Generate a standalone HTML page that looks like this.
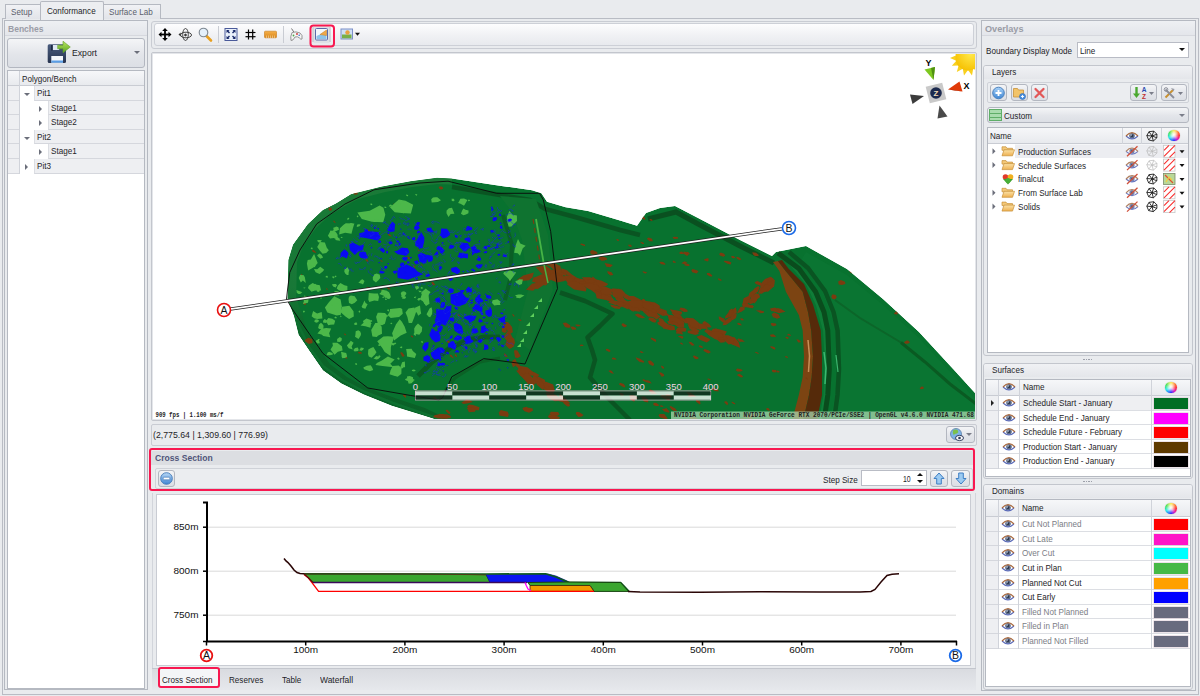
<!DOCTYPE html><html><head><meta charset="utf-8"><style>
*{box-sizing:border-box;margin:0;padding:0}
html,body{width:1200px;height:696px;overflow:hidden;background:#e9ebee;font-family:"Liberation Sans",sans-serif;font-size:11px;color:#1e1e28}
.a{position:absolute}
.t{position:absolute;white-space:nowrap;line-height:13px;font-size:10px;transform-origin:0 0;margin-top:-0.4px}
.panel{position:absolute;border:1px solid #b5b9c1;background:#e9ebee}
.hdr{position:absolute;left:0;right:0;top:0;background:linear-gradient(#eef0f3,#e1e3e8);border-bottom:1px solid #d5d8de}
.btn{position:absolute;border:1px solid #b3b7c0;border-radius:3px;background:linear-gradient(#f4f5f7,#e3e5ea 55%,#dcdfe5)}
.grid{position:absolute;border:1px solid #b5b9c1;background:#fff}
.gh{position:absolute;background:linear-gradient(#f6f7f9,#e8eaee);border-bottom:1px solid #c9ccd3}
.vl{position:absolute;width:1px;background:#d0d3da}
.hl{position:absolute;height:1px;background:#dddfe4}
.sw{position:absolute;box-shadow:0 0 0 0.500px rgba(215,195,205,0.9)}
.grey{color:#7b7d85}
</style></head><body><div class="a" style="left:1.500px;top:18px;width:1197.500px;height:677px;border:1px solid #b9bcc4;background:#e9ebee"></div>
<div class="a" style="left:5px;top:4px;width:36px;height:15px;border:1px solid #b5b9c1;border-bottom:none;background:linear-gradient(#f1f2f5,#e2e4e9)"></div>
<div class="a" style="left:103px;top:4px;width:58px;height:15px;border:1px solid #b5b9c1;border-bottom:none;background:linear-gradient(#f1f2f5,#e2e4e9)"></div>
<div class="a" style="left:40px;top:1px;width:64px;height:19px;border:1px solid #b5b9c1;border-bottom:none;background:#eceef1;border-radius:2px 2px 0 0"></div>
<div class="t " style="left:11px;top:5px;font-size:9.5px;transform:scaleX(0.853);color:#5a5d6b">Setup</div>
<div class="t " style="left:47px;top:4px;font-size:9.5px;transform:scaleX(0.853);">Conformance</div>
<div class="t " style="left:109px;top:5px;font-size:9.5px;transform:scaleX(0.853);color:#5a5d6b">Surface Lab</div>
<div class="panel" style="left:4px;top:20px;width:144px;height:670px"></div>
<div class="a" style="left:5px;top:21px;width:142px;height:15px;background:linear-gradient(#eef0f3,#e3e5ea)"></div>
<div class="a" style="left:5px;top:35px;width:142px;height:1px;background:#d6d8de"></div>
<div class="t " style="left:8px;top:22px;font-size:9.5px;font-weight:bold;transform:scaleX(0.897);color:#9a9ca6">Benches</div>
<div class="btn" style="left:7px;top:38px;width:138px;height:30px"></div>
<svg class="a" style="left:46px;top:40px" width="26" height="24" viewBox="0 0 26 24">
<defs><linearGradient id="fl" x1="0" y1="0" x2="0" y2="1"><stop offset="0" stop-color="#4a5c7e"/><stop offset="1" stop-color="#27344f"/></linearGradient>
<linearGradient id="ga" x1="0" y1="0" x2="0" y2="1"><stop offset="0" stop-color="#b9e660"/><stop offset="1" stop-color="#5aa422"/></linearGradient></defs>
<rect x="1.700" y="4.300" width="18.300" height="18.700" rx="1.500" fill="url(#fl)"/>
<rect x="6.700" y="5" width="6.500" height="5" fill="#dfe8f4"/>
<rect x="5" y="5" width="1.700" height="5.500" fill="#1e2a44"/>
<rect x="5.300" y="16" width="11.700" height="6.700" fill="#f4f7fb"/>
<rect x="5.300" y="20.500" width="11.700" height="2.200" fill="#5a9ee6"/>
<path d="M11.700 5.200 h5.300 v-4 l7.300 5.800 l-7.300 5.800 v-4 h-5.300z" fill="url(#ga)" stroke="#5f9d25" stroke-width="0.600"/>
</svg>
<div class="t " style="left:71.5px;top:46px;font-size:9.5px;transform:scaleX(0.911);">Export</div>
<div class="a" style="left:134px;top:51px;width:0;height:0;border-left:3px solid transparent;border-right:3px solid transparent;border-top:3px solid #6b6e7a"></div>
<div class="grid" style="left:7px;top:70px;width:138px;height:619px"></div>
<div class="gh" style="left:8px;top:71px;width:136px;height:15px"></div>
<div class="vl" style="left:19px;top:71px;height:103px"></div>
<div class="t " style="left:22px;top:72px;font-size:9.5px;transform:scaleX(0.853);">Polygon/Bench</div>
<div class="a" style="left:8px;top:86px;width:11px;height:15px;background:#eeeff2;border-bottom:1px solid #d5d7dd"></div>
<div class="a" style="left:34px;top:86px;width:110px;height:15px;background:#eeeff2;border-bottom:1px solid #d5d7dd;border-left:1px solid #dcdee3"></div>
<div class="t " style="left:37px;top:86.7px;font-size:9.5px;transform:scaleX(0.853);">Pit1</div>
<div class="a" style="left:24px;top:93px;width:0;height:0;border-left:3px solid transparent;border-right:3px solid transparent;border-top:3px solid #6b6e7a"></div>
<div class="a" style="left:8px;top:101px;width:11px;height:14px;background:#eeeff2;border-bottom:1px solid #d5d7dd"></div>
<div class="a" style="left:48px;top:101px;width:96px;height:14px;background:#eeeff2;border-bottom:1px solid #d5d7dd;border-left:1px solid #dcdee3"></div>
<div class="t " style="left:51px;top:101.7px;font-size:9.5px;transform:scaleX(0.853);">Stage1</div>
<div class="a" style="left:39px;top:105.5px;width:0;height:0;border-top:3px solid transparent;border-bottom:3px solid transparent;border-left:3px solid #6b6e7a"></div>
<div class="a" style="left:8px;top:115px;width:11px;height:15px;background:#eeeff2;border-bottom:1px solid #d5d7dd"></div>
<div class="a" style="left:48px;top:115px;width:96px;height:15px;background:#eeeff2;border-bottom:1px solid #d5d7dd;border-left:1px solid #dcdee3"></div>
<div class="t " style="left:51px;top:115.7px;font-size:9.5px;transform:scaleX(0.853);">Stage2</div>
<div class="a" style="left:39px;top:119.5px;width:0;height:0;border-top:3px solid transparent;border-bottom:3px solid transparent;border-left:3px solid #6b6e7a"></div>
<div class="a" style="left:8px;top:130px;width:11px;height:14px;background:#eeeff2;border-bottom:1px solid #d5d7dd"></div>
<div class="a" style="left:34px;top:130px;width:110px;height:14px;background:#eeeff2;border-bottom:1px solid #d5d7dd;border-left:1px solid #dcdee3"></div>
<div class="t " style="left:37px;top:130.7px;font-size:9.5px;transform:scaleX(0.853);">Pit2</div>
<div class="a" style="left:24px;top:137px;width:0;height:0;border-left:3px solid transparent;border-right:3px solid transparent;border-top:3px solid #6b6e7a"></div>
<div class="a" style="left:8px;top:144px;width:11px;height:15px;background:#eeeff2;border-bottom:1px solid #d5d7dd"></div>
<div class="a" style="left:48px;top:144px;width:96px;height:15px;background:#eeeff2;border-bottom:1px solid #d5d7dd;border-left:1px solid #dcdee3"></div>
<div class="t " style="left:51px;top:144.7px;font-size:9.5px;transform:scaleX(0.853);">Stage1</div>
<div class="a" style="left:39px;top:148.5px;width:0;height:0;border-top:3px solid transparent;border-bottom:3px solid transparent;border-left:3px solid #6b6e7a"></div>
<div class="a" style="left:8px;top:159px;width:11px;height:15px;background:#eeeff2;border-bottom:1px solid #d5d7dd"></div>
<div class="a" style="left:34px;top:159px;width:110px;height:15px;background:#eeeff2;border-bottom:1px solid #d5d7dd;border-left:1px solid #dcdee3"></div>
<div class="t " style="left:37px;top:159.7px;font-size:9.5px;transform:scaleX(0.853);">Pit3</div>
<div class="a" style="left:25px;top:163.5px;width:0;height:0;border-top:3px solid transparent;border-bottom:3px solid transparent;border-left:3px solid #6b6e7a"></div>
<div class="a" style="left:151px;top:21px;width:826px;height:28px;border:1px solid #c9ccd3;border-radius:3px;background:#e9ebee"></div>
<div class="a" style="left:154px;top:23px;width:820px;height:23px;border:1px solid #cdd0d7;border-radius:3px;background:linear-gradient(#fdfdfe,#f0f1f4 55%,#e8eaee)"></div>
<svg class="a" style="left:153px;top:22px" width="822" height="27" viewBox="153 22 822 27"><g transform="translate(165,34.500)" fill="#000" stroke="none"><rect x="-5" y="-0.900" width="10" height="1.800"/><rect x="-0.900" y="-5" width="1.800" height="10"/><path d="M-6.500 0 L-3.500 -2.800 V2.800z M6.500 0 L3.500 -2.800 V2.800z M0 -6.500 L-2.800 -3.500 H2.800z M0 6.500 L-2.800 3.500 H2.800z"/></g><g transform="translate(185.500,34.500)" fill="none" stroke="#333" stroke-width="0.900"><ellipse cx="0" cy="0" rx="2.800" ry="6"/><ellipse cx="0.500" cy="0.500" rx="5.500" ry="2.800"/><circle cx="0" cy="0.500" r="0.900" fill="#333"/><path d="M-7 0 l2.200 -2 v4z" fill="#333" stroke="none"/></g><g transform="translate(205,34)"><line x1="1.500" y1="2" x2="6" y2="6.500" stroke="#e8a020" stroke-width="2.600" stroke-linecap="round"/><circle cx="-1.500" cy="-1.500" r="4.300" fill="#e4f0fb" stroke="#7d8791" stroke-width="1.100"/></g><line x1="218.500" y1="26" x2="218.500" y2="43" stroke="#c9ccd3"/><g transform="translate(231,34.500)"><rect x="-6" y="-6" width="12" height="12" fill="#eaf1fb" stroke="#4a5a9a" stroke-width="1"/><g fill="#1a2a6a"><path d="M-4.500 -4.500 h3 l-1 1 1.500 1.500 -1 1 -1.500 -1.500 -1 1z"/><path d="M4.500 -4.500 v3 l-1 -1 -1.500 1.500 -1 -1 1.500 -1.500 -1 -1z"/><path d="M-4.500 4.500 v-3 l1 1 1.500 -1.500 1 1 -1.500 1.500 1 1z"/><path d="M4.500 4.500 h-3 l1 -1 -1.500 -1.500 1 -1 1.500 1.500 1 -1z"/></g></g><g transform="translate(250.500,34.500)" stroke="#000" stroke-width="1.200"><line x1="-2" y1="-5" x2="-2" y2="5"/><line x1="2.200" y1="-5" x2="2.200" y2="5"/><line x1="-5" y1="-2" x2="5" y2="-2"/><line x1="-5" y1="2.200" x2="5" y2="2.200"/></g><defs><linearGradient id="rul" x1="0" y1="0" x2="0" y2="1"><stop offset="0" stop-color="#f6b04a"/><stop offset="1" stop-color="#d9861a"/></linearGradient></defs><rect x="264.500" y="31.200" width="12" height="6.600" rx="0.800" fill="url(#rul)" stroke="#c97a18" stroke-width="0.600"/><line x1="266.5" y1="35.500" x2="266.5" y2="38" stroke="#f9dca8" stroke-width="0.600"/><line x1="268.5" y1="35.500" x2="268.5" y2="38" stroke="#f9dca8" stroke-width="0.600"/><line x1="270.5" y1="35.500" x2="270.5" y2="38" stroke="#f9dca8" stroke-width="0.600"/><line x1="272.5" y1="35.500" x2="272.5" y2="38" stroke="#f9dca8" stroke-width="0.600"/><line x1="274.5" y1="35.500" x2="274.5" y2="38" stroke="#f9dca8" stroke-width="0.600"/><line x1="283.500" y1="26" x2="283.500" y2="43" stroke="#c9ccd3"/><g transform="translate(296,35)"><path d="M-4.500 -6.500 L-1.500 -2" stroke="#777" stroke-width="1" fill="none"/><path d="M-4 -2.500 Q0 -4 4 -2 Q7 0 6 4 Q5 5 3.500 3 Q1.500 1 -1 2 Q-3 6 -5 5.500 Q-6 2 -4 -2.500z" fill="#f3f3f3" stroke="#8a8a8a" stroke-width="0.900"/><circle cx="-2.500" cy="0.500" r="0.900" fill="#4aa84a"/><circle cx="1" cy="-1" r="0.900" fill="#d03030"/><circle cx="3.200" cy="0.300" r="0.800" fill="#3a6ad0"/></g><rect x="313.500" y="26" width="16" height="17" fill="#dfe1e6"/><line x1="313" y1="27" x2="313" y2="42" stroke="#b7bac2"/><line x1="330" y1="27" x2="330" y2="42" stroke="#b7bac2"/><rect x="315.500" y="28.500" width="12" height="11.500" rx="1" fill="#f4f8fd" stroke="#5a6aaa" stroke-width="1"/><path d="M316.500 36 L320 34.500 L326.500 30.500 V39 H316.500z" fill="#8ec4ea"/><path d="M320 34.500 L326.500 30 V35.500z" fill="#f0a848" stroke="#d08020" stroke-width="0.500"/><rect x="310.500" y="25.500" width="23.500" height="21" rx="3" fill="none" stroke="#f81850" stroke-width="2"/><rect x="341" y="29" width="11.500" height="10" fill="#cfe0f6" stroke="#7d8fc8" stroke-width="1"/><rect x="342" y="34.500" width="9.500" height="3.800" fill="#78b048"/><circle cx="347.500" cy="32.500" r="2.200" fill="#e8a040"/><path d="M355 32.800 h5 l-2.500 3z" fill="#111"/></svg>
<div class="a" style="left:151px;top:52px;width:826px;height:369px;border:1px solid #c3c6cd;border-radius:2px;background:#fff;box-shadow:inset 0 0 0 1px #e4e6ea"></div>
<svg class="a" style="left:153px;top:54px" width="821.800" height="364.600" viewBox="153 54 821.800 364.600"><defs><linearGradient id="ringg" x1="0" y1="0" x2="1" y2="0"><stop offset="0" stop-color="#7a3c10"/><stop offset="1" stop-color="#4e2a08"/></linearGradient></defs><clipPath id="oc"><polygon points="287.5,300 288.4,260 293,244.7 308,224 323,210 336,203.6 351,194.3 381,186.8 410.7,181.2 437,177.8 452,178.4 494.7,185 532,190.2 541.4,193.3 547,201.7 565.7,207.3 588,211 620,220.4 637,225.7 646,213 660,208 675,206 700,219 740,240 772,256 776,252 806,246 847,269 883,299 919,332 955,371 976,394 976,420 438,420 422,415 392,405.8 364,394.6 341.6,383.4 323,370.3 310,351.6 298.7,334.8 294,316 288.4,301"/></clipPath><g clip-path="url(#oc)"><polygon points="287.5,300 288.4,260 293,244.7 308,224 323,210 336,203.6 351,194.3 381,186.8 410.7,181.2 437,177.8 452,178.4 494.7,185 532,190.2 541.4,193.3 547,201.7 565.7,207.3 588,211 620,220.4 637,225.7 646,213 660,208 675,206 700,219 740,240 772,256 776,252 806,246 847,269 883,299 919,332 955,371 976,394 976,420 438,420 422,415 392,405.8 364,394.6 341.6,383.4 323,370.3 310,351.6 298.7,334.8 294,316 288.4,301" fill="#08722f"/><linearGradient id="rimg" gradientUnits="userSpaceOnUse" x1="0" y1="180" x2="0" y2="420"><stop offset="0" stop-color="#1a7a37"/><stop offset="0.45" stop-color="#187837"/><stop offset="0.62" stop-color="#0c672a"/><stop offset="1" stop-color="#0a6027"/></linearGradient><polygon points="452,178.4 437,177.8 410.7,181.2 381,186.8 351,194.3 336,203.6 323,210 308,224 293,244.7 288.4,260 287.5,300 288.4,301 294,316 298.7,334.8 310,351.6 323,370.3 341.6,383.4 364,394.6 392,405.8 422,415 438,420 450,420 425,408 395,398 368,388 347,377 330,364 318,347 307,331 302,314 297,301 296,300 297,262 303,246 316,228 330,215 345,206 358,199 385,192 412,187 437,184 452,184.5" fill="url(#rimg)"/><polygon points="806,252 847,275 883,305 919,338 955,377 976,400 976,420 830,420 838,380 836,330 822,290 800,262" fill="#0a7532"/><polyline points="452,187 494,194 530,200 545,209 575,217 620,230 640,235" fill="none" stroke="#0a5522" stroke-width="4.500"/><polyline points="648,219 676,212 700,225 740,246 774,263" fill="none" stroke="#0a5020" stroke-width="5"/><polygon points="500,196 536,199 548,235 553,290 530,350 515,340 528,290 522,240 512,212" fill="#0f7330"/><polyline points="503,215 512,245 510,280 505,300" fill="none" stroke="#0a5f25" stroke-width="4"/><polyline points="418,376 432,362 450,348 468,340 485,337 500,337" fill="none" stroke="#0a5a22" stroke-width="5" stroke-linejoin="round"/><polyline points="438,400 455,378 480,362 500,358" fill="none" stroke="#0b6226" stroke-width="3"/><polyline points="560,292.500 585,301 612.500,313.700 600,326 587.500,337.500 592,350 595,360 590,377.500 605,395 620,410 630,420" fill="none" stroke="#0a5522" stroke-width="4.500" stroke-linejoin="round"/><polyline points="901,342.500 925,362 950,384 976,404" fill="none" stroke="#0a5a22" stroke-width="3"/><polyline points="835,300 860,318 901,342.500" fill="none" stroke="#0c6529" stroke-width="2"/><polyline points="297,322 309,347 323,366 342,380 365,392 393,403 422,413 442,420" fill="none" stroke="#0e7030" stroke-width="2.500"/><polygon points="773,262 779.4,271 785.9,291.7 798.8,315 802.7,330.5 804,356.4 802.7,377 798.8,395 792,421 803,421 809,395 811.7,377 813,356.4 811.2,330.5 808,312 802.7,291.7 784.6,269.7 778,261" fill="#7c4412"/><polygon points="778,261 784.6,269.7 802.7,291.7 808,312 811.2,330.5 813,356.4 811.7,377 809,395 803,421 817,421 822,395 822,377 822,356.4 820.8,330.5 813,304.6 804,284 788.4,268.4 782,260" fill="#552a0a"/><polyline points="808,340 809.500,356 808.500,372" fill="none" stroke="#c89058" stroke-width="1.500"/><polyline points="790,262 808,284 818,305 825,330.500 826.500,356 826,377 825.500,395 821,421" fill="none" stroke="#0f7d38" stroke-width="4"/><polyline points="778,253 798.800,268.400 815.600,291.700 824,312 827.800,330.500 829.300,369 827.800,395 824,421" fill="none" stroke="#0a4c1d" stroke-width="5" stroke-linejoin="round"/><polyline points="789,252 808,268 825,291 833.500,312 837.600,330.500 839,369 837.500,395 834,421" fill="none" stroke="#0a5422" stroke-width="4.500" stroke-linejoin="round"/><polyline points="824,352 826,368 825,384" fill="none" stroke="#3db870" stroke-width="1.500"/><polyline points="836,355 838,372" fill="none" stroke="#3db870" stroke-width="1.200"/><polygon points="532.1,281.7 533.6,277.6 544.0,278.0 550.6,279.5 546.1,285.2 540.2,284.4" fill="#7a3c10" transform="rotate(2 540.4 281.1)"/><polygon points="564.2,281.7 556.6,282.1 551.3,279.3 554.9,275.4 561.6,275.9 565.6,277.9" fill="#7a3c10" transform="rotate(-8 559.1 278.1)"/><polygon points="546.7,278.0 546.4,281.1 537.5,282.2 532.7,278.0 535.9,275.2 543.8,275.6" fill="#7a3c10" transform="rotate(-28 539.9 277.7)"/><polygon points="539.0,286.0 535.4,289.5 531.5,290.5 525.5,286.6 528.5,285.6 533.8,283.7" fill="#7a3c10" transform="rotate(-26 532.6 287.1)"/><polygon points="543.7,274.6 545.9,271.1 553.1,270.0 559.1,272.2 554.8,275.5 548.7,277.1" fill="#7a3c10" transform="rotate(-21 551.9 273.8)"/><polygon points="543.5,286.0 536.9,288.7 532.2,286.9 530.5,283.4 538.8,281.9 545.0,283.5" fill="#7a3c10" transform="rotate(-14 539.1 285.0)"/><polygon points="562.7,272.8 563.1,277.0 562.4,279.4 553.6,277.6 551.1,274.4 557.2,273.9" fill="#7a3c10" transform="rotate(-15 558.5 276.1)"/><polygon points="528.2,281.1 520.7,279.3 517.0,276.6 524.1,274.6 535.2,275.3 532.3,279.3" fill="#7a3c10" transform="rotate(-19 526.5 277.8)"/><polygon points="556.9,275.3 551.4,274.3 552.4,272.4 557.9,271.1 559.1,272.8 559.3,274.3" fill="#7a3c10" transform="rotate(-23 556.3 273.2)"/><polygon points="549.6,263.3 559.7,262.8 562.1,265.9 557.2,267.8 546.0,268.1 546.6,264.5" fill="#7a3c10" transform="rotate(27 553.5 265.6)"/><polygon points="693.2,327.4 699.4,327.4 699.3,329.7 697.1,331.7 689.8,331.4 685.3,328.7" fill="#7a3c10" transform="rotate(36 694.1 329.4)"/><polygon points="710.4,331.0 714.9,332.0 717.2,334.0 712.0,336.4 703.8,335.3 704.9,332.3" fill="#7a3c10" transform="rotate(33 711.3 333.7)"/><polygon points="590.6,278.8 598.6,279.9 602.1,282.2 598.1,284.2 591.3,284.1 590.5,280.7" fill="#7a3c10" transform="rotate(32 595.5 281.4)"/><polygon points="621.1,298.9 615.4,298.4 613.2,297.1 612.1,294.1 619.0,293.5 624.8,296.2" fill="#7a3c10" transform="rotate(21 617.7 296.5)"/><polygon points="592.3,297.2 596.6,292.8 606.0,290.7 615.4,293.6 615.6,297.0 604.3,298.5" fill="#7a3c10" transform="rotate(31 603.6 294.2)"/><polygon points="588.1,279.7 593.6,279.7 595.1,281.2 595.9,283.2 591.6,284.0 586.2,281.6" fill="#7a3c10" transform="rotate(11 591.5 281.4)"/><polygon points="589.4,285.1 595.2,282.3 599.9,283.6 603.5,286.7 601.9,290.1 591.0,288.1" fill="#7a3c10" transform="rotate(17 597.3 286.0)"/><polygon points="661.0,311.8 659.3,316.2 649.7,315.7 644.6,314.5 647.7,310.5 652.8,310.3" fill="#7a3c10" transform="rotate(29 651.6 312.9)"/><polygon points="597.4,299.5 595.1,294.3 597.8,292.3 607.0,292.4 612.1,295.0 607.0,299.5" fill="#7a3c10" transform="rotate(10 604.3 295.3)"/><polygon points="579.0,276.7 581.9,280.0 580.2,282.6 569.4,282.1 565.6,278.5 570.7,275.4" fill="#7a3c10" transform="rotate(23 573.2 278.9)"/><polygon points="615.3,287.3 610.8,290.3 607.3,292.8 597.0,291.5 595.7,288.7 604.1,286.6" fill="#7a3c10" transform="rotate(18 604.7 289.2)"/><polygon points="693.5,322.6 703.6,324.4 702.5,326.4 701.4,328.9 690.8,328.4 691.3,326.0" fill="#7a3c10" transform="rotate(15 697.0 326.3)"/><polygon points="588.1,284.7 579.4,287.9 572.5,284.2 573.8,279.5 586.3,278.3 593.4,281.8" fill="#7a3c10" transform="rotate(13 580.9 283.0)"/><polygon points="576.8,284.7 573.3,282.2 581.3,279.9 588.6,281.0 588.6,283.8 583.5,286.0" fill="#7a3c10" transform="rotate(30 582.5 282.5)"/><polygon points="725.1,330.5 722.0,331.8 715.9,334.2 711.4,333.2 712.6,330.1 716.2,329.0" fill="#7a3c10" transform="rotate(18 717.2 331.1)"/><polygon points="676.4,310.6 681.6,309.9 682.1,312.6 680.2,314.1 674.1,315.3 669.1,312.0" fill="#7a3c10" transform="rotate(21 677.1 312.4)"/><polygon points="654.4,307.2 652.3,306.8 647.6,303.8 653.6,302.9 659.0,303.3 660.3,305.8" fill="#7a3c10" transform="rotate(24 654.4 305.3)"/><polygon points="549.6,274.9 542.4,274.8 534.9,270.6 544.2,266.0 552.0,268.7 554.0,271.5" fill="#7a3c10" transform="rotate(18 546.7 271.0)"/><polygon points="665.7,307.1 667.7,311.2 664.7,313.6 654.7,313.8 649.7,311.3 652.9,308.7" fill="#7a3c10" transform="rotate(27 658.9 311.2)"/><polygon points="567.3,272.0 563.1,273.7 555.6,273.1 550.7,270.9 555.9,268.8 565.4,269.4" fill="#7a3c10" transform="rotate(25 559.0 271.5)"/><polygon points="686.5,322.3 682.4,325.6 670.9,326.0 665.9,321.6 675.5,316.3 683.5,318.0" fill="#7a3c10" transform="rotate(35 677.2 321.2)"/><polygon points="655.6,310.0 657.5,312.8 655.7,315.5 649.5,317.4 642.4,314.3 646.6,309.9" fill="#7a3c10" transform="rotate(18 651.0 314.0)"/><polygon points="643.1,309.4 636.7,307.5 637.5,305.5 644.3,303.6 653.3,306.4 648.9,309.5" fill="#7a3c10" transform="rotate(28 644.7 306.9)"/><polygon points="559.5,277.9 550.3,280.7 542.5,279.3 546.6,275.0 555.0,272.5 559.7,275.0" fill="#7a3c10" transform="rotate(9 552.6 276.6)"/><polygon points="669.8,312.7 664.4,315.0 659.7,314.4 658.2,311.9 662.9,310.5 667.5,311.8" fill="#7a3c10" transform="rotate(28 663.8 312.5)"/><polygon points="593.0,277.5 603.1,280.3 598.5,283.9 588.5,284.6 581.0,283.3 588.0,278.9" fill="#7a3c10" transform="rotate(32 591.8 281.2)"/><polygon points="549.7,267.9 548.2,265.5 555.5,263.0 560.0,265.4 560.2,267.8 554.5,269.4" fill="#7a3c10" transform="rotate(28 554.2 266.3)"/><polygon points="708.6,322.2 712.6,323.5 709.1,326.3 703.2,326.2 702.3,324.4 703.2,322.1" fill="#7a3c10" transform="rotate(33 706.0 324.0)"/><polygon points="630.4,295.0 631.9,298.0 628.6,299.2 624.5,299.0 620.6,296.5 624.1,294.8" fill="#7a3c10" transform="rotate(28 626.8 297.4)"/><polygon points="674.9,317.4 670.7,314.9 677.0,313.5 681.0,314.7 683.4,316.5 680.7,318.1" fill="#7a3c10" transform="rotate(18 677.7 315.7)"/><polygon points="717.0,341.6 714.2,339.1 718.7,336.4 724.4,337.8 725.9,339.8 722.5,342.4" fill="#7a3c10" transform="rotate(32 721.0 339.4)"/><polygon points="593.9,281.8 599.9,280.5 607.8,280.6 606.7,283.4 601.4,287.4 597.3,285.3" fill="#7a3c10" transform="rotate(25 600.3 283.4)"/><polygon points="570.0,285.0 563.5,282.2 562.8,279.5 571.8,278.5 578.9,279.1 577.4,282.6" fill="#7a3c10" transform="rotate(33 571.4 280.9)"/><polygon points="627.0,299.1 627.7,301.9 624.7,303.9 616.2,303.0 612.6,300.6 619.0,296.7" fill="#7a3c10" transform="rotate(35 621.7 300.9)"/><polygon points="610.8,292.2 610.5,290.2 618.7,288.6 621.6,290.4 624.4,293.3 616.0,293.8" fill="#7a3c10" transform="rotate(7 617.6 291.6)"/><polygon points="567.1,274.7 561.8,274.7 559.9,271.9 565.8,270.6 572.4,271.6 572.9,273.3" fill="#7a3c10" transform="rotate(32 566.9 272.6)"/><polygon points="726.7,330.8 724.6,335.8 718.2,334.7 711.7,333.0 714.8,328.9 720.0,329.3" fill="#7a3c10" transform="rotate(6 719.3 332.2)"/><polygon points="631.6,297.5 642.9,297.2 644.9,302.9 636.7,304.4 631.3,302.7 626.1,300.4" fill="#7a3c10" transform="rotate(29 635.3 300.7)"/><polygon points="547.8,266.7 551.9,270.4 549.7,274.6 540.7,273.8 536.7,272.0 539.3,268.9" fill="#7a3c10" transform="rotate(33 544.0 271.4)"/><polygon points="555.0,277.7 559.3,276.1 564.6,275.5 567.8,278.6 562.8,279.9 558.1,279.7" fill="#7a3c10" transform="rotate(18 561.0 277.9)"/><polygon points="622.9,302.1 633.2,302.9 640.1,305.7 634.8,310.9 628.9,309.0 622.2,306.8" fill="#7a3c10" transform="rotate(17 630.9 306.0)"/><polygon points="644.2,306.6 641.1,303.2 649.2,301.7 654.0,303.4 654.8,306.4 651.5,308.1" fill="#7a3c10" transform="rotate(9 648.3 304.8)"/><polygon points="669.0,319.9 665.6,318.1 670.6,316.1 677.1,317.0 677.0,319.6 673.0,321.3" fill="#7a3c10" transform="rotate(29 673.0 318.9)"/><polygon points="694.0,328.0 697.2,324.3 701.8,323.7 705.7,324.0 708.5,327.1 703.1,328.3" fill="#7a3c10" transform="rotate(17 701.5 325.9)"/><polygon points="632.9,304.1 642.1,304.9 650.6,306.2 648.7,311.2 639.5,310.2 632.5,308.1" fill="#7a3c10" transform="rotate(12 640.7 307.6)"/><polygon points="730.1,338.9 724.6,339.5 720.5,338.3 718.0,336.6 723.1,335.7 728.0,336.5" fill="#7a3c10" transform="rotate(23 724.0 337.3)"/><polygon points="660.4,305.9 657.1,310.6 644.9,309.4 640.5,306.0 646.9,303.6 654.5,302.1" fill="#7a3c10" transform="rotate(7 652.4 305.9)"/><polygon points="572.0,281.8 580.7,282.8 586.9,286.5 586.7,289.9 574.7,290.0 566.3,286.0" fill="#7a3c10" transform="rotate(11 577.3 286.0)"/><polygon points="642.9,305.9 637.6,303.6 642.1,301.0 648.4,300.0 652.2,303.3 647.2,305.5" fill="#7a3c10" transform="rotate(20 644.7 303.0)"/><polygon points="725.6,343.8 727.8,340.1 732.6,337.3 738.2,339.6 742.4,344.7 732.8,344.7" fill="#7a3c10" transform="rotate(24 733.3 341.5)"/><polygon points="700.9,324.5 693.1,326.4 683.1,324.9 684.7,321.5 690.7,318.2 697.9,319.0" fill="#7a3c10" transform="rotate(33 692.0 322.5)"/><polygon points="723.4,340.8 722.8,336.7 727.5,335.6 734.0,336.4 734.5,341.8 730.2,344.4" fill="#7a3c10" transform="rotate(15 728.8 338.7)"/><polygon points="620.7,288.6 625.3,291.4 622.2,298.2 613.9,297.5 611.7,292.5 611.3,289.9" fill="#7a3c10" transform="rotate(15 617.8 293.0)"/><polygon points="724.3,334.0 728.4,338.1 723.4,338.8 718.5,339.9 715.9,337.7 717.7,333.2" fill="#7a3c10" transform="rotate(15 720.6 337.1)"/><polygon points="719.9,338.7 716.2,339.7 707.6,337.0 711.3,333.3 718.4,330.6 724.0,335.4" fill="#7a3c10" transform="rotate(17 716.8 335.5)"/><polygon points="674.0,324.2 670.2,322.3 668.1,319.3 674.2,317.3 681.2,317.6 684.2,322.1" fill="#7a3c10" transform="rotate(14 675.0 319.9)"/><polygon points="602.9,294.9 596.4,293.2 599.1,289.1 603.0,290.2 609.6,291.8 606.9,295.1" fill="#7a3c10" transform="rotate(21 603.3 292.3)"/><polygon points="586.0,288.5 583.6,285.5 589.9,283.2 597.8,283.9 600.5,287.8 594.2,290.8" fill="#7a3c10" transform="rotate(13 591.4 286.2)"/><polygon points="638.9,299.8 646.2,303.5 643.8,306.6 633.6,308.2 628.6,304.8 628.0,301.9" fill="#7a3c10" transform="rotate(6 636.5 304.6)"/><polygon points="648.0,309.3 642.0,307.4 641.9,303.9 645.8,302.1 653.2,303.7 653.4,309.0" fill="#7a3c10" transform="rotate(21 647.0 306.4)"/><polygon points="608.3,288.3 613.8,292.1 608.2,294.2 603.1,295.7 599.5,292.8 602.8,290.6" fill="#7a3c10" transform="rotate(20 606.1 292.0)"/><polygon points="675.8,332.4 676.1,329.9 679.6,329.5 683.1,331.0 683.4,332.7 677.6,332.7" fill="#7a3c10" transform="rotate(28 678.7 331.6)"/><polygon points="623.6,307.9 620.0,307.2 621.5,304.8 623.9,302.6 628.1,304.0 629.9,307.0" fill="#7a3c10" transform="rotate(32 624.8 305.6)"/><polygon points="658.1,325.3 656.9,323.8 659.1,321.9 664.3,322.5 667.2,324.7 662.5,326.3" fill="#7a3c10" transform="rotate(19 661.1 324.2)"/><polygon points="707.6,341.5 700.2,340.8 696.1,339.1 700.5,335.8 710.0,337.3 709.6,339.1" fill="#7a3c10" transform="rotate(17 703.9 338.9)"/><polygon points="616.4,305.4 620.6,305.6 619.9,307.8 615.1,308.5 611.4,307.7 609.6,305.6" fill="#7a3c10" transform="rotate(13 615.0 307.0)"/><polygon points="611.5,297.8 608.0,299.3 602.4,299.1 600.5,296.7 601.7,294.8 610.1,295.5" fill="#7a3c10" transform="rotate(18 605.2 297.3)"/><polygon points="639.2,317.9 634.7,317.1 636.9,314.6 641.5,314.6 644.6,315.5 642.3,316.6" fill="#7a3c10" transform="rotate(27 639.7 315.9)"/><polygon points="670.9,330.0 663.4,329.5 660.7,326.4 668.1,324.5 674.1,325.3 675.4,328.8" fill="#7a3c10" transform="rotate(11 668.9 327.6)"/><polygon points="669.0,324.5 666.8,322.6 669.2,321.4 673.0,321.0 674.7,322.5 673.3,324.2" fill="#7a3c10" transform="rotate(21 670.5 322.9)"/><polygon points="662.0,323.8 658.4,321.9 657.2,319.8 661.6,318.8 665.9,320.8 665.9,322.4" fill="#7a3c10" transform="rotate(34 661.6 321.2)"/><polygon points="676.0,331.3 677.2,328.4 682.0,327.1 686.1,327.5 686.1,330.6 679.1,332.3" fill="#7a3c10" transform="rotate(10 680.7 329.7)"/><polygon points="621.5,307.3 616.3,305.8 615.6,302.7 620.7,301.5 626.2,302.9 624.8,304.5" fill="#7a3c10" transform="rotate(16 620.9 303.9)"/><polygon points="693.2,330.0 695.8,330.5 699.1,332.6 696.0,334.5 688.2,334.2 687.5,332.2" fill="#7a3c10" transform="rotate(13 693.5 332.2)"/><polygon points="641.0,310.4 632.3,311.5 628.3,309.7 631.8,307.6 638.1,306.4 638.5,308.0" fill="#7a3c10" transform="rotate(13 634.9 308.9)"/><polygon points="652.0,317.8 656.3,318.5 656.2,321.1 653.2,321.8 648.2,321.5 648.5,319.3" fill="#7a3c10" transform="rotate(30 652.5 320.2)"/><polygon points="616.4,305.0 608.2,303.1 609.4,301.9 612.6,300.0 617.6,300.7 616.7,303.3" fill="#7a3c10" transform="rotate(7 613.5 302.2)"/><polygon points="674.3,325.2 671.5,324.8 672.3,322.6 676.4,322.5 680.0,323.8 678.2,324.7" fill="#7a3c10" transform="rotate(18 675.8 324.0)"/><polygon points="659.3,326.1 658.6,324.1 660.8,321.1 667.6,322.9 671.3,324.8 667.8,327.4" fill="#7a3c10" transform="rotate(23 664.2 324.4)"/><polygon points="735.0,319.0 730.9,318.9 729.2,315.5 732.0,314.9 738.2,315.5 736.9,317.3" fill="#7a3c10" transform="rotate(-35 734.0 317.0)"/><polygon points="738.9,303.3 740.6,299.7 747.2,297.4 751.0,300.1 752.0,302.7 748.0,303.5" fill="#7a3c10" transform="rotate(-60 746.1 300.9)"/><polygon points="729.0,312.9 727.1,311.9 730.3,309.8 733.7,310.0 733.4,312.1 731.9,313.0" fill="#7a3c10" transform="rotate(-37 730.6 311.7)"/><polygon points="767.7,290.8 763.5,292.5 759.0,291.1 756.8,288.0 763.5,285.8 769.9,288.8" fill="#7a3c10" transform="rotate(-50 763.2 289.5)"/><polygon points="755.3,292.3 756.1,295.3 751.5,296.4 748.0,294.9 746.5,293.5 751.0,291.5" fill="#7a3c10" transform="rotate(-48 751.9 294.0)"/><polygon points="724.1,323.3 721.4,321.2 725.0,319.3 731.7,319.5 732.6,322.1 731.1,323.8" fill="#7a3c10" transform="rotate(-40 727.4 321.6)"/><polygon points="738.4,311.0 736.0,315.3 730.3,316.0 725.8,313.4 727.1,310.2 734.2,310.7" fill="#7a3c10" transform="rotate(-42 732.3 312.6)"/><polygon points="749.9,300.1 751.7,301.3 750.8,302.8 746.3,302.7 744.6,301.8 746.5,300.0" fill="#7a3c10" transform="rotate(-43 748.3 301.4)"/><polygon points="752.4,300.7 752.6,298.9 755.8,299.5 757.8,300.1 756.9,301.6 752.7,302.5" fill="#7a3c10" transform="rotate(-41 755.1 300.6)"/><polygon points="763.8,285.8 766.6,283.2 773.9,282.8 775.3,285.7 771.3,287.3 763.4,288.1" fill="#7a3c10" transform="rotate(-58 768.3 285.4)"/><polygon points="751.5,303.1 748.4,302.2 749.0,300.0 751.3,298.1 756.8,298.7 756.9,302.8" fill="#7a3c10" transform="rotate(-36 752.2 301.1)"/><polygon points="732.6,313.0 735.0,315.5 731.1,317.0 726.5,315.6 723.2,313.9 725.6,312.6" fill="#7a3c10" transform="rotate(-51 729.1 314.4)"/><polygon points="737.5,309.1 742.4,307.3 744.8,308.6 744.5,311.9 740.9,311.7 735.6,310.1" fill="#7a3c10" transform="rotate(-40 741.0 309.8)"/><polygon points="750.9,291.2 752.1,288.5 755.6,287.7 760.4,289.3 760.3,291.2 756.0,292.4" fill="#7a3c10" transform="rotate(-52 756.0 289.9)"/><polygon points="766.8,277.8 773.1,278.7 774.5,282.2 772.5,286.8 764.2,286.1 763.5,282.2" fill="#7a3c10" transform="rotate(-29 768.2 282.0)"/><polygon points="767.0,286.0 762.8,287.9 759.8,284.5 760.7,282.1 767.5,280.9 770.5,283.3" fill="#7a3c10" transform="rotate(-39 764.0 284.5)"/><polygon points="769.6,285.5 771.7,288.4 768.2,290.7 762.5,289.1 763.8,285.4 768.0,285.1" fill="#7a3c10" transform="rotate(-38 767.4 287.3)"/><polygon points="777.5,285.4 772.3,289.4 764.1,288.9 762.0,286.1 765.0,281.7 770.8,282.5" fill="#7a3c10" transform="rotate(-45 769.4 285.6)"/><polygon points="764.9,291.0 761.8,290.1 759.4,286.9 767.1,285.0 769.0,285.8 771.6,290.3" fill="#7a3c10" transform="rotate(-34 765.7 287.9)"/><polygon points="749.7,296.5 751.8,293.9 758.0,294.0 759.9,296.5 759.4,299.2 752.9,300.0" fill="#7a3c10" transform="rotate(-33 755.9 296.8)"/><polygon points="763.9,310.4 764.0,311.7 761.1,313.2 759.0,312.6 755.6,311.9 759.6,310.4" fill="#7a3c10" transform="rotate(18 760.4 311.7)"/><polygon points="752.6,307.8 749.3,307.7 746.4,307.2 746.7,305.4 752.2,304.6 754.0,305.8" fill="#7a3c10" transform="rotate(16 750.4 306.4)"/><polygon points="771.4,315.7 773.0,313.1 777.8,313.1 780.6,315.6 778.2,317.8 773.8,317.9" fill="#7a3c10" transform="rotate(21 775.2 315.6)"/><polygon points="743.2,307.8 741.8,304.9 745.7,303.4 750.5,304.6 753.5,306.8 748.5,307.2" fill="#7a3c10" transform="rotate(14 747.1 305.7)"/><polygon points="774.6,312.3 774.0,310.2 777.4,308.1 780.9,308.6 785.6,310.6 779.6,313.2" fill="#7a3c10" transform="rotate(9 778.9 310.4)"/><polygon points="774.5,307.6 776.9,308.7 779.9,310.6 776.5,311.5 771.5,311.9 769.8,309.7" fill="#7a3c10" transform="rotate(13 775.3 310.1)"/><polygon points="517.3,362.0 518.0,365.1 513.2,365.4 511.4,363.0 510.5,360.4 515.2,360.2" fill="#7a3c10" transform="rotate(73 514.1 362.8)"/><polygon points="509.8,341.6 505.0,339.0 508.3,337.3 511.6,336.0 515.3,339.9 511.9,341.8" fill="#7a3c10" transform="rotate(68 510.4 339.4)"/><polygon points="512.9,340.1 507.4,343.3 502.1,338.7 505.9,335.9 510.3,334.4 514.0,336.3" fill="#7a3c10" transform="rotate(84 509.3 338.0)"/><polygon points="503.4,329.2 501.8,325.9 504.2,323.3 507.9,324.2 510.5,326.3 507.8,327.8" fill="#7a3c10" transform="rotate(83 506.2 326.1)"/><polygon points="502.2,327.8 508.8,325.7 513.8,326.8 514.5,330.6 508.6,331.4 504.0,331.0" fill="#7a3c10" transform="rotate(69 509.4 328.8)"/><polygon points="520.7,350.4 521.1,353.8 519.7,356.2 514.0,355.0 512.5,353.8 514.1,351.4" fill="#7a3c10" transform="rotate(68 516.4 353.4)"/><polygon points="511.4,341.4 513.0,343.3 513.1,346.2 510.2,346.2 506.8,344.5 505.5,342.5" fill="#7a3c10" transform="rotate(63 510.0 343.9)"/><polygon points="512.8,347.2 508.3,345.5 508.0,341.5 512.1,341.1 516.4,342.7 516.7,344.9" fill="#7a3c10" transform="rotate(84 512.8 343.3)"/><polygon points="508.7,338.9 514.1,342.6 514.5,345.7 509.1,348.4 503.8,344.3 504.4,341.1" fill="#7a3c10" transform="rotate(73 509.6 343.9)"/><polygon points="507.2,328.5 506.9,330.8 504.4,332.5 501.5,330.8 501.0,329.1 503.6,327.5" fill="#7a3c10" transform="rotate(63 504.0 329.9)"/><polygon points="556.9,394.4 562.6,397.2 556.5,400.4 548.2,399.5 544.6,395.5 550.2,393.3" fill="#7a3c10" transform="rotate(22 553.2 396.6)"/><polygon points="538.9,388.5 549.2,385.4 555.0,388.7 554.2,391.4 548.5,392.7 540.4,393.0" fill="#7a3c10" transform="rotate(38 549.3 389.8)"/><polygon points="571.1,398.0 567.4,400.4 560.0,403.5 559.1,401.1 556.5,396.6 563.5,396.9" fill="#7a3c10" transform="rotate(37 562.8 399.7)"/><polygon points="569.5,405.4 567.4,405.9 563.2,405.8 562.0,402.9 566.6,402.1 570.1,403.1" fill="#7a3c10" transform="rotate(40 566.9 404.4)"/><polygon points="554.5,389.9 542.9,388.9 539.4,386.5 544.3,383.3 552.0,382.7 554.7,385.7" fill="#7a3c10" transform="rotate(27 548.6 386.1)"/><polygon points="534.9,376.9 544.0,376.0 546.4,378.9 539.1,382.9 533.8,382.7 532.4,378.5" fill="#7a3c10" transform="rotate(31 537.6 379.4)"/><polygon points="521.1,377.0 515.1,374.1 520.8,371.8 525.6,371.7 531.9,374.3 526.5,378.9" fill="#7a3c10" transform="rotate(24 524.0 374.4)"/><polygon points="537.8,377.6 536.3,381.6 529.0,381.1 518.3,379.9 523.8,376.4 528.8,375.6" fill="#7a3c10" transform="rotate(31 528.5 378.4)"/><polygon points="535.0,371.9 527.4,375.2 518.3,373.7 517.9,368.5 526.0,366.6 533.3,369.0" fill="#7a3c10" transform="rotate(22 525.3 370.3)"/><polygon points="533.6,372.0 539.3,372.2 538.2,375.0 531.7,375.9 527.9,375.0 529.6,372.8" fill="#7a3c10" transform="rotate(26 533.3 373.9)"/><polygon points="578.0,412.3 583.4,413.0 582.4,415.2 579.5,417.1 575.7,415.2 575.6,413.4" fill="#7a3c10" transform="rotate(25 579.0 414.5)"/><polygon points="518.0,367.4 513.6,366.2 513.4,364.3 518.3,363.9 522.3,364.5 522.1,366.4" fill="#7a3c10" transform="rotate(47 517.9 365.4)"/><polygon points="537.5,377.0 535.5,380.5 531.0,384.6 522.7,382.9 521.7,377.6 525.9,376.3" fill="#7a3c10" transform="rotate(40 530.1 380.1)"/><polygon points="545.2,381.5 547.1,385.2 539.1,386.5 534.4,384.4 532.6,381.0 540.5,380.0" fill="#7a3c10" transform="rotate(49 539.7 383.1)"/><polygon points="538.3,376.8 539.2,378.5 537.9,380.2 533.9,381.2 532.3,379.4 531.9,377.6" fill="#7a3c10" transform="rotate(45 535.6 379.1)"/><polygon points="551.6,391.0 548.3,389.9 547.3,388.1 551.3,387.1 553.9,387.6 555.5,389.5" fill="#7a3c10" transform="rotate(27 551.4 389.1)"/><polygon points="696.4,402.9 695.6,401.4 696.0,400.6 699.5,400.3 700.9,402.1 701.0,403.3" fill="#7a3c10" transform="rotate(29 698.3 401.8)"/><polygon points="675.7,423.0 671.2,423.5 669.1,422.3 670.6,420.6 673.6,420.5 676.9,421.5" fill="#7a3c10" transform="rotate(9 672.6 422.2)"/><polygon points="619.9,393.3 622.0,393.0 624.3,393.9 622.3,395.4 620.4,395.2 619.0,394.1" fill="#7a3c10" transform="rotate(17 621.0 394.3)"/><polygon points="694.4,416.8 699.2,418.6 698.7,422.0 693.6,421.8 690.4,420.5 689.4,417.5" fill="#7a3c10" transform="rotate(15 694.3 419.5)"/><polygon points="642.6,381.2 642.3,380.5 643.2,379.6 646.4,379.9 647.4,380.7 645.0,381.5" fill="#7a3c10" transform="rotate(25 644.5 380.6)"/><polygon points="661.1,418.7 658.7,418.0 658.5,416.0 662.8,413.6 668.1,415.5 666.6,417.3" fill="#7a3c10" transform="rotate(31 662.6 416.5)"/><polygon points="661.7,411.2 664.2,409.4 665.1,408.2 670.0,409.7 669.5,411.0 665.3,412.1" fill="#7a3c10" transform="rotate(30 665.9 410.3)"/><polygon points="640.7,397.5 644.2,396.9 648.2,398.3 649.0,401.0 644.7,401.5 641.4,399.6" fill="#7a3c10" transform="rotate(22 644.5 399.5)"/><polygon points="670.2,398.8 664.1,399.1 659.6,398.2 661.7,396.2 666.6,395.4 670.3,396.3" fill="#7a3c10" transform="rotate(21 665.1 397.2)"/><polygon points="648.5,393.0 649.0,391.2 652.7,390.7 657.3,391.5 655.2,392.9 652.6,394.2" fill="#7a3c10" transform="rotate(30 652.9 392.1)"/><polygon points="631.2,395.7 635.4,395.4 638.4,397.4 636.4,398.7 633.3,399.5 628.4,397.2" fill="#7a3c10" transform="rotate(16 634.0 397.4)"/><polygon points="672.6,396.0 670.7,397.4 666.7,396.6 664.7,395.6 667.3,394.3 670.0,394.4" fill="#7a3c10" transform="rotate(15 668.5 395.6)"/><polygon points="677.7,408.7 674.8,410.3 671.9,409.7 668.9,408.6 669.9,407.2 675.0,407.2" fill="#7a3c10" transform="rotate(28 672.8 408.5)"/><polygon points="634.6,400.6 630.2,400.7 629.1,399.2 630.6,397.9 633.7,397.4 635.6,399.4" fill="#7a3c10" transform="rotate(33 632.5 399.4)"/><polygon points="658.3,312.7 660.6,312.0 664.2,312.2 663.6,313.0 663.3,314.2 659.0,313.9" fill="#7a3c10" transform="rotate(30 661.7 312.9)"/><polygon points="626.5,325.7 624.9,327.1 622.2,326.4 621.3,325.2 622.4,323.8 626.8,324.2" fill="#7a3c10" transform="rotate(25 624.0 325.2)"/><polygon points="684.5,415.8 682.7,415.4 681.5,414.5 683.9,414.1 685.0,414.2 686.0,415.4" fill="#7a3c10" transform="rotate(14 683.8 414.9)"/><polygon points="752.7,430.3 751.8,429.1 754.3,428.2 756.2,428.8 757.5,429.4 754.8,430.6" fill="#7a3c10" transform="rotate(26 754.7 429.5)"/><polygon points="788.8,337.7 787.8,338.8 786.3,338.4 785.2,337.8 786.3,337.0 788.2,336.9" fill="#7a3c10" transform="rotate(16 787.1 337.8)"/><polygon points="642.2,272.1 645.0,271.6 647.0,271.9 646.3,273.1 644.6,273.5 643.0,273.0" fill="#7a3c10" transform="rotate(20 645.0 272.5)"/><polygon points="650.7,339.0 652.4,338.6 655.5,338.0 657.0,340.1 654.6,340.6 650.6,340.4" fill="#7a3c10" transform="rotate(33 653.4 339.5)"/><polygon points="711.4,390.1 713.9,388.5 716.4,388.5 719.5,388.7 717.0,390.4 714.8,391.3" fill="#7a3c10" transform="rotate(33 715.2 389.6)"/><polygon points="663.8,405.7 662.3,406.8 660.2,406.9 660.1,406.0 660.6,405.4 661.9,405.2" fill="#7a3c10" transform="rotate(22 661.4 406.0)"/><polygon points="766.1,409.7 766.5,408.6 768.1,408.0 769.8,408.9 769.9,410.3 766.9,410.3" fill="#7a3c10" transform="rotate(24 768.0 409.3)"/><polygon points="579.1,324.5 580.8,324.7 579.4,325.9 577.7,326.6 575.1,325.5 576.9,324.7" fill="#7a3c10" transform="rotate(15 578.0 325.3)"/><polygon points="771.1,347.4 773.7,346.4 775.6,347.3 775.8,348.5 771.7,349.2 769.7,348.6" fill="#7a3c10" transform="rotate(35 773.3 347.8)"/><polygon points="741.6,320.5 740.1,319.6 740.2,318.9 742.0,318.3 743.3,318.6 743.9,319.7" fill="#7a3c10" transform="rotate(24 741.9 319.4)"/><polygon points="591.0,254.5 589.9,251.7 592.0,250.3 597.0,251.4 597.6,252.7 594.3,254.9" fill="#7a3c10" transform="rotate(10 593.5 252.6)"/><polygon points="787.4,334.9 788.1,334.1 789.2,334.0 790.6,334.5 791.3,335.4 787.6,335.9" fill="#7a3c10" transform="rotate(19 789.1 334.8)"/><polygon points="599.0,258.0 601.6,256.2 605.5,257.1 605.3,259.9 602.1,260.6 598.2,259.3" fill="#7a3c10" transform="rotate(12 601.7 258.4)"/><polygon points="692.4,357.8 693.7,356.6 698.0,356.3 698.5,357.4 697.1,358.8 695.0,359.2" fill="#7a3c10" transform="rotate(29 696.0 357.7)"/><polygon points="644.5,360.4 640.1,361.7 636.7,361.0 634.8,359.7 639.4,358.7 644.3,359.0" fill="#7a3c10" transform="rotate(30 639.8 360.1)"/><polygon points="776.6,371.1 775.3,372.3 773.3,372.4 772.1,371.8 771.8,370.1 775.9,369.6" fill="#7a3c10" transform="rotate(9 774.2 371.3)"/><polygon points="718.6,337.6 721.9,337.7 723.7,337.9 723.0,338.9 721.1,339.4 718.9,339.0" fill="#7a3c10" transform="rotate(8 721.1 338.5)"/><polygon points="582.8,245.7 580.0,245.3 580.9,244.1 584.0,244.0 584.9,244.6 585.6,245.7" fill="#7a3c10" transform="rotate(17 583.2 244.9)"/><polygon points="740.7,371.3 737.7,371.8 735.7,370.8 737.0,368.9 741.1,368.9 742.8,370.3" fill="#7a3c10" transform="rotate(9 739.7 370.1)"/><polygon points="606.2,257.4 607.2,258.3 606.8,259.9 603.9,260.1 601.3,258.9 603.0,257.0" fill="#7a3c10" transform="rotate(11 605.0 258.4)"/><polygon points="691.3,397.1 689.4,397.1 687.4,396.3 688.7,395.4 691.0,395.0 692.1,395.9" fill="#7a3c10" transform="rotate(8 689.9 396.3)"/><polygon points="682.1,321.7 683.7,319.7 687.5,320.6 687.9,321.4 686.8,322.8 684.0,322.5" fill="#7a3c10" transform="rotate(35 685.3 321.4)"/><polygon points="680.1,337.9 677.7,337.2 679.4,336.1 683.0,335.7 683.5,337.5 682.3,338.3" fill="#7a3c10" transform="rotate(19 680.9 337.1)"/><polygon points="787.4,356.4 788.2,357.6 787.1,357.6 785.5,357.6 784.8,356.8 786.6,356.1" fill="#7a3c10" transform="rotate(18 786.4 357.1)"/><polygon points="583.3,345.6 581.8,346.1 580.5,346.4 579.8,345.3 581.5,344.4 583.3,344.7" fill="#7a3c10" transform="rotate(10 581.6 345.4)"/><polygon points="759.1,443.1 758.4,442.5 758.5,441.0 763.1,440.9 763.4,441.8 763.1,443.2" fill="#7a3c10" transform="rotate(13 760.9 442.1)"/><polygon points="724.4,403.5 724.0,402.7 726.0,401.6 728.3,402.7 728.6,403.6 727.0,404.4" fill="#7a3c10" transform="rotate(37 726.5 403.1)"/><polygon points="720.1,318.4 723.5,318.0 724.6,318.9 725.2,320.2 722.4,321.1 719.7,320.1" fill="#7a3c10" transform="rotate(18 722.5 319.4)"/><polygon points="751.7,416.5 753.5,417.8 750.6,419.8 748.3,418.9 745.7,418.2 747.8,416.0" fill="#7a3c10" transform="rotate(34 749.4 417.9)"/><polygon points="592.1,282.4 589.0,282.5 587.4,280.6 591.4,279.3 595.5,280.0 594.4,281.6" fill="#7a3c10" transform="rotate(13 591.5 281.2)"/><polygon points="604.2,263.8 608.3,263.6 612.8,264.2 610.8,266.7 606.7,267.0 605.6,265.6" fill="#7a3c10" transform="rotate(11 608.3 265.2)"/><polygon points="776.2,336.4 771.3,337.0 769.8,335.7 771.2,334.7 773.0,334.1 775.2,335.0" fill="#7a3c10" transform="rotate(12 772.8 335.4)"/><polygon points="690.7,342.2 693.3,342.8 695.1,343.6 692.9,345.1 689.8,344.2 688.1,343.0" fill="#7a3c10" transform="rotate(25 691.2 343.4)"/><polygon points="614.8,357.9 616.7,358.6 615.5,359.5 612.2,359.8 611.8,358.6 613.1,357.7" fill="#7a3c10" transform="rotate(14 614.2 358.8)"/><polygon points="686.0,320.3 681.5,320.9 677.5,319.5 679.9,318.7 683.6,317.5 684.2,318.8" fill="#7a3c10" transform="rotate(30 682.2 319.3)"/><polygon points="738.4,430.9 735.4,430.9 734.2,430.7 734.1,429.6 736.9,429.4 737.9,430.0" fill="#7a3c10" transform="rotate(21 736.1 430.2)"/><polygon points="677.1,331.4 679.4,331.3 682.1,332.5 680.3,333.5 676.2,333.8 676.3,332.1" fill="#7a3c10" transform="rotate(9 678.3 332.4)"/><polygon points="643.2,318.1 641.7,318.3 639.3,317.8 640.5,316.5 643.1,316.3 645.1,316.6" fill="#7a3c10" transform="rotate(17 642.1 317.1)"/><polygon points="731.0,403.5 732.0,402.6 734.5,402.3 735.9,403.1 735.1,403.5 733.5,403.9" fill="#7a3c10" transform="rotate(32 733.6 403.1)"/><polygon points="599.1,289.2 600.2,290.5 600.2,291.2 596.8,291.6 595.3,289.9 597.4,289.1" fill="#7a3c10" transform="rotate(10 598.2 290.3)"/><polygon points="609.6,351.6 606.0,350.9 605.7,349.7 607.0,349.0 609.9,349.4 610.7,350.5" fill="#7a3c10" transform="rotate(16 608.2 350.2)"/><polygon points="584.3,283.6 580.5,284.0 579.3,283.1 579.6,282.2 582.9,281.3 584.1,282.3" fill="#7a3c10" transform="rotate(18 581.8 282.6)"/><polygon points="741.9,374.5 743.5,375.5 741.8,377.0 737.6,376.7 737.3,375.8 738.8,374.2" fill="#7a3c10" transform="rotate(26 740.1 375.5)"/><polygon points="797.6,341.7 795.9,340.9 798.1,339.9 800.3,340.0 801.0,340.9 799.2,342.5" fill="#7a3c10" transform="rotate(34 798.8 340.9)"/><polygon points="756.1,352.2 757.9,352.4 759.3,353.1 757.9,353.6 755.7,353.1 754.6,352.6" fill="#7a3c10" transform="rotate(16 756.9 352.8)"/><polygon points="737.2,324.7 737.6,323.3 739.7,323.2 740.9,323.4 742.1,324.6 739.3,325.1" fill="#7a3c10" transform="rotate(18 739.4 324.0)"/><polygon points="808.2,379.0 807.0,379.0 805.1,378.9 805.7,377.9 806.3,377.5 807.8,378.3" fill="#7a3c10" transform="rotate(29 806.7 378.4)"/><polygon points="657.7,374.5 660.2,373.3 663.3,373.2 664.6,374.5 662.9,376.6 660.1,375.4" fill="#7a3c10" transform="rotate(33 662.0 374.6)"/><polygon points="751.0,421.2 749.6,421.5 745.1,421.2 746.4,419.5 748.6,419.5 751.3,419.8" fill="#7a3c10" transform="rotate(28 748.8 420.4)"/><polygon points="643.2,351.9 643.6,352.4 641.8,353.1 640.6,352.8 639.5,351.8 641.2,351.3" fill="#7a3c10" transform="rotate(14 641.8 352.2)"/><polygon points="649.4,360.8 653.3,361.9 654.6,363.1 653.8,364.8 649.6,364.8 647.3,362.7" fill="#7a3c10" transform="rotate(28 650.8 363.2)"/><polygon points="692.3,393.5 696.9,394.6 692.9,396.3 690.1,396.5 685.6,394.6 689.9,393.1" fill="#7a3c10" transform="rotate(25 691.3 394.7)"/><polygon points="749.0,415.9 747.7,413.7 754.7,413.6 756.4,414.7 755.3,416.4 751.0,417.6" fill="#7a3c10" transform="rotate(11 752.1 415.4)"/><polygon points="706.1,352.4 703.3,351.5 704.2,349.4 708.3,350.1 711.0,351.4 709.1,353.1" fill="#7a3c10" transform="rotate(10 707.1 351.3)"/><polygon points="654.4,309.6 656.6,310.7 658.4,312.0 652.7,312.5 651.2,311.4 650.1,309.7" fill="#7a3c10" transform="rotate(26 653.8 311.1)"/><polygon points="717.3,319.2 718.9,318.4 723.6,318.4 727.1,319.8 724.2,321.5 719.2,321.2" fill="#7a3c10" transform="rotate(37 722.0 320.0)"/><polygon points="755.4,434.4 756.8,435.2 755.1,436.1 753.0,436.4 750.8,435.4 752.9,434.3" fill="#7a3c10" transform="rotate(32 753.9 435.6)"/><polygon points="680.9,342.7 682.5,343.3 683.6,344.0 682.2,344.3 680.6,344.1 679.8,343.5" fill="#7a3c10" transform="rotate(16 681.6 343.7)"/><polygon points="610.8,370.5 614.4,371.6 612.2,372.6 611.3,372.9 608.5,372.7 609.2,371.1" fill="#7a3c10" transform="rotate(36 611.0 371.8)"/><polygon points="645.2,301.1 642.6,301.1 641.8,300.2 642.3,299.4 643.7,298.8 645.4,300.2" fill="#7a3c10" transform="rotate(9 643.4 300.1)"/><polygon points="741.9,339.3 745.0,341.1 741.5,341.7 740.0,342.1 737.1,340.2 738.1,338.9" fill="#7a3c10" transform="rotate(9 740.8 340.6)"/><polygon points="776.7,372.7 776.4,371.6 777.2,370.8 779.5,370.9 779.5,371.8 778.8,372.4" fill="#7a3c10" transform="rotate(19 778.0 371.8)"/><polygon points="770.7,323.7 771.9,323.1 775.7,323.0 776.6,324.7 773.8,326.1 771.5,325.6" fill="#7a3c10" transform="rotate(11 773.1 324.3)"/><polygon points="766.6,433.2 765.5,431.3 766.1,430.2 771.3,430.3 771.3,432.8 769.9,433.9" fill="#7a3c10" transform="rotate(27 768.3 432.2)"/><polygon points="608.6,272.0 610.8,271.3 613.8,272.8 611.6,274.9 608.2,274.2 606.5,273.0" fill="#7a3c10" transform="rotate(33 609.8 273.1)"/><polygon points="742.9,417.8 742.7,416.4 743.7,415.8 746.2,416.3 746.6,417.0 745.8,417.4" fill="#7a3c10" transform="rotate(26 744.9 416.8)"/><polygon points="561.8,325.7 564.4,323.7 569.8,323.8 570.4,326.2 568.7,327.2 565.8,327.9" fill="#7a3c10" transform="rotate(31 567.1 325.9)"/><polygon points="698.7,347.3 699.1,346.0 702.1,345.7 702.9,346.7 702.7,347.3 699.9,347.7" fill="#7a3c10" transform="rotate(25 701.0 346.8)"/><polygon points="709.2,380.1 708.1,379.7 706.9,379.4 708.4,378.6 709.7,378.8 711.1,379.2" fill="#7a3c10" transform="rotate(8 709.0 379.3)"/><polygon points="738.6,421.8 737.0,422.7 735.8,422.6 734.7,421.9 735.7,421.2 737.7,421.3" fill="#7a3c10" transform="rotate(34 736.7 421.9)"/><polygon points="622.2,386.2 619.0,386.2 619.3,384.3 622.9,383.0 625.8,384.3 625.3,385.7" fill="#7a3c10" transform="rotate(36 622.0 384.9)"/><polygon points="741.1,419.0 743.5,418.1 747.8,419.2 747.2,421.5 742.6,421.4 739.4,421.4" fill="#7a3c10" transform="rotate(19 743.4 419.9)"/><polygon points="645.3,381.6 647.2,380.6 649.6,380.6 652.1,381.9 648.5,382.8 645.9,383.1" fill="#7a3c10" transform="rotate(23 648.2 381.8)"/><polygon points="688.0,310.6 684.6,311.8 679.5,310.8 680.0,308.5 684.1,308.1 687.3,309.0" fill="#7a3c10" transform="rotate(16 683.8 309.8)"/><polygon points="663.0,366.3 664.4,366.8 664.4,367.5 663.0,368.4 661.0,367.7 660.6,366.5" fill="#7a3c10" transform="rotate(37 662.6 367.3)"/><polygon points="653.8,406.1 653.2,403.8 655.9,403.0 659.0,403.6 658.9,405.0 656.4,405.9" fill="#7a3c10" transform="rotate(24 656.0 404.4)"/><polygon points="571.5,328.9 570.0,327.3 573.1,326.7 575.8,327.7 576.5,329.0 572.4,329.9" fill="#7a3c10" transform="rotate(10 573.7 328.4)"/><polygon points="758.5,253.4 758.9,254.7 755.5,256.1 753.1,255.1 751.8,253.5 755.5,252.5" fill="#7a3c10" transform="rotate(21 755.1 254.2)"/><polygon points="661.8,264.6 659.1,263.9 660.2,262.7 662.7,261.8 665.6,262.8 665.2,264.0" fill="#7a3c10" transform="rotate(22 662.8 263.4)"/><polygon points="687.4,265.9 684.5,266.1 684.6,264.4 686.6,263.6 689.2,264.1 689.6,265.3" fill="#7a3c10" transform="rotate(15 687.3 264.9)"/><polygon points="704.6,259.3 706.9,258.1 708.6,258.4 708.5,260.0 707.6,261.4 703.8,260.3" fill="#7a3c10" transform="rotate(4 706.3 259.7)"/><polygon points="649.8,220.4 649.4,219.7 650.3,219.1 651.4,219.1 652.9,219.7 651.8,220.7" fill="#7a3c10" transform="rotate(18 651.0 219.8)"/><polygon points="650.5,241.2 646.8,240.7 647.7,238.6 651.2,237.9 653.3,239.4 652.1,240.3" fill="#7a3c10" transform="rotate(33 650.1 239.7)"/><polygon points="689.9,253.4 688.8,254.3 686.6,253.7 686.3,252.4 687.7,252.2 689.9,253.0" fill="#7a3c10" transform="rotate(22 688.2 253.1)"/><polygon points="687.3,252.6 688.8,253.5 688.2,255.3 684.1,255.2 682.8,253.2 685.3,252.3" fill="#7a3c10" transform="rotate(32 686.3 253.7)"/><polygon points="681.5,263.6 682.8,262.4 684.2,261.4 686.8,261.9 686.7,262.9 684.8,264.1" fill="#7a3c10" transform="rotate(8 684.5 262.8)"/><polygon points="733.1,258.3 731.1,257.8 731.2,256.8 732.9,255.8 735.3,256.4 734.5,257.6" fill="#7a3c10" transform="rotate(26 732.9 257.3)"/><polygon points="642.8,243.7 640.5,243.0 639.7,242.7 641.6,242.0 643.9,242.1 644.2,242.9" fill="#7a3c10" transform="rotate(27 641.8 242.7)"/><polygon points="739.3,257.2 741.4,257.6 740.6,259.4 737.7,259.4 736.0,258.5 736.7,257.5" fill="#7a3c10" transform="rotate(29 738.4 258.3)"/><polygon points="696.7,269.8 698.5,270.7 697.1,273.0 692.6,272.7 691.2,271.0 692.3,269.6" fill="#7a3c10" transform="rotate(13 694.9 271.0)"/><polygon points="718.8,280.5 717.5,279.4 718.8,278.7 720.9,278.8 722.0,279.3 721.1,280.2" fill="#7a3c10" transform="rotate(28 719.6 279.5)"/><polygon points="679.9,254.5 679.4,252.5 681.6,251.5 683.4,252.5 685.1,252.9 683.1,253.8" fill="#7a3c10" transform="rotate(12 682.0 253.1)"/><polygon points="760.7,281.9 763.0,283.4 759.8,285.0 756.3,285.0 754.4,283.8 756.6,281.7" fill="#7a3c10" transform="rotate(21 758.6 283.5)"/><polygon points="728.1,261.0 731.0,261.1 731.3,263.2 728.1,263.8 723.6,263.5 724.2,262.3" fill="#7a3c10" transform="rotate(26 728.0 262.6)"/><polygon points="709.7,276.2 706.9,275.5 706.5,274.2 708.9,273.3 712.4,274.4 711.9,275.9" fill="#7a3c10" transform="rotate(22 709.7 274.9)"/><polygon points="720.2,255.9 719.0,254.6 720.2,252.9 723.8,253.1 725.4,254.8 723.8,256.3" fill="#7a3c10" transform="rotate(15 721.5 254.8)"/><polygon points="630.4,244.7 631.7,245.4 631.9,246.3 630.8,246.6 629.1,246.8 627.7,245.7" fill="#7a3c10" transform="rotate(22 630.3 245.9)"/><polygon points="616.1,240.2 616.4,239.8 617.7,239.3 619.3,239.6 619.0,240.3 618.1,241.0" fill="#7a3c10" transform="rotate(32 617.9 240.0)"/><polygon points="674.1,237.0 677.5,236.5 678.3,237.8 677.2,238.5 674.3,239.2 672.4,237.9" fill="#7a3c10" transform="rotate(12 675.5 237.7)"/><polygon points="642.5,216.2 644.9,217.0 646.1,218.6 642.4,219.1 640.6,218.3 640.2,217.3" fill="#7a3c10" transform="rotate(28 643.1 217.7)"/><polygon points="672.8,262.4 672.7,261.0 674.8,261.3 676.0,261.6 675.7,262.3 673.9,262.9" fill="#7a3c10" transform="rotate(17 674.3 261.9)"/><polygon points="529.5,410.3 525.1,411.4 523.1,410.1 522.6,408.4 526.3,406.8 529.8,409.1" fill="#7a3c10" transform="rotate(8 526.8 409.3)"/><polygon points="558.1,419.4 552.4,420.2 547.9,418.4 548.5,415.8 554.6,415.0 559.9,415.9" fill="#7a3c10" transform="rotate(14 553.8 417.6)"/><polygon points="468.8,405.0 472.9,404.9 479.4,406.3 479.3,409.4 471.0,410.3 467.0,407.3" fill="#7a3c10" transform="rotate(7 472.5 406.9)"/><polygon points="532.7,408.8 532.8,411.1 528.8,412.8 524.2,410.7 522.5,407.8 528.9,407.9" fill="#7a3c10" transform="rotate(-3 528.1 409.8)"/><polygon points="549.7,415.3 550.4,412.7 557.6,411.5 559.4,413.4 557.9,415.3 552.8,416.2" fill="#7a3c10" transform="rotate(12 555.3 414.2)"/><polygon points="500.0,416.4 498.8,413.7 499.9,410.7 507.2,410.8 508.9,413.3 508.7,415.9" fill="#7a3c10" transform="rotate(14 503.6 413.5)"/><polygon points="469.2,400.1 472.9,402.7 468.3,403.4 463.3,403.6 461.1,402.1 466.6,399.5" fill="#7a3c10" transform="rotate(-7 467.2 401.9)"/><polygon points="469.2,412.6 467.7,409.7 466.4,408.5 472.6,407.2 476.0,408.9 475.1,411.5" fill="#7a3c10" transform="rotate(6 471.6 409.4)"/><polygon points="434.3,415.4 440.1,414.1 444.3,413.9 444.1,418.0 438.5,418.5 433.2,417.2" fill="#7a3c10" transform="rotate(1 438.8 416.3)"/><polygon points="441.8,418.9 439.0,417.5 439.0,414.2 444.9,414.6 446.7,415.3 448.0,418.0" fill="#7a3c10" transform="rotate(5 443.4 416.4)"/><polygon points="441.9,417.6 443.8,414.8 446.5,414.2 450.8,415.6 450.9,417.4 445.6,418.6" fill="#7a3c10" transform="rotate(7 446.7 416.1)"/><polygon points="304.9,339.8 308.4,337.7 312.3,339.0 312.6,343.1 308.9,344.0 305.2,341.6" fill="#7a3c10"/><polygon points="355.4,190.9 357.3,192.1 357.8,194.2 354.5,194.8 352.8,193.1 352.9,191.7" fill="#7a3c10"/><polygon points="329.5,210.8 328.3,209.2 329.2,207.2 331.3,207.7 332.1,209.3 331.5,210.5" fill="#7a3c10"/><polygon points="384.7,180.7 387.5,181.1 389.2,182.1 387.5,185.1 384.7,184.2 383.4,183.7" fill="#7a3c10"/><polygon points="441.7,186.6 442.9,187.6 443.2,188.8 440.7,189.8 438.7,188.1 439.3,186.6" fill="#7a3c10"/><polygon points="853.8,273.0 851.1,273.2 849.5,271.7 849.4,269.9 852.4,269.2 854.6,270.8" fill="#7a3c10"/><polygon points="845.4,284.0 841.9,285.0 838.7,284.6 838.2,281.6 840.9,280.1 845.0,281.7" fill="#7a3c10"/><polygon points="835.1,299.3 832.4,298.9 831.2,296.5 832.6,294.3 835.8,295.0 836.8,297.2" fill="#7a3c10"/><polygon points="893.9,314.0 894.5,312.7 896.0,311.3 897.4,312.0 898.0,313.9 896.8,314.6" fill="#7a3c10"/><polygon points="906.6,340.4 908.2,340.6 910.0,342.5 907.7,343.8 905.6,343.7 903.8,342.2" fill="#7a3c10"/><polygon points="924.0,388.2 921.8,389.2 919.7,388.7 920.0,387.9 921.5,386.5 923.3,386.7" fill="#7a3c10"/><polygon points="392.9,204.6 394.2,204.2 395.5,204.1 396.5,204.8 396.0,205.5 394.6,205.6" fill="#7a3c10" transform="rotate(34 395.0 204.7)"/><polygon points="300.6,274.9 301.4,274.5 302.6,274.5 303.1,275.1 302.4,275.5 301.1,275.5" fill="#7a3c10" transform="rotate(50 301.8 275.0)"/><polygon points="389.0,236.0 387.3,235.7 388.6,234.7 390.4,234.6 392.2,235.3 390.8,235.7" fill="#7a3c10" transform="rotate(40 389.8 235.3)"/><polygon points="410.6,336.3 411.3,335.6 413.0,335.9 413.1,336.3 413.3,337.3 410.8,336.9" fill="#7a3c10" transform="rotate(29 411.9 336.4)"/><polygon points="358.5,352.1 360.6,351.4 362.1,352.2 361.4,353.0 359.0,353.8 357.9,352.9" fill="#7a3c10" transform="rotate(25 359.7 352.7)"/><polygon points="401.1,353.3 404.5,353.5 404.7,354.9 403.6,356.0 400.2,355.1 399.2,354.1" fill="#7a3c10" transform="rotate(51 402.3 354.6)"/><polygon points="370.6,288.8 369.8,289.4 366.9,289.2 365.7,288.7 368.6,287.6 370.3,287.4" fill="#7a3c10" transform="rotate(36 368.9 288.6)"/><polygon points="454.1,357.0 452.5,357.3 449.8,357.5 449.4,356.3 450.5,355.4 453.4,356.1" fill="#7a3c10" transform="rotate(41 451.7 356.5)"/><polygon points="518.5,320.6 517.9,319.7 518.9,319.5 520.7,319.2 521.7,320.1 520.4,320.9" fill="#7a3c10" transform="rotate(22 519.7 320.1)"/><polygon points="511.6,315.2 512.7,314.9 514.1,314.8 515.0,315.3 514.3,316.1 512.5,315.9" fill="#7a3c10" transform="rotate(50 513.5 315.4)"/><polygon points="381.0,260.4 382.8,260.6 382.5,261.3 381.5,261.6 380.4,261.5 380.2,260.7" fill="#7a3c10" transform="rotate(24 381.4 261.1)"/><polygon points="413.5,267.2 412.5,266.6 413.4,265.8 415.3,266.0 415.7,266.4 415.6,267.2" fill="#7a3c10" transform="rotate(37 414.5 266.5)"/><polygon points="438.0,397.9 436.4,398.8 433.6,399.1 432.8,398.0 433.1,396.9 435.4,397.1" fill="#7a3c10" transform="rotate(35 434.7 397.9)"/><polygon points="367.8,229.6 370.1,230.2 370.9,230.7 369.2,232.2 366.1,231.2 366.8,230.2" fill="#7a3c10" transform="rotate(29 368.5 230.6)"/><polygon points="486.2,392.5 485.4,392.4 484.8,391.8 486.0,391.5 486.9,391.7 487.1,392.4" fill="#7a3c10" transform="rotate(47 486.1 392.1)"/><polygon points="344.5,334.9 343.6,334.4 344.8,333.9 345.5,333.7 346.6,334.5 346.0,334.8" fill="#7a3c10" transform="rotate(35 345.0 334.3)"/><polygon points="450.1,268.7 451.1,268.4 452.3,268.4 452.7,269.1 451.5,269.9 450.7,269.4" fill="#7a3c10" transform="rotate(48 451.5 268.9)"/><polygon points="505.0,354.4 508.0,354.8 507.2,355.9 506.1,356.8 504.3,356.1 503.0,354.6" fill="#7a3c10" transform="rotate(45 505.6 355.4)"/><polygon points="459.8,314.6 460.2,315.4 459.4,316.0 458.4,316.1 456.8,315.8 457.8,314.8" fill="#7a3c10" transform="rotate(52 458.7 315.5)"/><polygon points="447.4,410.7 450.5,410.9 450.9,412.7 448.9,413.0 445.3,412.6 445.9,410.8" fill="#7a3c10" transform="rotate(41 448.2 411.7)"/><polygon points="418.4,250.2 419.5,250.2 419.7,250.6 419.2,251.3 418.2,251.2 417.6,250.7" fill="#7a3c10" transform="rotate(45 418.9 250.7)"/><polygon points="312.9,252.2 311.7,251.6 312.8,250.4 314.9,250.7 316.8,251.6 314.8,252.1" fill="#7a3c10" transform="rotate(28 313.8 251.5)"/><polygon points="450.8,289.2 449.9,289.3 449.0,289.0 448.6,288.6 450.1,288.5 450.9,288.6" fill="#7a3c10" transform="rotate(32 449.9 288.8)"/><polygon points="333.7,221.3 334.5,221.3 336.1,221.4 335.3,222.4 333.8,222.4 332.8,222.0" fill="#7a3c10" transform="rotate(46 334.5 221.8)"/><polygon points="334.8,302.5 337.0,302.9 338.9,303.7 337.4,304.2 335.5,304.3 334.3,303.7" fill="#7a3c10" transform="rotate(31 336.5 303.5)"/><polygon points="327.4,289.5 326.5,289.4 325.9,289.2 325.7,288.7 326.7,288.4 328.1,288.6" fill="#7a3c10" transform="rotate(32 326.8 289.0)"/><polygon points="422.5,265.6 422.1,265.6 420.6,265.3 420.7,264.8 422.6,264.8 423.0,265.2" fill="#7a3c10" transform="rotate(31 422.1 265.2)"/><polygon points="406.9,395.9 406.3,396.7 403.4,396.9 402.6,396.4 403.5,394.9 405.5,395.0" fill="#7a3c10" transform="rotate(50 404.8 395.9)"/><polygon points="480.3,307.4 479.9,308.6 478.9,309.4 476.3,309.1 475.9,307.8 477.6,307.2" fill="#7a3c10" transform="rotate(25 477.7 308.1)"/><polygon points="367.1,259.6 368.9,259.9 368.5,260.8 366.5,261.3 365.5,261.0 364.2,259.6" fill="#7a3c10" transform="rotate(46 366.8 260.4)"/><polygon points="305.5,304.5 303.6,304.3 302.5,303.5 303.7,302.5 306.0,302.3 306.4,303.6" fill="#7a3c10" transform="rotate(35 304.2 303.3)"/><polygon points="407.7,258.5 406.3,258.0 407.3,256.7 409.4,256.5 410.5,257.2 409.1,258.4" fill="#7a3c10" transform="rotate(46 408.0 257.7)"/><polygon points="339.7,191.4 341.1,192.1 339.9,192.7 338.6,192.9 337.9,192.2 338.5,191.9" fill="#7a3c10" transform="rotate(36 339.5 192.2)"/><polygon points="387.8,287.4 389.7,287.8 391.0,288.2 388.8,289.4 386.9,288.9 387.2,288.2" fill="#7a3c10" transform="rotate(33 388.6 288.3)"/><polygon points="446.4,341.9 447.2,341.2 450.0,341.0 451.1,342.2 450.6,343.2 446.6,343.0" fill="#7a3c10" transform="rotate(37 448.8 342.0)"/><polygon points="346.4,356.0 348.0,356.9 346.4,358.0 343.4,357.6 343.0,357.0 344.6,355.7" fill="#7a3c10" transform="rotate(37 345.4 357.0)"/><polygon points="381.4,290.1 383.3,289.9 384.2,290.7 382.8,291.3 381.6,291.2 380.8,290.8" fill="#7a3c10" transform="rotate(44 382.5 290.6)"/><polygon points="350.7,244.8 349.9,244.5 349.1,243.7 351.3,243.2 352.8,244.0 352.8,244.6" fill="#7a3c10" transform="rotate(44 350.9 244.1)"/><polygon points="433.5,285.1 431.3,283.9 431.1,283.1 432.3,282.4 435.4,282.6 434.9,283.9" fill="#7a3c10" transform="rotate(51 433.0 283.5)"/><polygon points="454.4,355.8 454.0,354.8 455.7,354.7 457.3,355.1 457.4,356.0 455.3,356.4" fill="#7a3c10" transform="rotate(49 455.8 355.6)"/><polygon points="389.9,207.3 393.2,204.4 398.8,199.4 405.5,200.8 413.2,204.7 410.9,213.6 401.7,213.0 394.7,212.2" fill="#4cb84a"/><polygon points="361.8,219.1 357.4,212.6 369.7,210.7 379.6,205.6 383.4,207.8 385.3,214.8 383.2,222.2 371.9,221.7" fill="#4cb84a"/><polygon points="431.2,199.2 433.0,197.4 435.2,197.2 437.3,197.2 441.0,200.2 437.9,202.1 435.1,202.3 431.7,202.6" fill="#4cb84a"/><polygon points="467.4,200.1 465.4,203.4 464.0,205.7 460.5,203.8 458.1,202.9 459.4,200.8 460.4,198.8 464.0,198.4" fill="#4cb84a"/><polygon points="453.5,211.6 454.4,213.7 450.7,214.1 448.5,217.1 446.5,213.3 446.6,210.5 448.9,208.3 452.0,207.7" fill="#4cb84a"/><polygon points="462.5,209.9 463.4,208.4 465.5,209.7 468.6,210.4 468.4,213.3 465.9,214.4 463.4,215.2 460.9,213.7" fill="#4cb84a"/><polygon points="351.5,233.7 345.2,232.7 339.1,234.6 339.9,228.2 343.6,224.7 345.8,223.2 354.4,223.5 352.9,228.2" fill="#4cb84a"/><polygon points="336.0,232.2 337.6,234.7 337.6,239.7 333.6,238.1 330.0,238.6 327.9,235.7 330.0,231.8 333.6,230.2" fill="#4cb84a"/><polygon points="319.3,249.9 317.2,247.1 320.0,242.0 324.9,242.4 326.8,247.8 328.8,250.2 326.2,252.9 322.6,253.7" fill="#4cb84a"/><polygon points="307.7,260.1 310.8,259.5 314.1,253.9 317.7,262.9 315.2,266.1 313.0,267.8 308.1,270.5 306.9,263.6" fill="#4cb84a"/><polygon points="317.8,273.3 315.6,272.2 314.0,269.1 317.2,269.2 320.3,266.7 324.2,269.8 322.8,271.5 319.7,274.1" fill="#4cb84a"/><polygon points="321.2,290.4 315.0,290.4 311.5,291.7 307.9,288.1 308.9,285.5 312.7,283.1 315.5,284.5 319.8,285.2" fill="#4cb84a"/><polygon points="347.4,285.9 347.4,290.4 343.3,292.0 338.8,290.2 336.7,288.6 337.9,285.5 340.4,282.9 344.4,285.2" fill="#4cb84a"/><polygon points="372.8,277.2 374.4,274.2 376.8,273.4 379.8,274.8 380.3,277.9 378.6,280.0 375.9,282.5 372.9,279.9" fill="#4cb84a"/><polygon points="361.9,283.8 358.3,282.8 359.7,281.5 360.8,279.9 362.6,279.3 364.5,281.1 363.9,282.4 363.0,284.4" fill="#4cb84a"/><polygon points="349.3,270.2 348.7,271.9 348.5,275.1 347.0,275.1 345.4,273.7 344.3,271.7 344.5,269.4 347.5,267.3" fill="#4cb84a"/><polygon points="387.0,290.7 387.5,291.4 388.4,295.9 385.2,298.1 383.8,295.8 379.2,293.9 380.8,292.4 382.5,289.7" fill="#4cb84a"/><polygon points="427.4,290.1 430.6,292.1 427.6,296.3 427.2,297.3 424.0,296.4 421.3,293.8 421.4,292.2 425.8,288.6" fill="#4cb84a"/><polygon points="340.8,314.7 336.8,315.5 327.3,312.4 324.9,307.4 329.1,301.9 334.3,296.3 340.6,299.4 341.8,306.2" fill="#4cb84a"/><polygon points="313.1,311.0 317.1,313.4 321.7,312.0 322.1,315.5 322.4,318.6 317.1,319.1 314.1,318.3 311.6,316.3" fill="#4cb84a"/><polygon points="345.5,316.5 343.2,314.4 340.4,312.0 342.1,306.8 349.4,305.7 353.5,311.2 353.8,316.4 349.1,318.9" fill="#4cb84a"/><polygon points="369.3,301.9 368.3,299.7 368.8,292.9 374.2,293.6 377.9,293.5 379.0,297.0 378.2,300.9 374.2,300.6" fill="#4cb84a"/><polygon points="385.5,297.0 385.0,294.6 386.3,290.9 388.9,291.9 389.9,293.9 390.8,296.9 389.7,298.8 387.9,299.1" fill="#4cb84a"/><polygon points="401.8,291.8 404.0,291.3 406.1,292.6 406.3,293.9 404.1,296.7 401.9,297.8 401.4,295.4 400.8,293.3" fill="#4cb84a"/><polygon points="422.8,301.2 420.0,299.5 422.5,292.3 425.8,294.0 428.6,294.1 428.7,296.4 429.5,303.8 426.0,306.0" fill="#4cb84a"/><polygon points="321.5,334.6 317.4,333.5 321.4,328.8 326.2,328.0 331.2,328.6 329.1,333.2 330.3,337.3 323.3,335.9" fill="#4cb84a"/><polygon points="318.1,327.9 319.0,324.6 320.2,323.6 320.9,322.7 322.4,324.0 323.6,325.8 323.2,329.5 319.4,329.1" fill="#4cb84a"/><polygon points="337.9,351.8 334.5,354.7 330.5,349.5 332.9,345.8 332.4,342.8 337.3,342.7 341.9,346.3 342.6,350.6" fill="#4cb84a"/><polygon points="346.4,357.5 342.4,358.2 341.6,356.8 341.6,355.2 341.0,351.7 344.0,352.5 346.2,353.1 347.1,356.2" fill="#4cb84a"/><polygon points="358.3,330.3 360.2,331.6 361.1,333.7 360.6,335.7 358.5,338.9 355.0,336.8 355.4,334.9 355.7,331.3" fill="#4cb84a"/><polygon points="360.5,325.6 363.6,322.8 362.9,320.9 366.4,318.5 370.6,319.9 370.9,324.2 370.4,327.7 365.4,326.2" fill="#4cb84a"/><polygon points="382.0,325.3 378.0,324.4 376.1,317.1 377.7,312.8 380.4,312.8 385.0,313.1 387.1,315.2 384.9,323.7" fill="#4cb84a"/><polygon points="375.3,322.9 378.9,323.0 381.7,326.7 382.0,333.8 377.9,335.8 376.8,337.0 372.4,336.6 371.2,330.1" fill="#4cb84a"/><polygon points="390.7,318.0 387.7,315.1 389.6,312.0 390.1,308.9 400.1,308.1 402.2,309.7 402.8,313.7 399.1,316.9" fill="#4cb84a"/><polygon points="399.7,319.3 401.9,321.8 404.6,326.6 406.7,332.7 400.7,335.5 394.1,340.5 392.1,333.2 395.9,324.6" fill="#4cb84a"/><polygon points="414.3,307.5 416.0,312.2 414.1,317.8 412.0,323.1 408.7,323.0 407.4,317.0 405.5,312.4 408.5,308.5" fill="#4cb84a"/><polygon points="416.8,312.5 414.9,312.1 414.4,308.1 417.1,306.7 420.0,305.5 420.6,310.5 421.2,313.4 418.2,315.7" fill="#4cb84a"/><polygon points="377.2,341.2 383.4,336.6 387.9,336.2 394.3,336.8 390.9,346.9 390.7,356.0 384.7,352.0 382.3,348.0" fill="#4cb84a"/><polygon points="376.9,362.9 381.9,360.4 387.9,356.6 394.7,359.4 390.3,363.7 393.6,367.2 382.5,366.1 375.4,364.9" fill="#4cb84a"/><polygon points="398.7,365.5 401.5,367.9 401.4,373.7 397.7,376.8 393.2,375.5 389.5,374.3 390.5,370.4 392.6,366.1" fill="#4cb84a"/><polygon points="363.3,367.6 366.8,365.7 370.7,365.3 372.2,367.4 373.2,369.9 369.8,371.3 366.2,370.1 364.1,369.3" fill="#4cb84a"/><polygon points="409.5,357.1 407.0,356.5 406.9,353.6 406.1,348.9 411.6,348.8 412.8,351.0 416.3,354.0 414.8,358.0" fill="#4cb84a"/><polygon points="407.6,380.6 406.9,376.4 409.7,376.0 413.0,377.2 413.0,380.1 413.8,381.1 411.5,383.3 408.7,383.7" fill="#4cb84a"/><polygon points="402.1,362.2 404.8,361.6 405.0,363.9 405.1,367.2 403.6,367.2 401.9,368.8 400.4,367.1 401.4,364.3" fill="#4cb84a"/><polygon points="511.5,226.6 508.7,226.8 507.4,222.2 507.0,216.8 509.3,210.9 512.8,214.8 516.9,215.4 517.0,221.0" fill="#4cb84a"/><polygon points="517.7,253.2 514.1,252.8 515.4,245.9 518.0,239.1 520.3,243.6 525.7,245.8 522.8,248.2 520.0,255.8" fill="#4cb84a"/><polygon points="503.3,273.7 504.0,272.0 510.2,270.5 511.0,270.8 516.2,272.4 512.2,277.9 509.9,281.2 508.2,278.6" fill="#4cb84a"/><polygon points="522.9,279.6 522.2,282.5 522.0,283.9 519.2,285.0 516.1,283.0 515.3,281.3 517.9,280.2 519.3,279.3" fill="#4cb84a"/><polygon points="304.9,277.5 305.8,282.9 302.9,280.5 300.8,282.6 298.7,278.0 300.2,274.7 303.8,275.2 304.2,276.0" fill="#4cb84a"/><polygon points="304.3,295.4 307.3,296.4 308.6,298.6 308.3,301.6 307.9,302.8 303.0,304.1 303.9,301.1 303.3,298.1" fill="#4cb84a"/><polygon points="354.7,296.3 357.3,300.3 354.8,302.8 351.8,304.2 349.0,303.0 348.5,299.3 349.0,296.7 350.8,295.6" fill="#4cb84a"/><polygon points="364.4,300.6 365.6,302.9 367.6,304.3 366.8,305.8 365.4,308.7 362.5,308.0 361.6,306.4 363.1,303.7" fill="#4cb84a"/><polygon points="330.4,324.8 328.3,325.3 326.8,322.8 326.0,320.9 328.4,318.0 332.3,318.8 335.2,320.8 334.1,324.4" fill="#4cb84a"/><polygon points="350.8,340.8 353.6,342.7 351.6,346.4 352.7,349.4 348.7,348.3 346.9,345.5 347.7,344.4 349.3,342.8" fill="#4cb84a"/><polygon points="368.0,353.9 368.3,349.5 371.0,348.0 373.4,347.1 376.5,352.3 374.9,354.5 371.6,357.8 368.8,356.5" fill="#4cb84a"/><polygon points="421.8,331.5 419.3,334.8 416.8,334.3 414.4,334.0 414.2,328.5 415.6,326.1 418.0,323.5 422.2,327.2" fill="#4cb84a"/><polygon points="432.3,310.4 432.1,314.1 430.2,317.2 428.6,316.8 426.5,314.3 428.5,310.6 429.5,308.6 431.5,307.3" fill="#4cb84a"/><polygon points="491.9,302.8 492.6,300.3 497.3,299.3 500.8,301.8 499.9,303.5 500.5,304.9 497.5,304.9 494.3,305.5" fill="#4cb84a"/><polygon points="521.1,294.6 524.5,295.5 522.3,296.7 520.0,298.3 516.2,297.8 516.5,296.6 515.0,295.3 518.5,294.6" fill="#4cb84a"/><polygon points="354.5,323.1 356.3,322.2 357.3,324.0 356.9,324.8 355.1,325.0 354.0,324.3" fill="#4cb84a"/><polygon points="333.1,227.9 333.8,227.4 334.5,226.9 334.5,228.0 333.9,228.6 333.3,228.8" fill="#4cb84a"/><polygon points="371.6,323.4 371.4,323.8 370.5,324.4 370.0,323.7 369.8,323.2 370.7,322.5" fill="#4cb84a"/><polygon points="340.0,342.1 337.1,341.8 337.1,339.1 339.9,337.1 341.9,338.5 341.5,340.6" fill="#4cb84a"/><polygon points="319.4,340.0 318.3,340.5 317.7,339.6 317.7,339.0 318.6,339.0 319.7,339.2" fill="#4cb84a"/><polygon points="335.8,287.5 333.5,286.7 331.8,284.6 333.9,284.0 336.2,284.0 336.7,285.3" fill="#4cb84a"/><polygon points="415.6,193.9 416.6,194.3 417.3,194.6 416.8,195.7 416.2,195.6 415.2,194.8" fill="#4cb84a"/><polygon points="336.4,276.0 336.2,276.9 335.2,277.2 334.5,276.5 335.0,276.0 335.9,275.5" fill="#4cb84a"/><polygon points="417.3,299.4 418.5,297.9 421.0,298.1 420.2,299.6 419.0,300.8 417.6,300.0" fill="#4cb84a"/><polygon points="412.8,311.2 413.2,310.2 414.2,309.5 415.2,310.5 414.8,311.3 414.3,312.1" fill="#4cb84a"/><polygon points="390.7,204.4 391.7,205.0 392.0,206.0 390.6,206.6 388.7,206.4 389.5,204.9" fill="#4cb84a"/><polygon points="336.1,237.5 337.1,236.8 339.1,238.2 340.4,240.8 338.0,240.5 335.3,240.0" fill="#4cb84a"/><polygon points="359.5,226.2 356.8,226.9 356.8,225.8 357.4,224.4 358.9,224.2 360.7,224.5" fill="#4cb84a"/><polygon points="327.6,352.6 329.1,351.8 332.5,353.1 332.9,354.6 330.0,355.2 326.5,355.3" fill="#4cb84a"/><polygon points="311.2,247.6 312.5,247.7 312.6,248.8 312.2,249.4 311.3,249.0 310.6,248.3" fill="#4cb84a"/><polygon points="353.1,224.1 351.7,225.1 350.2,224.7 349.6,223.7 350.9,223.0 352.0,223.2" fill="#4cb84a"/><polygon points="396.2,204.6 399.1,203.6 400.9,203.9 400.7,205.9 400.0,206.7 397.4,206.7" fill="#4cb84a"/><polygon points="426.5,304.8 425.3,304.0 423.8,303.2 425.7,302.5 426.9,302.2 427.1,303.9" fill="#4cb84a"/><polygon points="416.0,334.8 415.7,336.0 413.9,334.8 413.6,334.0 414.5,332.7 415.4,333.5" fill="#4cb84a"/><polygon points="359.1,350.3 360.2,348.9 360.7,347.4 363.9,348.1 363.2,349.7 361.5,350.8" fill="#4cb84a"/><polygon points="403.5,296.5 402.3,297.0 401.7,297.1 401.3,296.3 402.1,295.7 402.8,295.0" fill="#4cb84a"/><polygon points="386.0,315.5 387.4,315.2 389.1,315.5 388.0,316.4 387.4,316.6 386.2,316.8" fill="#4cb84a"/><polygon points="406.1,297.4 405.0,298.7 402.1,298.7 402.7,297.1 403.2,296.3 405.4,296.3" fill="#4cb84a"/><polygon points="387.2,310.8 387.3,310.0 387.5,309.6 389.1,309.5 389.0,310.7 388.9,311.5" fill="#4cb84a"/><polygon points="358.6,311.9 358.7,311.2 359.2,310.4 360.1,311.0 360.2,311.8 359.6,312.8" fill="#4cb84a"/><polygon points="319.7,291.3 318.4,292.1 316.9,291.6 316.8,289.3 318.3,289.3 319.6,290.2" fill="#4cb84a"/><polygon points="312.5,266.4 309.5,265.6 311.6,263.7 313.5,264.1 315.7,265.5 314.8,267.2" fill="#4cb84a"/><polygon points="304.0,312.4 303.0,312.3 303.0,311.2 303.9,310.6 305.0,311.2 304.6,312.0" fill="#4cb84a"/><polygon points="314.3,264.0 314.5,266.8 312.2,266.5 310.5,265.9 309.4,264.1 311.5,263.0" fill="#4cb84a"/><polygon points="391.5,324.2 390.7,323.8 390.2,323.3 391.0,322.8 391.7,322.7 392.3,323.5" fill="#4cb84a"/><polygon points="395.2,342.6 396.3,343.2 395.6,343.9 394.5,344.8 393.9,343.8 394.2,343.1" fill="#4cb84a"/><polygon points="296.8,292.7 296.4,290.1 299.7,291.3 302.3,292.5 300.1,294.1 298.3,293.9" fill="#4cb84a"/><polygon points="384.4,296.4 384.5,297.2 383.7,297.8 382.7,297.9 382.3,297.2 383.0,296.5" fill="#4cb84a"/><polygon points="331.8,304.2 332.7,304.2 332.7,305.1 331.9,305.8 331.5,305.1 331.4,304.6" fill="#4cb84a"/><polygon points="357.3,217.3 356.8,216.9 357.0,215.6 358.1,215.8 358.3,216.5 358.2,216.9" fill="#4cb84a"/><polygon points="340.1,293.4 339.0,295.5 334.5,295.8 333.4,294.2 334.7,291.0 338.5,291.1" fill="#4cb84a"/><polygon points="341.3,238.0 340.6,237.3 341.3,236.7 342.1,237.3 342.9,237.9 341.8,238.1" fill="#4cb84a"/><polygon points="401.7,210.7 403.1,209.7 404.9,211.2 404.1,212.2 403.4,213.4 401.7,212.4" fill="#4cb84a"/><polygon points="310.8,264.7 310.1,262.9 311.6,262.9 314.6,263.0 315.5,264.4 312.5,266.6" fill="#4cb84a"/><polygon points="402.0,308.8 402.3,310.0 400.6,310.4 399.5,310.6 399.0,309.4 400.0,308.3" fill="#4cb84a"/><polygon points="321.0,241.5 319.1,242.7 317.8,241.7 317.2,239.9 320.0,239.9 321.9,240.3" fill="#4cb84a"/><polygon points="355.2,364.3 355.3,363.3 356.1,363.1 357.2,364.0 356.9,364.8 356.0,364.9" fill="#4cb84a"/><polygon points="377.2,328.7 374.5,327.6 375.7,326.0 377.7,325.1 379.3,325.4 380.0,327.9" fill="#4cb84a"/><polygon points="343.6,357.2 344.3,356.5 345.4,356.9 345.0,357.7 344.7,358.0 343.3,357.9" fill="#4cb84a"/><polygon points="415.7,370.6 414.1,371.4 412.0,371.0 411.9,370.0 413.7,369.6 415.4,369.9" fill="#4cb84a"/><polygon points="378.7,355.8 380.0,355.3 380.2,356.2 380.7,357.0 379.1,357.2 377.9,356.0" fill="#4cb84a"/><polygon points="330.0,231.5 330.5,230.4 332.0,230.8 333.7,231.3 332.2,232.7 330.2,232.4" fill="#4cb84a"/><polygon points="323.0,322.6 323.1,320.8 324.7,319.0 327.0,320.6 327.3,321.7 326.0,323.1" fill="#4cb84a"/><polygon points="347.6,218.1 349.1,217.8 349.2,218.9 348.4,219.6 347.7,220.2 347.3,219.1" fill="#4cb84a"/><polygon points="418.3,290.6 419.6,290.8 421.4,291.1 421.5,291.9 419.6,292.3 419.2,291.9" fill="#4cb84a"/><polygon points="319.4,253.6 321.6,255.0 323.1,257.4 320.3,258.8 317.9,256.6 317.1,255.2" fill="#4cb84a"/><polygon points="399.4,358.2 399.7,359.3 398.3,359.7 397.5,359.0 397.1,357.9 398.6,357.6" fill="#4cb84a"/><polygon points="401.1,346.5 402.1,346.4 402.3,347.4 401.5,348.2 400.7,347.9 399.7,347.3" fill="#4cb84a"/><polygon points="380.6,345.7 379.1,346.1 378.3,345.8 378.4,344.7 379.1,344.0 380.5,344.7" fill="#4cb84a"/><polygon points="315.3,283.7 316.3,285.1 316.0,286.2 315.1,286.8 314.2,285.7 313.9,284.8" fill="#4cb84a"/><polygon points="338.4,227.3 339.0,229.7 335.6,231.2 333.3,230.9 333.8,228.0 336.2,226.6" fill="#4cb84a"/><polygon points="376.0,222.0 373.3,221.9 374.0,220.1 375.2,219.2 378.2,219.4 378.2,221.3" fill="#4cb84a"/><polygon points="370.9,320.0 371.8,320.2 372.3,321.3 371.6,321.7 370.4,321.9 370.3,320.7" fill="#4cb84a"/><polygon points="341.9,311.3 342.7,311.1 343.6,311.1 344.3,311.7 342.6,312.3 342.1,312.1" fill="#4cb84a"/><polygon points="358.7,350.1 358.1,351.1 354.6,351.5 353.4,350.1 355.1,348.1 357.9,347.4" fill="#4cb84a"/><polygon points="372.4,204.4 372.0,205.2 370.5,204.7 370.4,204.3 370.8,203.3 371.8,203.8" fill="#4cb84a"/><polygon points="415.4,288.0 414.8,286.6 417.7,285.9 419.3,286.7 418.4,288.8 416.2,289.7" fill="#4cb84a"/><polygon points="322.9,246.2 322.2,246.7 321.6,246.4 321.2,245.7 322.1,245.2 323.6,245.5" fill="#4cb84a"/><polygon points="335.7,302.4 336.4,303.2 335.9,303.6 334.7,303.4 333.9,302.5 334.6,302.0" fill="#4cb84a"/><polygon points="380.2,357.0 378.3,358.9 376.4,359.6 373.4,358.6 374.8,357.4 376.1,356.0" fill="#4cb84a"/><polygon points="341.7,316.5 341.3,316.8 340.4,317.3 340.2,316.3 340.2,315.5 341.3,315.9" fill="#4cb84a"/><polygon points="387.2,299.5 385.7,300.1 385.1,299.8 385.0,298.7 385.7,298.4 386.5,298.8" fill="#4cb84a"/><polygon points="334.2,318.1 334.9,316.9 335.7,316.5 336.8,317.5 336.3,318.5 335.2,318.2" fill="#4cb84a"/><polygon points="404.9,379.7 406.0,378.4 407.8,378.3 409.2,379.9 407.4,381.0 405.9,380.3" fill="#4cb84a"/><polygon points="465.7,211.0 466.2,213.0 463.4,213.1 461.9,213.5 461.9,210.8 463.9,210.5" fill="#4cb84a"/><polygon points="412.9,380.2 412.8,379.7 413.4,378.9 414.5,379.8 414.4,380.4 413.4,380.8" fill="#4cb84a"/><polygon points="416.3,296.5 415.7,297.5 415.4,298.2 413.9,297.7 414.2,296.9 415.0,296.7" fill="#4cb84a"/><polygon points="349.6,314.1 352.6,313.7 352.8,316.5 349.9,317.1 347.6,317.6 346.6,314.4" fill="#4cb84a"/><polygon points="425.8,301.6 427.2,302.6 427.7,303.5 426.8,304.4 424.3,303.8 425.1,302.6" fill="#4cb84a"/><polygon points="333.2,276.2 334.6,277.1 334.3,277.6 333.7,278.5 332.5,277.6 332.0,276.8" fill="#4cb84a"/><polygon points="453.7,198.7 454.6,200.2 453.9,201.3 451.7,201.0 451.8,199.9 451.5,198.8" fill="#4cb84a"/><polygon points="421.9,288.8 421.2,288.7 420.5,288.1 421.1,287.1 422.8,287.5 423.2,288.3" fill="#4cb84a"/><polygon points="315.3,315.9 316.4,316.0 317.2,316.8 316.1,317.0 315.6,317.0 314.6,316.6" fill="#4cb84a"/><polygon points="315.9,341.7 316.5,340.1 318.8,340.1 319.3,341.1 319.8,343.3 317.5,343.6" fill="#4cb84a"/><polygon points="406.1,195.1 406.4,194.5 407.8,195.0 408.2,195.5 408.0,196.2 406.5,195.9" fill="#4cb84a"/><polygon points="383.3,290.7 382.6,291.6 382.0,291.9 381.5,291.3 381.1,290.6 382.1,290.2" fill="#4cb84a"/><polygon points="468.0,201.1 468.1,200.3 468.7,199.6 469.4,199.7 470.2,200.6 468.9,201.2" fill="#4cb84a"/><polygon points="317.0,319.3 318.9,320.3 318.4,322.0 316.3,322.7 314.3,321.8 314.8,319.8" fill="#4cb84a"/><polygon points="304.8,287.4 305.5,287.6 305.2,288.1 304.3,288.6 303.4,288.1 303.6,287.4" fill="#4cb84a"/><polygon points="319.8,297.5 320.5,297.3 322.0,297.6 321.9,298.6 320.7,298.6 320.2,298.4" fill="#4cb84a"/><polygon points="385.1,208.1 384.3,207.6 384.4,206.8 385.1,206.4 386.5,207.2 386.1,208.1" fill="#4cb84a"/><polygon points="327.8,277.7 326.8,277.6 325.6,277.3 325.9,276.1 327.3,275.8 327.8,276.5" fill="#4cb84a"/><polygon points="339.2,303.9 339.8,305.2 339.0,305.7 337.3,305.7 337.0,304.1 337.6,303.5" fill="#4cb84a"/><polygon points="421.7,341.0 422.8,341.6 423.1,342.4 422.6,342.7 421.6,342.7 421.1,341.5" fill="#4cb84a"/><polygon points="393.2,345.6 391.7,344.8 391.4,343.4 392.4,343.0 394.0,343.3 394.3,344.9" fill="#4cb84a"/><polygon points="538,302 542,298 542,302" fill="#5fd05c"/><polygon points="534,309 538,305 538,309" fill="#5fd05c"/><polygon points="530,317 534,313 534,317" fill="#5fd05c"/><polygon points="526,326 530,322 530,326" fill="#5fd05c"/><polygon points="523,334 527,330 527,334" fill="#5fd05c"/><polygon points="520,342 524,338 524,342" fill="#5fd05c"/><polygon points="517,347 521,343 521,347" fill="#5fd05c"/><line x1="536" y1="219" x2="543.500" y2="262" stroke="#46b446" stroke-width="1.800"/><line x1="533" y1="219" x2="540" y2="262" stroke="#7a3c10" stroke-width="1.200" stroke-dasharray="5 4"/><line x1="543.500" y1="262" x2="548" y2="283" stroke="#46b446" stroke-width="1.500"/><polygon points="359.8,236.9 359.0,233.6 367.3,230.9 374.3,231.7 378.2,232.0 380.7,238.1 377.4,240.5 369.5,238.7" fill="#0a0af2"/><polygon points="353.3,242.8 359.3,245.7 364.0,244.8 362.9,249.7 358.2,251.7 354.9,254.9 349.9,249.9 349.2,244.0" fill="#0a0af2"/><polygon points="340.6,253.0 341.6,251.9 344.3,249.3 346.9,251.0 348.6,253.3 346.8,258.6 342.5,256.5 340.3,257.9" fill="#0a0af2"/><polygon points="368.2,257.8 365.5,258.4 360.8,258.1 358.7,254.9 359.9,251.8 362.8,251.7 365.6,252.1 366.6,254.5" fill="#0a0af2"/><polygon points="389.3,225.8 390.0,224.5 392.5,221.5 395.3,224.2 394.8,227.3 394.5,231.4 390.1,232.0 388.0,228.5" fill="#0a0af2"/><polygon points="397.8,254.2 394.1,251.4 397.6,250.6 401.9,247.5 407.8,248.2 409.4,252.3 406.0,256.1 402.4,255.1" fill="#0a0af2"/><polygon points="424.2,241.7 422.5,248.2 419.5,248.3 415.1,245.5 415.5,241.9 417.8,238.2 421.3,232.3 424.4,237.4" fill="#0a0af2"/><polygon points="439.7,234.8 440.8,233.2 441.1,228.5 446.9,228.7 448.6,231.0 450.3,234.5 447.0,237.3 442.9,238.6" fill="#0a0af2"/><polygon points="406.1,264.3 412.4,267.0 418.0,271.8 423.2,274.2 407.8,279.7 397.7,278.0 397.2,272.2 397.9,268.4" fill="#0a0af2"/><polygon points="419.1,259.5 417.7,254.8 421.3,252.8 425.4,254.3 427.2,257.9 426.4,262.3 424.0,263.7 418.8,261.3" fill="#0a0af2"/><polygon points="431.9,261.3 428.5,262.0 427.1,259.1 423.7,258.1 426.9,254.5 430.1,255.4 432.2,255.8 433.1,258.7" fill="#0a0af2"/><polygon points="456.3,266.8 460.0,270.1 459.8,272.6 457.2,274.3 453.9,272.6 451.9,272.0 450.8,268.8 452.1,267.8" fill="#0a0af2"/><polygon points="467.6,243.0 470.2,247.6 467.2,249.7 465.5,251.7 463.2,250.8 459.1,246.8 462.1,242.4 465.0,242.9" fill="#0a0af2"/><polygon points="470.7,247.1 472.8,246.4 474.7,245.2 476.5,248.6 477.2,253.3 475.1,253.1 471.8,255.8 472.4,251.6" fill="#0a0af2"/><polygon points="464.7,253.4 468.2,253.8 467.8,258.5 463.8,257.7 461.2,258.6 457.5,256.7 458.6,255.0 459.1,252.6" fill="#0a0af2"/><polygon points="451.4,313.6 448.2,320.8 445.3,325.8 441.7,323.6 434.6,321.5 436.3,315.7 436.1,309.0 447.0,310.4" fill="#0a0af2"/><polygon points="450.4,294.4 461.6,292.0 465.8,297.2 469.5,298.6 465.4,304.0 458.3,306.5 454.2,304.9 450.7,303.3" fill="#0a0af2"/><polygon points="435.6,342.4 431.4,339.1 429.2,334.9 432.0,328.1 435.9,331.6 438.7,331.1 440.6,337.3 439.9,341.0" fill="#0a0af2"/><polygon points="459.2,333.9 454.6,330.7 454.1,327.5 453.6,324.1 456.0,322.8 459.3,324.2 461.9,326.3 463.3,332.6" fill="#0a0af2"/><polygon points="428.2,347.8 425.4,351.8 422.6,348.5 422.3,346.9 424.1,343.7 424.7,342.8 428.5,342.0 428.4,345.6" fill="#0a0af2"/><polygon points="431.6,356.4 430.6,352.8 434.3,350.7 437.6,347.7 442.0,350.6 440.3,353.4 441.1,358.4 434.5,359.8" fill="#0a0af2"/><polygon points="430.3,357.9 430.2,360.5 428.2,363.0 426.7,361.8 423.6,360.8 423.4,356.9 427.2,354.9 429.6,356.2" fill="#0a0af2"/><polygon points="449.1,306.2 451.5,305.0 451.3,310.1 449.7,313.4 446.5,312.5 442.4,311.1 445.2,308.5 446.1,306.2" fill="#0a0af2"/><polygon points="472.7,315.7 476.7,315.8 474.5,320.0 469.3,323.2 468.6,320.8 463.3,318.0 465.3,316.6 468.9,315.3" fill="#0a0af2"/><polygon points="480.4,301.9 479.3,305.5 475.8,301.8 474.9,300.1 475.4,298.8 477.9,296.6 479.9,297.5 481.3,299.7" fill="#0a0af2"/><polygon points="471.0,339.3 473.9,341.1 471.4,343.0 465.2,344.3 465.5,341.2 463.4,339.7 467.0,336.0 470.1,335.5" fill="#0a0af2"/><polygon points="453.6,340.9 454.9,343.2 456.6,346.2 454.9,350.0 450.4,347.5 448.2,347.6 448.0,343.8 451.4,341.3" fill="#0a0af2"/><polygon points="480.2,332.6 481.1,329.9 481.2,326.6 485.2,325.1 485.4,327.3 489.4,330.4 486.4,331.0 483.5,333.3" fill="#0a0af2"/><polygon points="489.3,309.5 490.1,306.6 491.9,310.3 492.1,313.4 491.4,316.3 488.8,317.1 485.6,314.4 485.3,310.8" fill="#0a0af2"/><polygon points="442.8,242.2 443.8,242.6 443.2,243.6 442.7,243.9 441.8,243.3 441.4,242.5" fill="#0a0af2"/><polygon points="419.1,247.5 420.2,247.8 420.3,248.5 419.7,249.3 419.1,249.1 418.8,248.1" fill="#0a0af2"/><polygon points="480.0,240.8 479.9,241.7 479.1,241.9 478.8,241.4 478.9,241.0 479.5,240.4" fill="#0a0af2"/><polygon points="379.4,273.0 379.8,270.5 381.5,270.7 385.0,272.0 383.2,273.5 381.3,273.4" fill="#0a0af2"/><polygon points="379.4,262.1 379.8,262.5 379.6,263.1 379.3,263.2 378.5,263.2 378.4,262.5" fill="#0a0af2"/><polygon points="428.8,273.5 430.4,275.6 429.3,276.3 427.7,277.0 424.9,276.2 427.0,274.3" fill="#0a0af2"/><polygon points="476.2,249.8 476.3,251.9 474.8,252.5 472.0,252.3 472.7,250.3 473.5,249.4" fill="#0a0af2"/><polygon points="381.0,259.4 380.2,258.8 381.0,258.3 381.7,257.9 381.9,258.5 381.6,259.2" fill="#0a0af2"/><polygon points="392.6,243.5 390.5,244.5 388.8,243.4 388.6,241.7 390.8,241.2 392.2,241.7" fill="#0a0af2"/><polygon points="419.9,222.2 419.6,224.3 418.3,226.0 415.6,224.8 416.2,223.5 417.3,222.0" fill="#0a0af2"/><polygon points="404.7,234.5 403.7,234.7 402.2,234.6 403.1,233.2 403.9,233.2 404.8,233.6" fill="#0a0af2"/><polygon points="427.0,230.4 426.6,228.2 428.7,227.8 431.3,227.4 431.9,230.4 428.6,231.8" fill="#0a0af2"/><polygon points="439.2,268.7 440.0,269.0 440.9,269.5 441.1,270.1 439.6,270.3 438.9,269.5" fill="#0a0af2"/><polygon points="394.9,274.0 393.3,272.4 392.9,271.2 395.0,270.4 397.4,271.0 396.5,272.8" fill="#0a0af2"/><polygon points="424.3,280.3 425.0,280.3 426.2,280.6 425.6,281.6 424.9,281.4 423.8,281.3" fill="#0a0af2"/><polygon points="414.2,240.4 411.8,239.6 411.8,238.4 413.1,237.2 415.0,237.1 415.4,238.9" fill="#0a0af2"/><polygon points="383.2,268.8 382.6,269.5 381.6,269.9 381.1,269.0 381.3,268.5 382.6,268.5" fill="#0a0af2"/><polygon points="400.2,229.0 400.2,228.8 400.7,228.4 401.5,228.9 401.5,229.6 400.4,229.8" fill="#0a0af2"/><polygon points="473.4,268.6 473.5,270.0 472.3,270.4 471.2,270.4 471.4,269.1 472.1,268.9" fill="#0a0af2"/><polygon points="438.3,250.5 436.6,249.2 437.8,246.1 440.2,246.6 442.9,247.8 442.0,250.0" fill="#0a0af2"/><polygon points="400.5,244.5 399.9,246.0 398.6,244.8 398.7,243.3 399.2,242.0 400.5,243.4" fill="#0a0af2"/><polygon points="462.4,271.7 462.8,271.0 463.8,271.0 464.1,271.8 463.5,272.0 463.1,272.2" fill="#0a0af2"/><polygon points="440.4,247.8 439.9,249.6 438.2,249.4 436.1,248.4 437.3,247.1 439.0,246.8" fill="#0a0af2"/><polygon points="352.9,247.8 354.1,248.7 354.9,249.9 354.0,250.3 352.3,249.6 352.3,248.8" fill="#0a0af2"/><polygon points="457.1,237.7 455.3,237.4 454.7,235.5 455.4,234.6 457.4,236.1 458.1,237.0" fill="#0a0af2"/><polygon points="418.0,263.6 415.9,264.4 414.0,261.8 414.9,261.0 417.9,260.2 418.0,261.7" fill="#0a0af2"/><polygon points="466.1,245.9 464.6,246.7 462.9,244.9 464.8,243.4 466.1,243.0 467.2,244.5" fill="#0a0af2"/><polygon points="409.6,262.7 407.7,264.0 407.1,262.6 407.0,261.9 408.0,261.2 409.7,261.9" fill="#0a0af2"/><polygon points="416.7,279.4 415.9,279.2 415.5,277.9 417.1,277.5 418.0,278.3 417.8,279.4" fill="#0a0af2"/><polygon points="440.7,266.0 441.7,266.8 442.4,268.1 440.8,269.1 438.6,268.2 439.4,266.6" fill="#0a0af2"/><polygon points="447.8,278.2 447.1,276.2 449.8,275.6 453.1,276.5 452.6,280.1 450.0,280.9" fill="#0a0af2"/><polygon points="408.0,223.6 407.4,223.2 407.6,222.7 408.7,222.8 409.4,223.5 408.5,223.6" fill="#0a0af2"/><polygon points="397.5,237.6 396.4,238.3 396.0,238.1 396.0,237.5 396.1,236.8 397.0,237.3" fill="#0a0af2"/><polygon points="438.2,252.9 438.7,254.1 436.8,255.1 433.8,255.6 435.1,253.3 437.3,251.1" fill="#0a0af2"/><polygon points="410.3,258.6 409.6,257.9 409.8,257.3 411.0,257.0 411.9,256.8 411.6,257.9" fill="#0a0af2"/><polygon points="485.3,253.3 483.4,252.8 484.7,251.6 486.0,251.1 487.2,251.4 487.0,252.7" fill="#0a0af2"/><polygon points="418.4,262.3 419.0,262.9 418.1,263.4 417.3,262.8 417.5,262.4 418.0,262.1" fill="#0a0af2"/><polygon points="377.8,228.1 378.7,228.1 379.0,228.6 378.7,229.4 377.9,229.3 377.1,228.6" fill="#0a0af2"/><polygon points="466.9,237.6 470.1,237.5 470.7,240.6 469.2,242.6 466.4,240.8 463.9,238.9" fill="#0a0af2"/><polygon points="387.9,251.0 388.1,252.5 387.3,254.0 386.1,252.6 385.9,251.9 386.9,250.8" fill="#0a0af2"/><polygon points="478.6,257.2 480.2,257.2 481.3,259.2 480.2,260.9 478.3,260.7 476.3,259.5" fill="#0a0af2"/><polygon points="404.3,272.5 404.3,271.7 405.2,271.4 406.3,272.0 405.8,272.5 405.0,273.2" fill="#0a0af2"/><polygon points="376.0,228.6 374.7,228.8 373.7,228.2 374.0,227.3 374.9,226.9 375.5,227.7" fill="#0a0af2"/><polygon points="375.8,235.4 375.4,234.3 376.4,233.8 377.2,233.7 377.7,234.8 377.3,235.7" fill="#0a0af2"/><polygon points="479.2,256.4 478.8,256.7 477.9,256.8 477.3,256.1 478.0,255.9 478.7,255.8" fill="#0a0af2"/><polygon points="415.7,269.8 415.8,271.2 413.6,271.3 412.0,269.3 413.4,268.4 415.1,268.8" fill="#0a0af2"/><polygon points="357.0,250.9 356.8,252.5 354.6,252.4 353.1,251.3 353.8,250.4 356.5,249.9" fill="#0a0af2"/><polygon points="483.0,264.6 481.1,267.8 478.6,268.7 475.4,265.9 476.8,264.4 480.1,264.3" fill="#0a0af2"/><polygon points="473.8,271.4 472.7,270.9 472.6,270.2 473.7,269.7 475.1,269.9 475.3,271.2" fill="#0a0af2"/><polygon points="429.2,231.4 429.1,230.4 430.7,229.0 432.4,230.1 434.0,231.9 430.9,232.8" fill="#0a0af2"/><polygon points="392.3,228.3 393.5,229.4 391.8,230.2 390.3,229.1 390.1,228.4 391.6,227.1" fill="#0a0af2"/><polygon points="397.1,240.6 398.8,240.7 399.2,241.5 399.0,242.3 396.8,242.4 396.4,241.0" fill="#0a0af2"/><polygon points="379.7,249.0 382.7,247.8 385.1,250.6 383.8,252.9 381.9,251.8 380.2,250.4" fill="#0a0af2"/><polygon points="368.1,229.9 368.0,230.9 367.0,232.0 364.9,232.2 364.2,230.0 366.4,229.0" fill="#0a0af2"/><polygon points="419.0,230.4 421.0,232.3 419.4,232.8 416.9,233.8 417.1,232.5 417.4,230.9" fill="#0a0af2"/><polygon points="494.5,247.7 495.3,247.0 496.6,247.4 496.9,248.0 496.6,248.8 495.0,248.7" fill="#0a0af2"/><polygon points="391.2,230.8 388.9,231.4 387.0,230.1 388.1,228.4 390.9,228.1 392.2,229.9" fill="#0a0af2"/><polygon points="399.7,265.0 401.1,262.6 404.1,262.8 404.2,265.0 403.6,267.3 400.7,266.4" fill="#0a0af2"/><polygon points="359.9,238.9 359.3,238.7 358.8,238.4 358.7,237.8 360.0,237.5 360.1,238.1" fill="#0a0af2"/><polygon points="387.6,264.2 387.5,263.4 388.4,263.2 389.1,263.6 388.8,264.3 388.1,264.4" fill="#0a0af2"/><polygon points="417.6,230.1 414.4,229.4 414.0,227.4 415.4,225.3 418.8,226.1 419.9,227.8" fill="#0a0af2"/><polygon points="405.9,261.1 403.5,260.3 401.7,258.2 404.1,256.8 408.1,257.4 406.5,260.2" fill="#0a0af2"/><polygon points="408.7,237.6 407.6,238.1 407.2,237.4 407.7,236.6 408.5,236.1 409.3,237.0" fill="#0a0af2"/><polygon points="460.7,235.2 461.3,235.7 461.4,236.1 461.3,236.4 460.4,236.3 459.7,236.1" fill="#0a0af2"/><polygon points="491.0,233.3 490.5,232.7 491.1,232.4 492.1,232.4 492.0,232.7 491.8,233.2" fill="#0a0af2"/><polygon points="396.4,245.0 396.6,245.6 395.3,246.0 395.2,245.5 394.9,244.7 395.5,244.6" fill="#0a0af2"/><polygon points="443.3,252.6 441.9,254.0 439.1,252.1 440.1,250.4 442.7,248.6 444.8,250.5" fill="#0a0af2"/><polygon points="454.5,247.1 452.0,248.7 448.5,248.4 449.3,246.0 450.4,244.6 453.7,245.5" fill="#0a0af2"/><polygon points="401.6,266.2 400.8,265.9 400.4,265.6 401.0,265.0 402.0,265.2 402.3,265.8" fill="#0a0af2"/><polygon points="371.8,248.3 370.8,248.5 370.6,248.0 371.0,247.4 371.8,247.0 372.5,247.6" fill="#0a0af2"/><polygon points="490.2,246.8 489.1,247.0 488.1,246.7 487.0,245.7 488.3,245.0 489.6,245.3" fill="#0a0af2"/><polygon points="485.4,245.4 486.8,246.4 487.4,247.7 486.1,249.9 484.8,248.8 483.4,247.6" fill="#0a0af2"/><polygon points="472.4,227.7 471.9,230.0 469.7,230.2 465.5,231.0 466.4,227.4 467.7,225.7" fill="#0a0af2"/><polygon points="408.4,238.9 408.6,238.0 409.4,238.0 410.3,237.9 409.9,238.8 409.0,239.0" fill="#0a0af2"/><polygon points="389.3,232.9 389.3,233.6 388.4,234.1 387.3,233.2 387.8,232.3 389.1,232.0" fill="#0a0af2"/><polygon points="457.5,276.9 456.4,275.5 457.8,274.7 458.9,274.4 459.6,275.8 459.3,277.2" fill="#0a0af2"/><polygon points="497.9,245.4 497.1,246.0 496.4,245.4 496.4,244.8 497.0,244.0 498.3,244.2" fill="#0a0af2"/><polygon points="381.1,241.0 381.0,242.2 379.9,242.9 378.0,242.4 378.4,240.5 379.5,240.4" fill="#0a0af2"/><polygon points="387.3,267.0 387.2,267.9 385.7,269.0 384.0,267.8 384.6,266.0 387.0,265.8" fill="#0a0af2"/><polygon points="481.1,251.7 476.7,253.2 473.4,252.8 473.3,250.5 476.4,249.5 478.6,249.6" fill="#0a0af2"/><polygon points="440.3,324.0 440.7,327.2 436.8,325.3 434.6,323.8 436.2,321.4 439.4,321.2" fill="#0a0af2"/><polygon points="505.0,319.8 505.5,321.9 502.3,322.7 499.9,320.9 501.5,319.7 503.0,319.8" fill="#0a0af2"/><polygon points="448.1,365.6 446.9,366.1 446.7,365.7 447.0,365.2 447.5,364.9 448.4,365.3" fill="#0a0af2"/><polygon points="444.1,371.3 443.6,371.5 442.8,371.4 442.6,370.6 443.3,370.4 443.9,370.5" fill="#0a0af2"/><polygon points="497.6,319.0 502.5,317.0 505.0,315.8 504.9,320.0 504.1,322.4 500.1,320.9" fill="#0a0af2"/><polygon points="461.8,336.7 461.9,338.8 457.6,340.7 453.3,339.3 455.4,337.1 457.9,334.9" fill="#0a0af2"/><polygon points="489.2,340.0 489.6,339.6 490.1,339.4 490.7,339.7 490.4,340.2 489.7,340.5" fill="#0a0af2"/><polygon points="474.5,327.4 473.5,327.4 472.9,326.7 473.1,326.3 473.9,326.3 474.5,326.7" fill="#0a0af2"/><polygon points="452.4,313.6 452.4,313.2 452.3,312.7 453.5,313.0 454.0,313.5 453.0,314.0" fill="#0a0af2"/><polygon points="453.8,289.2 453.4,292.5 450.1,293.4 448.9,292.3 447.7,290.7 450.3,288.0" fill="#0a0af2"/><polygon points="464.5,300.0 463.6,301.0 462.0,300.6 461.9,299.9 463.0,299.2 464.2,299.1" fill="#0a0af2"/><polygon points="477.7,296.5 477.6,295.2 478.6,294.4 481.1,294.7 480.5,296.1 478.5,297.7" fill="#0a0af2"/><polygon points="483.4,304.4 484.2,305.0 483.6,305.6 482.6,305.8 482.3,305.1 482.8,304.7" fill="#0a0af2"/><polygon points="467.7,291.8 468.1,292.4 467.3,292.9 466.7,292.7 466.2,292.0 467.0,291.4" fill="#0a0af2"/><polygon points="473.9,306.7 475.3,303.8 480.5,305.7 478.6,309.2 476.1,309.7 471.5,308.3" fill="#0a0af2"/><polygon points="464.6,290.1 464.0,291.4 462.9,292.9 460.4,292.1 460.1,290.1 461.6,290.1" fill="#0a0af2"/><polygon points="455.3,309.0 454.1,307.5 455.5,306.7 457.0,307.4 458.4,308.5 456.8,309.9" fill="#0a0af2"/><polygon points="493.1,337.0 493.3,338.9 492.4,339.3 490.7,339.2 489.8,337.7 491.5,337.4" fill="#0a0af2"/><polygon points="474.1,328.2 475.5,329.6 474.8,330.9 472.4,331.1 471.6,329.7 472.2,328.5" fill="#0a0af2"/><polygon points="439.8,360.2 439.0,359.3 439.5,358.5 440.8,358.5 441.6,359.2 441.1,360.0" fill="#0a0af2"/><polygon points="449.5,322.2 450.5,322.8 450.1,323.5 449.4,323.8 449.0,323.4 449.0,323.0" fill="#0a0af2"/><polygon points="483.4,338.8 482.9,338.4 483.5,338.1 484.2,338.1 484.5,338.8 483.8,338.9" fill="#0a0af2"/><polygon points="434.8,299.1 438.6,297.3 440.3,298.8 440.5,301.1 439.6,302.8 436.5,302.0" fill="#0a0af2"/><polygon points="485.4,316.5 485.3,317.7 484.5,318.3 482.7,318.4 482.7,317.3 483.9,317.0" fill="#0a0af2"/><polygon points="464.9,337.6 464.9,338.1 463.6,338.1 463.1,337.4 463.9,337.2 464.7,337.0" fill="#0a0af2"/><polygon points="472.3,303.3 471.4,303.7 470.2,303.4 470.8,302.5 471.8,301.5 473.3,302.3" fill="#0a0af2"/><polygon points="462.0,353.3 461.8,353.0 461.8,352.6 462.6,352.4 463.0,353.0 462.5,353.2" fill="#0a0af2"/><polygon points="503.4,313.6 503.2,314.3 501.4,314.1 500.4,313.9 500.7,312.6 502.3,312.5" fill="#0a0af2"/><polygon points="434.3,346.0 433.9,346.4 433.5,346.4 432.5,346.4 432.8,345.3 434.1,345.3" fill="#0a0af2"/><polygon points="456.2,294.7 458.1,294.5 458.9,295.4 457.3,296.2 456.5,296.6 455.4,295.1" fill="#0a0af2"/><polygon points="485.1,300.9 484.6,299.7 486.4,299.5 487.8,299.9 487.3,300.7 486.4,301.0" fill="#0a0af2"/><polygon points="441.4,325.7 442.5,326.1 442.8,327.3 441.5,328.2 440.7,327.1 440.1,326.6" fill="#0a0af2"/><polygon points="454.4,304.8 454.2,302.9 457.7,302.0 459.1,303.7 458.7,305.9 455.4,305.8" fill="#0a0af2"/><polygon points="458.2,292.5 459.7,292.4 461.9,292.9 461.9,294.7 460.1,295.3 458.5,293.8" fill="#0a0af2"/><polygon points="457.9,351.2 458.5,351.2 459.4,351.2 458.9,351.9 458.2,352.5 457.2,351.8" fill="#0a0af2"/><polygon points="461.8,344.9 462.2,345.2 462.1,345.9 461.2,345.7 460.6,345.2 461.1,345.0" fill="#0a0af2"/><polygon points="488.5,313.5 488.6,313.0 489.4,312.4 490.1,312.8 490.0,313.5 489.7,313.9" fill="#0a0af2"/><polygon points="439.4,324.7 439.1,324.1 439.9,323.0 441.2,323.0 442.1,324.0 440.6,325.1" fill="#0a0af2"/><polygon points="461.4,318.8 460.6,318.8 460.2,318.2 460.4,317.6 461.0,317.7 461.9,318.1" fill="#0a0af2"/><polygon points="479.3,318.5 481.9,320.1 482.9,321.8 479.9,322.8 478.2,321.5 478.6,320.4" fill="#0a0af2"/><polygon points="450.9,311.3 450.5,311.6 449.8,311.1 449.6,310.6 450.4,310.4 451.5,310.5" fill="#0a0af2"/><polygon points="501.5,337.3 501.8,335.8 502.8,335.1 504.3,336.0 503.6,337.3 502.8,338.1" fill="#0a0af2"/><polygon points="486.3,334.6 485.7,334.1 485.4,333.3 486.5,333.0 487.6,333.1 487.5,333.8" fill="#0a0af2"/><polygon points="436.4,355.9 434.2,355.1 433.6,352.9 433.9,350.0 437.6,351.3 438.7,353.9" fill="#0a0af2"/><polygon points="486.1,297.4 486.1,294.6 489.7,295.6 491.2,296.3 491.2,298.7 487.5,298.5" fill="#0a0af2"/><polygon points="486.5,323.6 486.1,323.0 486.7,322.7 487.6,322.5 487.9,323.2 487.3,323.4" fill="#0a0af2"/><polygon points="482.5,312.5 483.2,313.9 482.7,315.0 480.9,314.7 480.7,313.8 480.7,313.1" fill="#0a0af2"/><polygon points="492.0,324.0 491.4,323.3 491.9,322.8 492.4,322.8 493.4,323.5 492.6,324.4" fill="#0a0af2"/><polygon points="433.4,324.4 434.1,324.3 434.5,324.7 434.4,325.1 433.6,325.4 433.4,324.8" fill="#0a0af2"/><polygon points="487.7,344.9 488.6,347.8 488.1,349.3 483.4,350.2 484.3,347.4 484.1,344.3" fill="#0a0af2"/><polygon points="500.7,345.1 502.0,344.7 503.6,345.0 503.6,346.4 503.4,347.5 501.6,346.6" fill="#0a0af2"/><polygon points="471.3,299.7 472.7,299.5 472.9,300.5 472.6,301.0 471.2,301.0 470.4,300.3" fill="#0a0af2"/><polygon points="501.3,326.9 502.9,326.2 504.6,325.7 504.5,327.5 503.4,328.2 501.9,327.6" fill="#0a0af2"/><polygon points="446.5,321.1 446.7,321.8 446.0,321.9 444.9,321.9 445.1,321.3 445.5,320.9" fill="#0a0af2"/><polygon points="439.1,333.0 437.4,333.4 436.1,332.9 436.1,331.2 437.8,331.4 438.9,331.3" fill="#0a0af2"/><polygon points="458.6,350.7 459.2,352.2 456.5,352.6 454.3,352.2 455.8,350.7 456.9,349.8" fill="#0a0af2"/><polygon points="471.7,289.1 472.0,292.3 469.1,292.6 466.4,291.1 465.6,289.9 468.4,286.6" fill="#0a0af2"/><polygon points="466.9,337.3 468.3,337.6 469.1,338.2 468.9,339.0 467.2,339.5 466.1,338.6" fill="#0a0af2"/><polygon points="459.4,292.7 459.3,291.9 460.1,291.8 460.5,292.2 460.4,292.7 459.9,292.8" fill="#0a0af2"/><polygon points="462.7,333.1 462.6,334.1 462.0,334.5 461.3,334.3 461.3,333.6 461.6,332.9" fill="#0a0af2"/><polygon points="444.9,302.2 444.9,305.4 444.0,307.7 440.1,307.7 440.8,305.1 441.6,302.1" fill="#0a0af2"/><polygon points="476.5,327.9 478.5,331.9 475.5,333.6 473.1,333.4 471.3,331.2 474.1,329.1" fill="#0a0af2"/><polygon points="445.2,322.3 446.0,324.2 443.3,324.2 441.9,324.4 441.6,321.6 444.0,321.7" fill="#0a0af2"/><polygon points="478.7,308.0 480.2,307.9 480.3,309.4 479.6,310.9 477.5,310.6 477.4,309.0" fill="#0a0af2"/><polygon points="474.5,309.5 477.9,307.9 482.2,306.0 482.6,309.6 481.4,312.7 478.6,310.9" fill="#0a0af2"/><polygon points="449.4,318.1 452.9,317.2 454.5,319.5 453.8,321.8 452.1,321.4 450.0,320.8" fill="#0a0af2"/><polygon points="441.8,294.1 441.9,293.1 442.6,292.5 443.3,293.3 444.1,294.2 442.8,294.4" fill="#0a0af2"/><polygon points="437.9,362.6 440.4,363.1 441.9,363.4 440.7,365.3 438.7,366.4 437.3,365.3" fill="#0a0af2"/><polygon points="499.7,341.2 497.0,340.0 495.9,338.2 497.0,336.9 499.7,337.7 501.6,338.9" fill="#0a0af2"/><polygon points="480.0,296.9 481.5,299.9 478.0,301.3 475.5,300.0 475.5,297.9 476.9,296.5" fill="#0a0af2"/><polygon points="440.7,328.6 441.1,328.8 440.9,329.5 439.6,329.8 439.6,328.9 439.7,328.0" fill="#0a0af2"/><polygon points="482.4,340.6 481.2,342.7 480.1,342.9 477.6,341.7 478.6,340.1 481.8,338.8" fill="#0a0af2"/><polygon points="439.4,326.5 443.0,328.2 441.5,330.2 440.9,332.3 437.5,330.7 437.3,328.7" fill="#0a0af2"/><polygon points="451.7,295.3 453.9,294.3 455.7,295.0 456.6,296.4 455.6,299.0 452.7,297.6" fill="#0a0af2"/><polygon points="477.9,299.1 481.7,298.5 483.6,300.9 482.2,302.2 479.2,302.1 476.2,301.2" fill="#0a0af2"/><polygon points="448.8,319.3 450.5,318.6 451.3,318.3 452.1,319.1 450.8,320.3 450.2,319.7" fill="#0a0af2"/><polygon points="461.6,303.2 462.0,302.2 463.9,301.5 464.9,302.1 465.2,303.9 463.4,303.9" fill="#0a0af2"/><polygon points="442.9,343.2 442.9,343.9 442.4,344.1 441.6,343.9 441.5,343.2 442.3,342.9" fill="#0a0af2"/><polygon points="444.5,362.9 445.3,364.3 443.9,365.5 441.3,365.6 439.0,364.7 442.2,362.8" fill="#0a0af2"/><polygon points="447.6,351.7 448.3,352.2 449.0,353.2 448.8,354.6 447.1,353.8 445.7,352.8" fill="#0a0af2"/><polygon points="451.8,338.5 449.4,338.8 449.9,336.9 451.0,335.6 452.7,335.4 452.6,337.1" fill="#0a0af2"/><polygon points="464.9,346.6 467.0,346.3 467.3,347.4 467.8,348.2 466.2,349.6 465.3,348.2" fill="#0a0af2"/><polygon points="439.7,360.3 439.2,359.5 440.8,359.3 441.2,359.6 441.1,361.0 440.0,360.8" fill="#0a0af2"/><polygon points="445.2,350.7 443.1,352.8 440.2,353.3 438.8,350.7 438.1,347.6 442.3,347.4" fill="#0a0af2"/><polygon points="472.7,310.0 473.4,309.0 474.7,309.7 475.1,311.1 473.1,311.5 472.4,310.8" fill="#0a0af2"/><polygon points="456.8,331.4 458.2,330.7 459.6,331.0 460.4,331.9 459.2,332.5 457.7,332.3" fill="#0a0af2"/><polygon points="458.4,292.4 459.2,292.2 459.9,292.9 459.0,293.4 458.4,293.4 457.8,293.0" fill="#0a0af2"/><polygon points="503.3,323.7 504.1,322.8 505.4,322.9 506.3,324.1 504.8,324.2 503.6,324.5" fill="#0a0af2"/><polygon points="486.1,294.0 486.2,294.4 485.3,294.7 484.8,294.6 485.0,294.0 485.5,293.6" fill="#0a0af2"/><polygon points="435.6,325.9 434.9,327.2 432.2,326.6 433.2,325.3 434.2,323.7 435.9,324.2" fill="#0a0af2"/><polygon points="509.1,242.5 508.5,242.7 507.3,242.3 507.7,241.5 508.6,241.2 509.2,241.6" fill="#0a0af2"/><polygon points="497.9,234.4 499.6,234.7 500.4,235.3 499.0,236.2 497.6,236.7 497.5,235.7" fill="#0a0af2"/><polygon points="512.1,219.4 511.2,221.0 508.7,221.7 507.5,219.9 508.6,218.9 510.3,218.6" fill="#0a0af2"/><polygon points="492.9,207.9 493.3,208.8 493.6,210.2 491.6,211.0 491.3,209.8 491.3,209.1" fill="#0a0af2"/><polygon points="491.1,207.1 491.8,206.6 492.9,207.1 492.4,207.9 491.4,208.6 490.9,207.9" fill="#0a0af2"/><polygon points="501.4,223.6 500.4,224.0 499.6,223.7 500.1,222.5 500.8,222.7 502.0,223.0" fill="#0a0af2"/><polygon points="502.3,256.2 503.6,254.3 505.7,254.9 507.3,255.5 505.6,257.0 504.5,256.9" fill="#0a0af2"/><polygon points="499.7,237.9 500.3,238.8 499.7,239.3 498.2,239.1 498.1,238.8 498.6,237.6" fill="#0a0af2"/><polygon points="502.3,226.7 502.5,229.0 500.9,228.7 499.5,227.3 500.2,226.4 501.0,224.7" fill="#0a0af2"/><polygon points="496.7,248.1 496.5,247.1 496.5,245.8 498.0,246.2 498.6,246.9 498.6,248.0" fill="#0a0af2"/><polygon points="494.5,217.0 497.1,217.4 496.7,219.4 495.5,221.1 492.9,221.2 492.6,218.2" fill="#0a0af2"/><polygon points="492.0,229.8 493.9,231.1 493.7,232.5 492.3,232.4 490.8,232.1 490.0,230.7" fill="#0a0af2"/><polygon points="500.6,254.0 499.7,255.1 499.1,255.9 497.8,255.6 497.4,254.4 499.0,253.7" fill="#0a0af2"/><polygon points="499.2,214.0 500.1,213.4 501.0,214.6 501.2,215.7 500.1,216.2 498.9,215.2" fill="#0a0af2"/><polygon points="498.4,338.4 498.1,338.2 498.1,337.5 499.2,337.2 499.9,337.6 499.1,338.3" fill="#0a0af2"/><polygon points="498.3,341.9 497.6,341.2 497.4,340.3 498.2,339.9 499.5,340.0 499.8,341.3" fill="#0a0af2"/><polygon points="507.7,360.7 507.1,360.4 506.3,359.8 507.7,359.0 508.8,359.4 509.0,360.7" fill="#0a0af2"/><polygon points="498.3,340.0 497.8,340.1 496.8,339.9 497.6,339.3 498.2,338.9 498.4,339.6" fill="#0a0af2"/><polygon points="499.7,369.4 500.4,369.7 500.8,369.8 500.6,370.4 500.0,370.5 499.7,370.1" fill="#0a0af2"/><polygon points="498.0,345.0 498.3,344.5 499.1,344.0 499.5,344.6 499.6,345.1 498.5,345.4" fill="#0a0af2"/><polygon points="498.4,368.8 498.7,368.7 499.3,368.7 499.8,368.9 499.2,369.3 498.6,369.5" fill="#0a0af2"/><polygon points="506.8,367.8 507.7,367.3 507.9,367.6 508.6,367.9 508.1,368.3 507.3,368.3" fill="#0a0af2"/><path d="M424.4 261.5L422.9 263.3L424.6 263.1L426.9 263.1M437.6 258.4L436.5 256.4L438.6 255.7L437.5 256.5L438.3 255.7M474.3 244.7L477.1 244.5L479.7 243.7L479.8 245.4M378.3 232.6L379.5 231.5L380.9 232.0M354.7 261.7L356.0 264.0L357.8 262.3M402.0 233.7L403.3 232.0L403.8 233.1M435.1 265.1L437.9 263.6L440.2 262.0L442.6 263.2L441.4 262.7M488.2 240.2L489.3 241.5L490.0 239.4L487.7 239.3M436.1 233.2L437.1 230.7L434.3 231.9L436.7 233.2M387.0 227.4L389.4 228.5L388.5 230.2M418.3 247.1L418.0 246.6L416.9 247.5M372.2 234.4L374.4 234.3L373.0 231.8L371.3 233.5M467.9 244.9L466.8 246.1L465.6 246.0M452.9 230.4L452.6 231.2L450.5 231.0L449.7 231.5M396.1 257.8L393.3 259.7L391.5 258.9L389.1 258.3M425.0 269.4L423.4 268.8L422.0 267.9L420.4 266.6M461.6 235.5L461.8 235.0L460.1 236.0L461.1 238.4M468.0 272.7L466.6 270.4L469.5 272.2L467.0 270.4L468.3 272.0M508.1 252.9L506.0 254.9L503.1 253.3M443.2 253.3L441.9 255.3L442.5 254.7L444.9 254.0L444.6 253.4M364.9 232.1L363.5 232.0L363.0 233.4L360.4 235.9L360.5 234.9M396.0 243.0L396.0 245.3L398.5 245.9L401.4 243.9M447.8 274.6L447.4 276.6L446.9 277.5M401.3 234.6L400.2 232.8L398.4 234.8M405.6 233.4L404.8 235.3L403.3 233.5L405.5 235.5L406.0 237.2M420.1 254.3L421.7 254.9L424.5 256.9L423.1 258.7M368.1 270.3L368.6 272.5L369.7 272.9L371.7 275.3L373.7 275.5M457.1 235.3L458.3 235.3L460.0 234.0M455.0 257.4L453.8 259.3L451.6 261.3L453.5 260.4M437.5 272.2L434.9 269.9L432.6 269.9M422.5 273.1L423.2 271.6L421.8 272.9L423.7 271.5L425.5 271.9M417.9 244.3L417.2 244.5L415.3 243.5L415.7 241.1L413.6 241.8M413.0 282.3L414.4 283.4L411.9 284.8L413.8 283.9L412.8 281.7M423.4 282.8L420.5 282.0L422.7 284.1L425.6 284.2M472.6 251.5L473.7 251.7L472.1 250.2L469.8 252.0L471.5 253.6M348.5 267.8L349.7 270.0L351.3 268.7L351.1 270.9L353.9 271.1M420.9 276.7L418.5 276.1L416.2 277.3L415.3 279.2M399.5 248.3L397.4 246.3L398.1 244.9L398.2 244.1L397.7 243.4M361.4 260.8L363.5 258.7L365.7 259.0L368.2 257.5M417.1 224.3L416.2 224.8L415.4 223.9L414.3 222.3M421.0 267.6L421.7 266.0L419.7 266.9L418.1 266.7L419.9 265.3M355.5 241.7L357.7 241.8L355.6 240.7L353.1 238.6M412.8 268.0L413.9 265.7L412.6 265.3L411.6 264.1L412.9 265.0M387.1 249.7L387.0 248.4L388.7 246.9L389.5 246.2L387.1 247.4M475.4 229.8L474.2 231.1L475.4 229.7L478.2 227.3M428.3 275.7L427.3 274.1L425.4 275.2M364.7 252.1L361.7 249.8L364.1 250.3L362.2 251.5M429.7 234.7L430.7 234.1L427.8 232.4L424.9 231.9L424.7 230.9M434.0 269.2L432.3 266.8L433.6 264.8L432.6 264.2M500.2 244.5L502.2 242.7L500.5 243.7L498.8 244.8M418.6 254.7L420.9 253.4L420.6 252.6L418.3 251.1M386.0 247.1L384.4 246.8L385.3 246.5M434.8 243.8L437.3 241.7L434.7 243.2L432.9 241.4L431.0 240.0M443.9 262.1L445.5 262.0L444.0 260.1L443.4 258.8M487.3 248.0L487.6 246.0L488.9 245.2L491.9 245.9M454.1 249.5L456.4 252.0L457.8 251.3M372.1 230.4L373.2 232.8L374.5 232.3L373.5 231.2M401.2 224.0L398.6 223.6L398.3 225.1M434.2 223.6L432.8 222.3L433.4 220.9L431.4 222.3L433.2 224.1M381.4 245.3L380.4 247.1L377.5 249.3L379.0 250.0M474.3 245.7L476.9 247.3L474.7 249.0M383.3 223.4L385.7 221.7L382.8 222.8L382.7 223.0M430.7 253.8L431.0 256.1L433.7 255.5M396.3 268.0L399.1 267.9L398.0 269.9L399.1 269.4M351.4 257.1L348.8 255.0L350.2 257.3L351.1 255.1L350.0 254.1M456.9 242.3L454.7 244.0L457.1 243.0L459.7 242.0L461.6 243.2M379.3 231.8L377.0 233.5L379.2 235.0L381.1 236.2L380.4 238.2M400.5 284.1L400.3 285.6L400.9 285.6L398.5 286.1L395.7 285.2M470.8 235.5L468.0 233.7L470.5 234.5L472.9 233.3L470.9 234.4M462.0 244.6L459.5 242.6L462.0 242.2L462.7 244.6M440.5 264.4L438.6 265.8L440.4 263.3L438.7 264.2L437.3 265.0M377.3 257.9L379.8 257.9L378.9 259.5M345.2 266.6L345.0 268.4L345.5 267.6L344.2 268.5L346.3 268.0M505.1 243.5L506.8 243.0L507.6 242.9M500.0 261.8L500.7 263.6L502.2 261.9L499.4 261.9M380.4 266.2L382.2 268.3L382.9 269.3L383.3 269.4L385.6 270.4M356.5 262.2L359.2 262.9L360.5 260.8M385.0 223.5L387.4 224.2L390.2 226.5L389.9 227.4L391.8 228.5M459.1 261.5L458.8 263.9L457.1 261.7L459.9 263.0M411.2 284.2L412.4 285.3L413.0 287.4L414.6 286.9M432.0 284.7L432.5 284.3L431.0 286.6L428.2 285.4L429.2 286.4M480.9 230.0L480.7 229.3L483.6 228.4L482.0 230.0L483.8 230.0M452.7 244.1L450.4 242.7L447.8 241.3L448.5 240.0M374.3 225.3L376.2 227.6L376.5 225.3M426.6 251.4L429.6 252.2L432.0 254.0M374.6 257.4L375.2 255.5L376.2 256.6L378.0 256.9M439.3 223.6L439.5 223.1L436.6 221.8L433.7 221.9M372.4 227.7L370.9 225.8L371.5 224.2L373.0 225.3L370.7 226.2M465.4 234.3L464.6 234.0L465.5 235.4M474.7 252.4L472.2 251.5L469.7 249.3M454.0 276.0L454.8 275.4L455.3 274.6L452.7 274.4M425.3 252.1L423.9 250.6L423.8 250.3L421.1 252.8L421.7 254.9M503.3 255.0L505.6 256.6L507.3 256.9L505.9 257.0M393.6 234.4L393.6 236.4L396.2 237.4L396.9 235.9M456.1 241.9L457.9 243.2L457.3 242.6L458.9 244.4L459.4 244.4M388.6 239.5L391.5 239.6L389.6 241.0M364.6 269.5L365.4 267.1L362.6 269.4L359.7 269.5L360.0 268.0M391.4 219.2L392.6 218.3L393.3 216.7L393.7 216.3L395.2 218.4M353.7 243.1L350.9 241.2L352.6 243.0M464.7 253.2L462.9 252.8L462.6 255.3M428.8 248.3L428.4 247.5L427.7 248.0L424.9 248.8L423.0 247.2M371.6 245.3L370.5 243.6L368.5 245.6M445.1 245.8L442.1 245.0L442.0 244.2M409.0 219.1L406.2 220.8L403.6 219.1L402.1 219.1L399.4 217.5M387.5 232.0L385.6 232.1L384.2 232.9L383.1 233.6L380.9 235.0M404.4 235.4L406.3 235.3L408.6 237.3M438.8 245.7L440.4 247.2L440.5 245.0M424.4 272.5L427.1 274.4L428.6 273.0L427.3 270.9L428.6 271.4M407.0 219.0L409.8 218.8L407.6 217.6L405.1 216.1M494.6 232.0L495.8 233.9L496.7 234.9L498.1 234.5L499.9 235.3M373.7 261.3L370.9 259.8L368.2 262.2L367.0 262.4L369.4 264.7M356.1 252.9L356.9 251.7L356.7 251.2L358.9 249.6L356.7 252.0M369.8 253.3L368.0 255.4L369.1 255.6M485.6 263.9L486.2 265.5L486.0 267.7L484.6 265.9L487.1 265.1M364.8 257.8L364.1 259.2L366.7 257.3L367.2 256.5M369.6 233.5L370.6 235.9L370.1 236.9L372.7 235.6L370.8 235.3M341.5 265.9L340.1 263.4L339.6 263.6L338.1 263.6M420.3 285.6L420.4 283.3L418.2 284.6L418.7 286.6M386.7 243.7L385.7 244.9L383.2 244.1M453.8 245.4L456.7 246.2L456.4 248.6L457.8 250.2M388.6 241.9L387.3 242.6L387.4 242.1L385.6 239.8M392.8 219.0L390.1 220.7L391.5 222.2L392.4 223.6M371.5 255.9L371.5 254.1L372.3 253.1M470.7 247.8L468.9 246.1L467.0 247.8L464.2 250.0M493.0 241.9L490.3 244.2L488.6 242.8L489.5 242.8M393.0 258.3L390.8 257.2L391.8 255.5M356.5 236.0L357.8 236.5L360.7 237.7L362.4 237.2L363.9 237.7M365.0 241.9L363.3 244.2L360.5 245.4M459.6 230.7L458.7 232.3L456.7 232.7M398.9 281.7L397.1 283.3L396.5 281.7L396.8 282.2L394.9 284.4M418.9 236.0L419.1 234.5L418.8 236.3L417.8 235.9L419.7 237.5M461.6 253.2L463.5 250.9L465.4 249.6L466.7 248.0M463.5 230.4L464.0 228.0L464.9 228.7L466.7 229.6L468.3 228.3M492.6 237.4L493.1 238.4L492.1 236.7M431.0 250.4L431.1 250.6L429.5 251.0M477.2 233.8L475.2 233.2L476.7 230.8M494.6 265.3L493.5 267.3L493.4 267.5L491.7 266.5L494.7 264.2M440.6 250.8L443.5 249.5L443.0 248.4L442.0 248.9M380.6 235.4L380.4 236.5L378.5 238.6L376.7 237.4L376.6 238.8M405.2 223.9L407.8 223.7L407.5 226.0L409.7 223.8M480.3 267.0L479.5 267.5L477.7 265.5L478.8 267.6L479.0 268.1M503.2 237.4L500.3 238.8L501.0 237.4M489.4 261.1L489.2 262.7L491.8 263.4L489.9 262.3M409.6 236.9L410.2 236.6L410.5 238.7M371.1 268.3L370.4 269.7L372.3 270.0M473.3 244.8L473.8 247.2L474.4 245.1M432.7 238.8L431.7 236.3L430.9 234.3L433.5 233.0L433.7 234.8M411.5 229.8L409.8 229.1L407.4 229.2M493.1 243.2L494.9 243.0L497.3 243.6L499.3 244.0L497.0 244.9M405.1 265.0L405.9 264.7L405.0 265.7L402.7 266.7L402.6 264.9M420.1 262.3L417.9 262.5L420.2 263.8L417.7 264.4M414.4 277.1L414.5 278.9L416.9 281.0L417.2 282.7L418.0 281.7M455.7 230.7L453.0 233.0L451.2 232.5L448.9 232.7L448.6 234.5M398.4 238.1L400.7 235.6L403.0 236.0M349.4 244.9L350.1 243.8L352.0 243.2L352.9 241.3L352.9 242.2M338.0 256.9L335.8 258.8L337.1 258.4L339.9 257.9L342.7 255.5M362.9 229.0L363.8 228.1L366.1 229.4L364.8 228.7M467.4 235.9L468.2 236.6L468.3 235.6L468.8 237.4M347.2 244.8L346.3 246.5L346.2 244.1M438.2 239.5L435.7 239.9L437.4 238.8L438.3 236.5L441.1 234.7M385.7 277.8L383.7 278.4L386.3 277.8L389.0 279.6L389.7 281.2M482.2 248.1L483.9 249.2L483.8 246.7L485.8 247.1M449.4 271.4L450.0 271.0L447.9 273.4L450.5 272.6M378.8 246.9L379.1 247.8L381.4 247.6L378.9 248.5M405.8 251.0L407.1 253.4L405.0 251.7L407.0 252.2L408.5 253.6M497.1 243.0L499.7 245.1L497.7 243.2L498.4 242.5L501.3 240.9M406.4 224.8L405.3 224.5L403.0 223.3L404.6 221.8L405.3 223.6M397.3 241.2L395.6 239.2L396.6 240.7M466.5 234.8L468.3 234.7L468.5 234.5L470.7 233.8M450.8 254.0L450.3 256.2L452.4 258.5L452.7 257.6" fill="none" stroke="#1a2ae0" stroke-width="0.550" opacity="0.85"/><path d="M454.0 318.2L453.6 315.8L455.5 313.6L454.1 314.5L455.2 312.4M495.5 326.7L495.7 329.0L496.3 329.4M465.5 348.7L464.1 347.0L465.1 349.0L467.5 349.9M473.9 291.9L473.3 293.7L476.3 291.7L474.7 290.8M441.2 364.8L438.4 363.5L437.7 364.0M488.0 331.9L487.3 330.0L486.0 330.1L486.7 329.8M445.3 305.2L447.8 305.5L449.3 303.8L448.7 302.9L449.3 302.4M445.4 309.8L443.1 311.4L444.3 312.6M478.1 302.8L476.1 301.4L478.0 302.9L476.0 303.7L475.4 305.2M458.2 312.8L458.2 313.3L457.6 315.6L459.7 317.2L457.1 315.7M481.0 314.5L483.4 314.7L481.5 313.7M457.0 343.9L454.3 345.4L455.3 347.4M504.3 301.0L502.6 302.7L501.6 303.2M471.2 344.5L469.9 344.2L467.6 345.1L469.0 343.1L469.8 344.1M470.8 314.7L471.3 314.5L473.6 316.9M475.5 345.0L477.3 346.4L475.4 344.3L477.5 345.3L476.2 346.3M463.4 301.4L463.5 300.6L465.4 300.7L467.4 302.4L464.8 303.4M435.3 288.0L437.5 286.8L437.4 285.8L436.2 287.5M442.5 354.7L443.2 353.6L442.3 352.4L444.7 352.7M491.1 329.2L491.2 330.8L492.6 330.3L494.1 332.4M438.8 287.8L441.6 289.6L444.4 291.4L441.8 293.3M455.7 361.2L457.2 360.7L455.5 359.9M461.3 321.3L463.9 319.1L462.9 321.5L465.8 323.6M437.8 326.0L436.8 325.4L438.3 327.5L436.9 326.9M431.3 347.9L431.6 350.3L434.2 352.0L431.9 349.7L431.7 347.4M438.7 321.2L436.6 322.1L438.3 321.6L440.7 321.1M446.4 333.5L444.1 336.0L441.5 335.0M437.9 372.3L435.4 371.8L433.0 371.4L435.4 369.9M462.9 331.3L460.3 329.2L460.0 331.3L462.7 333.6L460.1 335.6M459.4 328.6L458.2 330.6L455.7 329.8L453.0 327.4M480.1 294.1L479.1 291.8L476.5 294.3L475.0 292.1L472.4 293.4M458.9 337.7L456.3 337.2L456.9 336.5L458.0 338.5M473.7 312.0L474.7 311.5L476.3 312.2L474.7 310.8M486.7 330.9L487.8 329.2L488.8 328.2L491.2 328.2M482.4 311.6L481.1 313.5L482.7 312.4L479.8 311.6M436.6 320.0L437.2 321.2L437.1 322.3L436.5 322.4M438.6 293.6L440.0 293.0L442.5 293.8M484.4 330.3L486.2 328.9L487.1 330.4M494.8 350.2L493.7 350.6L492.0 349.5L494.2 349.6L493.8 350.8M456.8 288.5L459.1 290.0L460.3 290.6L458.8 288.9M442.8 352.9L443.6 353.5L446.6 353.9L446.4 355.1M455.1 305.9L457.9 307.0L458.6 305.7L460.2 307.2L460.9 306.8M476.7 286.4L479.3 287.2L477.5 285.8L479.4 284.5M502.5 310.3L505.0 309.3L503.8 311.2M432.9 315.7L435.4 314.3L436.3 315.0M464.5 316.5L465.3 314.0L464.9 315.7L464.1 313.7L467.0 315.2M435.0 346.7L432.0 348.4L434.9 349.6M506.6 342.2L506.8 342.0L508.9 343.6L511.7 343.0L513.5 345.3M490.0 301.4L491.9 302.8L491.1 303.6M466.2 325.0L465.4 324.0L467.8 323.2M476.7 343.4L476.7 342.1L477.5 340.5M461.6 348.8L463.3 350.3L465.3 350.9M476.2 300.5L478.1 300.9L478.3 298.8L475.5 298.0M503.6 316.2L506.2 315.1L506.0 316.8L506.9 317.2M443.3 296.1L444.3 297.3L444.0 298.9L446.4 301.3L444.3 299.3M451.3 315.5L452.7 315.2L454.7 313.3L457.5 311.8M477.7 337.2L476.6 338.3L475.3 336.6L476.7 336.7L479.6 335.2M444.9 285.4L445.5 287.1L446.7 288.2L447.6 288.4L445.7 288.7M435.5 301.3L436.6 303.1L436.5 301.1L434.1 301.5L433.4 301.9M440.3 347.3L439.2 349.1L441.3 350.3L442.3 352.7M488.7 302.8L488.1 301.1L489.0 299.0L489.5 296.7M476.7 350.6L475.2 352.4L476.7 351.7L475.1 353.3L474.8 352.7M456.2 303.1L454.3 302.4L454.6 300.4M436.2 365.6L438.2 365.2L438.5 363.3L438.0 362.7M481.1 338.9L483.3 340.6L481.1 342.6M467.9 305.0L469.3 303.6L468.0 302.0M459.9 331.8L461.2 333.5L464.0 332.4L465.8 334.1M487.9 306.1L486.6 306.0L484.8 303.6M430.6 323.6L429.6 324.2L429.8 326.4M439.6 334.9L440.5 335.3L439.1 337.6M486.9 307.8L488.8 307.3L488.8 309.1L487.4 309.4M467.9 324.1L469.4 325.6L470.7 324.3L468.3 325.1M440.1 363.4L437.6 361.5L438.6 362.3M499.9 341.3L499.1 343.6L497.8 343.1M441.0 352.9L441.6 355.3L443.5 357.1L440.6 356.2M468.7 355.8L466.2 356.5L466.1 357.4L465.5 355.3L464.0 357.6M436.3 373.3L436.2 371.5L438.6 370.8L436.9 368.9M454.0 361.0L451.7 362.0L450.4 363.4M441.5 368.2L443.9 366.6L446.7 365.4M479.0 288.7L476.9 286.6L478.1 284.3L476.7 285.6M441.9 376.4L443.8 376.9L446.2 374.6L444.7 373.9M458.4 319.8L455.9 321.6L457.1 321.7M459.7 313.6L461.0 314.1L462.5 315.2L464.1 316.8M494.9 348.9L493.7 347.2L493.5 348.3L492.1 347.6M447.2 324.2L445.9 325.9L446.2 326.8M460.9 318.7L459.1 319.3L458.2 317.5M472.6 314.0L472.3 312.4L471.2 313.5L472.3 313.3M437.7 299.0L439.3 296.8L441.9 297.0L444.3 299.1M438.8 291.6L438.0 289.4L437.1 291.7M439.3 310.3L437.6 310.9L439.0 309.3L437.6 308.5L437.3 308.9M470.7 347.8L469.7 349.6L468.5 351.6L469.1 353.2M432.2 373.2L434.9 373.6L431.9 376.1M499.8 325.4L500.0 326.2L498.8 324.6L498.8 323.0L501.5 322.6M476.6 339.4L474.8 337.1L475.5 338.0L478.3 339.6M448.3 339.5L446.4 341.2L445.0 339.1L443.8 338.6L444.9 339.7M470.8 334.1L471.7 335.1L470.2 335.4L467.8 333.6L467.2 331.3M474.6 349.5L472.6 348.7L474.6 350.4L476.4 349.5M502.8 325.5L504.0 325.2L502.5 325.9L499.9 324.3M492.5 316.3L492.7 317.7L492.7 318.3L494.5 316.4M440.5 372.9L438.3 375.4L435.7 373.8L437.7 374.7L440.7 375.7M495.9 318.2L495.8 315.7L494.6 315.4L496.8 317.5L499.8 317.4M437.2 290.6L434.6 291.8L431.9 294.2L429.2 294.7M484.0 306.8L481.3 304.9L480.8 302.6L480.5 302.1L483.0 304.3M505.0 317.2L506.4 317.6L506.4 318.1M480.4 313.7L481.5 312.4L479.2 312.7M444.2 313.9L445.8 313.3L445.0 314.0L446.9 312.8L449.8 310.4M449.4 321.6L446.7 324.0L447.0 323.3L446.3 321.5M471.5 334.0L472.6 335.3L471.4 333.3L473.0 332.4L474.5 330.1M475.0 350.0L474.8 349.3L472.8 350.9L475.0 351.4L477.0 351.3M505.1 355.1L505.9 355.0L503.7 356.2M454.5 318.0L454.0 317.3L453.0 316.5M452.6 323.9L450.2 322.5L452.2 323.0M436.7 318.0L438.9 320.2L439.8 321.1L438.5 321.6L435.6 323.7M500.4 322.8L500.6 322.1L500.4 320.6M459.8 285.8L462.1 284.0L461.5 283.0M472.8 323.4L472.0 323.5L470.4 321.5L467.8 319.9M442.5 302.7L442.0 304.7L443.8 303.0L444.6 302.8L445.7 301.1M491.8 294.8L492.3 294.1L490.2 292.9L488.5 291.2M486.3 305.0L484.0 302.8L484.6 302.8L486.4 304.9M447.3 339.2L446.0 341.4L448.4 339.3L449.2 338.6L448.9 339.9M434.5 315.3L436.0 314.2L433.2 313.0M457.5 319.4L457.9 319.1L455.4 319.3L455.3 318.1M446.4 293.1L448.1 292.9L448.2 291.8L447.3 292.8M498.9 292.9L497.6 294.0L498.6 293.0L500.5 295.1L501.3 296.5M458.0 293.5L456.3 295.5L458.5 295.8M440.7 309.4L442.2 308.7L444.6 310.1M426.4 373.0L423.9 372.8L426.5 371.9L429.4 370.5L430.0 371.4M443.1 306.1L440.5 304.8L439.3 303.1L437.7 301.7M472.8 330.8L471.1 333.2L472.5 333.1L472.7 332.5M464.8 344.2L463.6 346.5L461.9 345.6L463.7 347.4L465.4 345.0M428.2 362.4L429.8 362.5L430.9 361.0L433.9 360.5M441.5 370.5L439.3 369.0L436.3 367.7L436.7 366.5M508.1 334.1L506.3 336.0L503.8 337.8L502.1 336.0L499.6 334.1M475.0 347.3L477.1 347.3L476.7 344.8L474.6 343.0L475.9 341.8M451.6 288.2L448.8 288.7L446.8 286.7L443.9 287.2L441.3 286.0M448.1 323.4L447.8 325.0L448.7 327.4L447.9 328.3L450.1 325.8M485.3 321.8L484.6 322.7L487.5 322.7L488.6 322.1M469.9 298.0L470.0 297.7L470.1 295.6L468.9 296.8L468.9 298.7M501.4 297.5L500.7 297.3L503.0 299.0L501.9 300.7L499.7 302.2M473.9 291.7L474.4 289.8L471.5 289.1L472.0 286.8L470.1 289.1M469.5 307.1L469.0 305.0L470.9 302.5L470.0 300.6M461.9 344.1L464.9 342.5L465.4 341.9M492.5 340.7L493.2 340.2L490.8 341.0L489.5 343.3L491.5 341.5M449.6 327.0L451.6 328.6L448.9 329.6L448.2 331.0L449.8 328.7M441.7 349.8L441.1 350.2L442.3 352.2L441.8 351.0M504.4 345.3L505.6 344.2L503.7 345.9L502.3 345.8L500.1 343.8M426.5 366.4L425.7 364.7L426.0 364.5L425.5 366.3M495.3 335.3L494.2 333.3L493.6 334.4M471.2 294.4L469.2 294.6L471.3 294.2L469.0 293.8M468.9 327.5L471.6 325.7L471.4 323.6L470.0 324.6" fill="none" stroke="#1a2ae0" stroke-width="0.550" opacity="0.85"/><path d="M512.5 263.6L514.0 264.3L511.7 265.4L514.5 263.7M490.1 249.7L491.8 248.4L492.3 249.7M508.7 295.4L510.6 297.7L512.9 297.3M508.6 209.9L511.2 209.2L512.9 211.3L513.2 210.6L510.5 211.3M499.6 280.9L500.6 283.1L498.4 282.2M496.1 279.0L496.2 279.0L497.5 277.7M503.6 268.1L506.3 267.9L505.4 267.7M490.4 247.8L491.9 249.1L489.7 248.8M512.3 227.6L513.2 225.4L514.1 224.2M508.6 270.2L508.7 269.9L507.1 271.4L505.8 273.2M513.8 215.9L512.7 214.2L510.2 213.3L508.4 214.0L506.0 215.2M503.8 292.4L502.0 290.5L503.5 290.5L504.1 292.1L506.1 293.9M494.8 214.3L491.9 214.7L493.3 212.6L495.9 212.0M516.2 284.2L515.4 284.7L513.9 285.4L515.0 285.1M512.7 206.9L513.2 206.5L514.4 204.8L514.3 206.0M495.0 236.9L494.9 238.6L496.5 240.0M495.7 213.3L494.7 213.6L493.1 216.0L490.2 216.3L493.2 216.7M501.2 250.4L499.1 249.3L496.6 249.8M494.1 247.1L491.3 249.2L492.6 247.4L493.7 247.5L496.0 246.3M512.9 270.9L514.2 273.3L514.5 273.1M500.5 266.9L501.0 267.7L502.4 267.9L503.0 270.0M510.3 282.8L508.9 284.8L511.6 284.0L510.6 284.3M492.7 210.3L491.9 210.4L491.6 210.5L491.7 212.5M515.1 245.2L515.4 247.1L512.9 245.4L513.4 243.6M511.0 221.8L513.5 224.2L515.6 224.8L515.1 224.4L515.0 223.2M496.2 230.9L493.3 231.7L495.0 229.3M510.1 231.3L510.5 231.1L508.0 233.2L509.1 231.8L508.0 229.7M510.8 237.4L509.9 237.3L509.0 235.4M490.3 242.7L492.9 241.8L493.7 240.2L496.0 238.1L497.9 236.5M495.2 251.8L492.4 254.2L491.3 255.0M497.5 266.7L497.9 266.2L498.8 265.3M518.6 287.4L518.8 285.8L517.4 284.2L515.0 282.9L514.1 284.4M505.8 220.1L508.7 222.2L511.0 220.6L508.7 222.0M504.1 246.6L501.1 247.2L500.2 247.5L498.9 245.8M496.8 211.4L499.5 210.5L498.2 209.0L497.0 208.1L497.9 207.1M501.2 210.2L500.5 212.0L501.6 210.1M492.5 255.8L489.5 257.2L490.5 256.2L490.6 257.3L489.1 259.3M515.1 232.7L515.1 233.6L515.4 235.9L513.8 237.3M503.3 293.2L505.4 291.7L506.8 290.8M499.7 232.8L502.4 230.4L504.2 232.2L506.7 233.0" fill="none" stroke="#1a2ae0" stroke-width="0.550" opacity="0.85"/></g><polygon points="287.5,290 286.5,299 292,308.7 310,334.8 323,353.5 367.8,388 410.7,395.5 438.7,400 442.5,398 451.8,376.8 483.8,358.6 525,364 557.5,288.6 554.5,263.4 550.7,231.6 543.3,199.9 539.5,193.3 496.6,193.3 448,181.2 420,183 374,189.8 345,204 316.7,223.9 300,250 289.8,272.4" fill="none" stroke="#0a0a0a" stroke-width="0.900"/><line x1="230" y1="309.200" x2="782" y2="228.800" stroke="#202020" stroke-width="3.200"/><line x1="230" y1="309.200" x2="782" y2="228.800" stroke="#ffffff" stroke-width="1.800"/><circle cx="224" cy="310" r="6.500" fill="#fff" stroke="#e81010" stroke-width="1.600"/><text x="224" y="313.800" font-size="10.500" text-anchor="middle" fill="#111">A</text><circle cx="789" cy="228" r="6.500" fill="#fff" stroke="#1a6ae8" stroke-width="1.600"/><text x="789" y="231.800" font-size="10.500" text-anchor="middle" fill="#111">B</text><rect x="415.5" y="391" width="295.2" height="9" fill="none" stroke="#e8b0d0" stroke-width="0.800"/><rect x="415.5" y="391.500" width="36.9" height="4" fill="rgba(255,255,255,0.78)"/><rect x="415.5" y="395.500" width="36.9" height="4" fill="rgba(20,40,30,0.8)"/><rect x="452.4" y="391.500" width="36.9" height="4" fill="rgba(20,40,30,0.8)"/><rect x="452.4" y="395.500" width="36.9" height="4" fill="rgba(255,255,255,0.78)"/><rect x="489.3" y="391.500" width="36.9" height="4" fill="rgba(255,255,255,0.78)"/><rect x="489.3" y="395.500" width="36.9" height="4" fill="rgba(20,40,30,0.8)"/><rect x="526.2" y="391.500" width="36.9" height="4" fill="rgba(20,40,30,0.8)"/><rect x="526.2" y="395.500" width="36.9" height="4" fill="rgba(255,255,255,0.78)"/><rect x="563.1" y="391.500" width="36.9" height="4" fill="rgba(255,255,255,0.78)"/><rect x="563.1" y="395.500" width="36.9" height="4" fill="rgba(20,40,30,0.8)"/><rect x="600.0" y="391.500" width="36.9" height="4" fill="rgba(20,40,30,0.8)"/><rect x="600.0" y="395.500" width="36.9" height="4" fill="rgba(255,255,255,0.78)"/><rect x="636.9" y="391.500" width="36.9" height="4" fill="rgba(255,255,255,0.78)"/><rect x="636.9" y="395.500" width="36.9" height="4" fill="rgba(20,40,30,0.8)"/><rect x="673.8" y="391.500" width="36.9" height="4" fill="rgba(20,40,30,0.8)"/><rect x="673.8" y="395.500" width="36.9" height="4" fill="rgba(255,255,255,0.78)"/><text x="415.5" y="390" font-size="9.500" text-anchor="middle" fill="#f3d3e6">0</text><text x="452.4" y="390" font-size="9.500" text-anchor="middle" fill="#f3d3e6">50</text><text x="489.3" y="390" font-size="9.500" text-anchor="middle" fill="#f3d3e6">100</text><text x="526.2" y="390" font-size="9.500" text-anchor="middle" fill="#f3d3e6">150</text><text x="563.1" y="390" font-size="9.500" text-anchor="middle" fill="#f3d3e6">200</text><text x="600.0" y="390" font-size="9.500" text-anchor="middle" fill="#f3d3e6">250</text><text x="636.9" y="390" font-size="9.500" text-anchor="middle" fill="#f3d3e6">300</text><text x="673.8" y="390" font-size="9.500" text-anchor="middle" fill="#f3d3e6">350</text><text x="710.7" y="390" font-size="9.500" text-anchor="middle" fill="#f3d3e6">400</text><text x="155.500" y="416.800" font-family="Liberation Mono" font-size="6.500" font-weight="bold" fill="#222" textLength="68" lengthAdjust="spacingAndGlyphs">909 fps | 1.100 ms/f</text><rect x="671" y="411.500" width="305" height="7.500" fill="rgba(170,215,175,0.75)"/><text x="674" y="417.500" font-family="Liberation Mono" font-size="6.500" font-weight="bold" fill="#222" textLength="300" lengthAdjust="spacingAndGlyphs">NVIDIA Corporation NVIDIA GeForce RTX 2070/PCIe/SSE2 | OpenGL v4.6.0 NVIDIA 471.68</text></svg><svg class="a" style="left:900px;top:54px" width="74.800" height="75" viewBox="900 54 74.800 75"><defs><radialGradient id="sun" cx="0.6" cy="0.35" r="0.7"><stop offset="0" stop-color="#ffe84a"/><stop offset="1" stop-color="#f6c000"/></radialGradient></defs><polygon points="986.0,58.0 979.7,60.7 984.2,65.8 977.4,65.5 979.2,72.1 973.2,68.8 972.0,75.5 968.0,70.0 964.0,75.5 962.8,68.8 956.8,72.1 958.6,65.5 951.8,65.8 956.3,60.7 950.0,58.0 956.3,55.3 951.8,50.2 958.6,50.5 956.8,43.9 962.8,47.2 964.0,40.5 968.0,46.0 972.0,40.5 973.2,47.2 979.2,43.9 977.4,50.5 984.2,50.2 979.7,55.3" fill="#f8d020"/><circle cx="968" cy="58" r="12.500" fill="url(#sun)"/><text x="928.500" y="66.500" font-size="9" font-weight="bold" text-anchor="middle" fill="#000">Y</text><polygon points="924.500,69.500 935,67 933.500,80" fill="#7ec820"/><polygon points="931,68 935,67 933.500,80" fill="#4f9010"/><polygon points="948,89.500 959.500,81.500 962.500,91.500" fill="#e03a08"/><polygon points="948,89.500 962.500,91.500 955,90" fill="#a02000"/><text x="966.500" y="89" font-size="9" font-weight="bold" text-anchor="middle" fill="#000">X</text><polygon points="910,94.500 924,96 912.500,104" fill="#3c3c3c"/><polygon points="939.500,105.500 947.500,116.500 937.500,118.500" fill="#4a4a4a"/><g transform="rotate(-14 936 93)"><rect x="927.500" y="84.500" width="17" height="17" fill="#c9c9c9"/></g><circle cx="936" cy="93" r="5.800" fill="#1c2a4e"/><text x="936" y="96" font-size="8" font-weight="bold" text-anchor="middle" fill="#f3dcb8">Z</text></svg>
<div class="a" style="left:151px;top:424px;width:826px;height:22px;border:1px solid #c9ccd3;border-radius:2px;background:#e9ebee"></div>
<div class="t " style="left:153px;top:428px;font-size:9.5px;transform:scaleX(0.921);">(2,775.64 | 1,309.60 | 776.99)</div>
<div class="btn" style="left:946px;top:426px;width:29px;height:17px"></div>
<svg class="a" style="left:949px;top:427px" width="16" height="16" viewBox="0 0 16 16">
<circle cx="7" cy="7" r="5.500" fill="#7fb3e6" stroke="#5a7fa8" stroke-width="0.8"/>
<path d="M4 3.500 q3-2 5 0 q1 2-1 3 q-3 0-3 2 q-2-2-1-5z" fill="#7cc04a"/>
<ellipse cx="10.500" cy="11" rx="4" ry="2.600" fill="#fff" stroke="#2d3a5c" stroke-width="1"/>
<circle cx="10.500" cy="11" r="1.300" fill="#2d3a5c"/>
</svg>
<div class="a" style="left:966px;top:433px;width:0;height:0;border-left:3px solid transparent;border-right:3px solid transparent;border-top:3px solid #7b7e8a"></div>
<div class="a" style="left:151px;top:451px;width:823px;height:14px;background:#dcdee2"></div>
<div class="t " style="left:155px;top:451px;font-size:9.5px;font-weight:bold;transform:scaleX(0.902);color:#50557a">Cross Section</div>
<div class="a" style="left:155px;top:468px;width:818px;height:21px;border:1px solid #cfd2d8;border-radius:2px;background:#ebedf0"></div>
<div class="btn" style="left:158px;top:470px;width:17px;height:17px"></div>
<svg class="a" style="left:160px;top:472px" width="13" height="13" viewBox="0 0 13 13">
<defs><linearGradient id="bl" x1="0" y1="0" x2="0" y2="1"><stop offset="0" stop-color="#b9d8f6"/><stop offset="1" stop-color="#3f86d4"/></linearGradient></defs>
<circle cx="6.500" cy="6.500" r="5.800" fill="url(#bl)" stroke="#3f78b8" stroke-width="0.9"/>
<rect x="3.200" y="5.200" width="6.600" height="2.600" rx="0.5" fill="#fff" stroke="#3a6fae" stroke-width="0.6"/>
</svg>
<div class="t " style="left:823px;top:473px;font-size:9.5px;transform:scaleX(0.853);">Step Size</div>
<div class="a" style="left:861px;top:470px;width:66px;height:16px;border:1px solid #b9bcc5;background:#fff"></div>
<div class="t " style="left:903px;top:472px;font-size:9.5px;transform:scaleX(0.729);">10</div>
<div class="a" style="left:917px;top:473px;width:0;height:0;border-left:3px solid transparent;border-right:3px solid transparent;border-bottom:3px solid #111"></div>
<div class="a" style="left:917px;top:480px;width:0;height:0;border-left:3px solid transparent;border-right:3px solid transparent;border-top:3px solid #111"></div>
<div class="btn" style="left:930px;top:470px;width:18px;height:17px"></div>
<div class="btn" style="left:951px;top:470px;width:19px;height:17px"></div>
<svg class="a" style="left:933px;top:472px" width="12" height="13" viewBox="0 0 12 13"><path d="M6 1 L11 6.500 H8.300 V12 H3.700 V6.500 H1z" fill="#9ccbf2" stroke="#3f7fc4" stroke-width="1"/></svg>
<svg class="a" style="left:954.500px;top:472px" width="12" height="13" viewBox="0 0 12 13"><path d="M6 12 L11 6.500 H8.300 V1 H3.700 V6.500 H1z" fill="#9ccbf2" stroke="#3f7fc4" stroke-width="1"/></svg>
<div class="a" style="left:149px;top:448px;width:826.200px;height:43px;border:2px solid #f81850;border-radius:3px"></div>
<div class="a" style="left:152px;top:493px;width:824px;height:176px;border:1px solid #d2d5db;border-top:none;background:#e9ebee"></div>
<div class="a" style="left:156px;top:494px;width:815px;height:172px;border:1px solid #c9ccd3;background:#fff"></div>
<svg class="a" style="left:0;top:0" width="1200" height="696" viewBox="0 0 1200 696"><line x1="208" x2="956" y1="527.2" y2="527.2" stroke="#d9d9d9" stroke-width="1"/><line x1="208" x2="956" y1="571.2" y2="571.2" stroke="#d9d9d9" stroke-width="1"/><line x1="208" x2="956" y1="615.2" y2="615.2" stroke="#d9d9d9" stroke-width="1"/><polygon points="304,574 486,574.500 490,582.500 313,582.500 307,577" fill="#3aa62f" stroke="#1d5a14" stroke-width="0.8"/><polygon points="486,574.500 548,574 556,576 566,580.500 570,582.500 490,582.500" fill="#0a14f0" stroke="#0a0a8a" stroke-width="0.6"/><polyline points="304,573.800 486,574 545.500,573.800 556,577 568.400,582.200 620.700,582.500 629,591.300" fill="none" stroke="#0c5a20" stroke-width="1.600" stroke-linejoin="round"/><polyline points="304,574 420,574 470,574.600 486,575" fill="none" stroke="#6a2a10" stroke-width="0.700"/><polygon points="566,582 620.500,582.500 628.500,591.400 594,591.400 590,585.500 530,585.500 528,582.500" fill="#3aa62f" stroke="#16420f" stroke-width="1"/><polygon points="530,585.500 590,585.500 594,591.400 530,591.400" fill="#f29a00" stroke="#3a2a10" stroke-width="0.8"/><polyline points="313,582.500 527,582.500" fill="none" stroke="#3a0a5a" stroke-width="1.300"/><polyline points="304,574.500 308.500,578 318.600,591.400 594,591.400" fill="none" stroke="#ff0000" stroke-width="1.300"/><polyline points="525,582.500 526.500,586 528,589 531,590.500" fill="none" stroke="#ff00ff" stroke-width="1.300"/><polyline points="284,558.600 286,561 288,562.500 291,566 294,570 297,572.500 300,573.500 304,573.700" fill="none" stroke="#2a0606" stroke-width="1.600"/><polyline points="304,574 308,577.500 313,582.500" fill="none" stroke="#5a1010" stroke-width="1.200"/><polyline points="628,591.400 640,592 700,592.200 760,591.800 820,592 860,592 871,591.500 875,589.500 881,582 887,575.500 892,574.200 899,573.800" fill="none" stroke="#2a0606" stroke-width="1.500"/><path d="M203 502.500 H207 V641.500 H957" fill="none" stroke="#000" stroke-width="2"/><line x1="203" x2="207" y1="527.2" y2="527.2" stroke="#000" stroke-width="1.500"/><line x1="203" x2="207" y1="571.2" y2="571.2" stroke="#000" stroke-width="1.500"/><line x1="203" x2="207" y1="615.2" y2="615.2" stroke="#000" stroke-width="1.500"/><line x1="203" x2="207" y1="641.500" y2="641.500" stroke="#000" stroke-width="1.500"/><line x1="206.5" x2="206.5" y1="641" y2="645.500" stroke="#000" stroke-width="1.500"/><line x1="305.7" x2="305.7" y1="641" y2="645.500" stroke="#000" stroke-width="1.500"/><line x1="404.9" x2="404.9" y1="641" y2="645.500" stroke="#000" stroke-width="1.500"/><line x1="504.1" x2="504.1" y1="641" y2="645.500" stroke="#000" stroke-width="1.500"/><line x1="603.3" x2="603.3" y1="641" y2="645.500" stroke="#000" stroke-width="1.500"/><line x1="702.5" x2="702.5" y1="641" y2="645.500" stroke="#000" stroke-width="1.500"/><line x1="801.7" x2="801.7" y1="641" y2="645.500" stroke="#000" stroke-width="1.500"/><line x1="900.9" x2="900.9" y1="641" y2="645.500" stroke="#000" stroke-width="1.500"/><line x1="956.500" x2="956.500" y1="641" y2="645.500" stroke="#000" stroke-width="1.500"/><text x="198.500" y="530.2" font-size="9.500" text-anchor="end" textLength="25" lengthAdjust="spacingAndGlyphs" fill="#111">850m</text><text x="198.500" y="574.2" font-size="9.500" text-anchor="end" textLength="25" lengthAdjust="spacingAndGlyphs" fill="#111">800m</text><text x="198.500" y="618.2" font-size="9.500" text-anchor="end" textLength="25" lengthAdjust="spacingAndGlyphs" fill="#111">750m</text><text x="305.7" y="653" font-size="9.500" text-anchor="middle" textLength="25" lengthAdjust="spacingAndGlyphs" fill="#111">100m</text><text x="404.9" y="653" font-size="9.500" text-anchor="middle" textLength="25" lengthAdjust="spacingAndGlyphs" fill="#111">200m</text><text x="504.1" y="653" font-size="9.500" text-anchor="middle" textLength="25" lengthAdjust="spacingAndGlyphs" fill="#111">300m</text><text x="603.3" y="653" font-size="9.500" text-anchor="middle" textLength="25" lengthAdjust="spacingAndGlyphs" fill="#111">400m</text><text x="702.5" y="653" font-size="9.500" text-anchor="middle" textLength="25" lengthAdjust="spacingAndGlyphs" fill="#111">500m</text><text x="801.7" y="653" font-size="9.500" text-anchor="middle" textLength="25" lengthAdjust="spacingAndGlyphs" fill="#111">600m</text><text x="900.9" y="653" font-size="9.500" text-anchor="middle" textLength="25" lengthAdjust="spacingAndGlyphs" fill="#111">700m</text><circle cx="206.500" cy="655.500" r="5.800" fill="#fff" stroke="#e81010" stroke-width="1.800"/><text x="206.500" y="659.200" font-size="10.500" text-anchor="middle" fill="#111">A</text><circle cx="955.500" cy="655.500" r="5.800" fill="#fff" stroke="#1a6ae8" stroke-width="1.800"/><text x="955.500" y="659.200" font-size="10.500" text-anchor="middle" fill="#111">B</text></svg>
<div class="a" style="left:152px;top:668px;width:824px;height:22px;background:linear-gradient(#d9dbe0,#e6e8ec);border-top:1px solid #c3c6cd"></div>
<div class="a" style="left:158px;top:667px;width:62px;height:21px;border:2px solid #f81850;border-radius:3px;background:#f4f5f7"></div>
<div class="t " style="left:162px;top:673px;font-size:9.5px;transform:scaleX(0.853);">Cross Section</div>
<div class="t " style="left:229px;top:673px;font-size:9.5px;transform:scaleX(0.853);">Reserves</div>
<div class="t " style="left:282px;top:673px;font-size:9.5px;transform:scaleX(0.853);">Table</div>
<div class="t " style="left:319.5px;top:673px;font-size:9.5px;transform:scaleX(0.889);">Waterfall</div>
<div class="panel" style="left:981px;top:20px;width:215px;height:671px"></div>
<div class="a" style="left:982px;top:21px;width:213px;height:15px;background:linear-gradient(#eef0f3,#e3e5ea)"></div>
<div class="a" style="left:982px;top:35px;width:213px;height:1px;background:#d6d8de"></div>
<div class="t " style="left:985px;top:22px;font-size:9.5px;font-weight:bold;transform:scaleX(0.959);color:#9a9ca6">Overlays</div>
<div class="t " style="left:986px;top:44px;font-size:9.5px;transform:scaleX(0.853);">Boundary Display Mode</div>
<div class="a" style="left:1077px;top:42px;width:112px;height:16px;border:1px solid #b9bcc5;background:#fff"></div>
<div class="t " style="left:1080px;top:44px;font-size:9.5px;transform:scaleX(0.853);">Line</div>
<div class="a" style="left:1179px;top:48px;width:0;height:0;border-left:3px solid transparent;border-right:3px solid transparent;border-top:3px solid #111"></div>
<div class="a" style="left:983px;top:65px;width:210px;height:291px;border:1px solid #c3c6cd;border-radius:3px;background:#e9ebee"></div>
<div class="a" style="left:984px;top:66px;width:208px;height:13px;border-radius:2px 2px 0 0;background:linear-gradient(#f0f1f4,#e4e6ea)"></div>
<div class="t " style="left:991.6px;top:65.5px;font-size:9.5px;transform:scaleX(0.853);">Layers</div>
<div class="a" style="left:987px;top:82px;width:202px;height:21px;border:1px solid #cfd2d8;border-radius:2px;background:#ebedf0"></div>
<div class="btn" style="left:990px;top:84px;width:17px;height:17px"></div>
<div class="btn" style="left:1011px;top:84px;width:17px;height:17px"></div>
<div class="btn" style="left:1031px;top:84px;width:17px;height:17px"></div>
<div class="btn" style="left:1130px;top:84px;width:27px;height:17px"></div>
<div class="btn" style="left:1161px;top:84px;width:26px;height:17px"></div>
<svg class="a" style="left:987px;top:82px" width="202" height="21" viewBox="987 82 202 21"><defs><linearGradient id="bl2" x1="0" y1="0" x2="0" y2="1"><stop offset="0" stop-color="#a9d2f8"/><stop offset="1" stop-color="#3f86d4"/></linearGradient></defs><circle cx="998.500" cy="93" r="5.800" fill="url(#bl2)" stroke="#3f78b8" stroke-width="0.900"/><path d="M995.500 93 h6 M998.500 90 v6" stroke="#fff" stroke-width="1.800"/><path d="M1013.500 88.500 h4 l1 1.500 h5 v7 h-10z" fill="#f2c46a" stroke="#c8923a" stroke-width="0.800"/><circle cx="1022.500" cy="96.500" r="3" fill="#4a90e0" stroke="#2f6ab0" stroke-width="0.600"/><path d="M1021 96.500 h3 M1022.500 95 v3" stroke="#fff" stroke-width="0.900"/><path d="M1035.500 89 L1043.500 97 M1043.500 89 L1035.500 97" stroke="#e25858" stroke-width="2.300" stroke-linecap="round"/><path d="M1136.500 87 v8" stroke="#4aa830" stroke-width="2.400"/><path d="M1133 93.500 h7 l-3.500 4.500z" fill="#4aa830"/><text x="1144" y="92" font-size="6.500" font-weight="bold" text-anchor="middle" fill="#2a4ab0">A</text><text x="1144" y="98.500" font-size="6.500" font-weight="bold" text-anchor="middle" fill="#c03030">Z</text><path d="M1149 92 h5 l-2.500 3z" fill="#7b7e8a"/><path d="M1165.500 97.500 L1173 90" stroke="#c89030" stroke-width="2"/><path d="M1165.500 89.500 L1174 98" stroke="#8a8d98" stroke-width="1.800"/><path d="M1171 88 l3.500 1 -1 2.500z" fill="#9a9da8"/><circle cx="1166" cy="89.500" r="1.800" fill="none" stroke="#8a8d98" stroke-width="1"/><path d="M1178 92 h5 l-2.500 3z" fill="#7b7e8a"/></svg>
<div class="btn" style="left:987px;top:107px;width:202px;height:16px"></div>
<div class="a" style="left:989px;top:109px;width:13px;height:12px;background:linear-gradient(#a9dcae 0,#a9dcae 3px,#5fae68 3px,#5fae68 4px,#a9dcae 4px,#a9dcae 7px,#5fae68 7px,#5fae68 8px,#a9dcae 8px);border:1px solid #5fae68"></div>
<div class="t " style="left:1004px;top:109px;font-size:9.5px;transform:scaleX(0.853);">Custom</div>
<div class="a" style="left:1179px;top:114px;width:0;height:0;border-left:3px solid transparent;border-right:3px solid transparent;border-top:3px solid #7b7e8a"></div>
<div class="grid" style="left:987px;top:127px;width:202px;height:226px"></div>
<div class="gh" style="left:988px;top:128px;width:200px;height:16px"></div>
<div class="vl" style="left:1122px;top:128px;height:16px"></div>
<div class="vl" style="left:1141px;top:128px;height:16px"></div>
<div class="vl" style="left:1161px;top:128px;height:16px"></div>
<div class="t " style="left:990px;top:129px;font-size:9.5px;transform:scaleX(0.853);">Name</div>
<svg class="a" style="left:987px;top:127px" width="202" height="100" viewBox="987 127 202 100"><rect x="1015" y="144.500" width="173" height="13.500" fill="#ecedf1"/></svg><svg class="a" style="left:987px;top:127px" width="202" height="100" viewBox="987 127 202 100"><defs><linearGradient id="fold" x1="0" y1="0" x2="0" y2="1"><stop offset="0" stop-color="#fbe2a8"/><stop offset="1" stop-color="#eeb050"/></linearGradient></defs><g transform="translate(1152,136)" fill="none" stroke="#111" stroke-width="0.85"><polygon points="4.89,1.78 1.35,5.02 -3.34,3.98 -5.18,-0.45 -2.98,-4.26 1.78,-4.89 4.89,-1.78"/><line x1="0" y1="0" x2="4.89" y2="1.78"/><line x1="0" y1="0" x2="1.35" y2="5.02"/><line x1="0" y1="0" x2="-3.34" y2="3.98"/><line x1="0" y1="0" x2="-5.18" y2="-0.45"/><line x1="0" y1="0" x2="-2.98" y2="-4.26"/><line x1="0" y1="0" x2="1.78" y2="-4.89"/><line x1="0" y1="0" x2="4.89" y2="-1.78"/></g><path d="M992.500 148.3 v6 l3 -3z" fill="#6b6e7a"/><path d="M1002 146.8 h4 l1 1.500 h5.500 v2 h-10.500z" fill="#f3c878" stroke="#c78f38" stroke-width="0.700"/><path d="M1002 155.8 l2 -6 h10.500 l-2 6z" fill="url(#fold)" stroke="#c78f38" stroke-width="0.700"/><g transform="translate(1125,146.3)"><path d="M1 5 Q7 -1.600 13 5 Q7 10.600 1 5z" fill="#f6f7fb"/><circle cx="7" cy="4.800" r="2.600" fill="#7884a8"/><circle cx="7" cy="4.800" r="1.100" fill="#4a5478"/><path d="M1 5 Q7 10.600 13 5" fill="none" stroke="#6a78c0" stroke-width="1.100"/><path d="M1 5 Q7 -1.600 13 5" fill="none" stroke="#b08060" stroke-width="1.200"/><path d="M2 10 L12.500 0" stroke="#d0503a" stroke-width="1.300"/></g><g transform="translate(1152,151.3)" fill="none" stroke="#b8b8b8" stroke-width="0.7"><polygon points="4.89,1.78 1.35,5.02 -3.34,3.98 -5.18,-0.45 -2.98,-4.26 1.78,-4.89 4.89,-1.78"/><line x1="0" y1="0" x2="4.89" y2="1.78"/><line x1="0" y1="0" x2="1.35" y2="5.02"/><line x1="0" y1="0" x2="-3.34" y2="3.98"/><line x1="0" y1="0" x2="-5.18" y2="-0.45"/><line x1="0" y1="0" x2="-2.98" y2="-4.26"/><line x1="0" y1="0" x2="1.78" y2="-4.89"/><line x1="0" y1="0" x2="4.89" y2="-1.78"/></g><rect x="1163.500" y="145.3" width="11.500" height="12" fill="#fff" stroke="#c8c8c8" stroke-width="0.800"/><path d="M1164 150.3 l5 -5 M1164 156.3 l11 -11 M1169.500 157.3 l5.500 -5.500" stroke="#f83030" stroke-width="1.100" fill="none"/><path d="M1179.500 150.3 h5 l-2.500 3z" fill="#111"/><path d="M992.500 162.1 v6 l3 -3z" fill="#6b6e7a"/><path d="M1002 160.6 h4 l1 1.500 h5.500 v2 h-10.500z" fill="#f3c878" stroke="#c78f38" stroke-width="0.700"/><path d="M1002 169.6 l2 -6 h10.500 l-2 6z" fill="url(#fold)" stroke="#c78f38" stroke-width="0.700"/><g transform="translate(1125,160.1)"><path d="M1 5 Q7 -1.600 13 5 Q7 10.600 1 5z" fill="#f6f7fb"/><circle cx="7" cy="4.800" r="2.600" fill="#7884a8"/><circle cx="7" cy="4.800" r="1.100" fill="#4a5478"/><path d="M1 5 Q7 10.600 13 5" fill="none" stroke="#6a78c0" stroke-width="1.100"/><path d="M1 5 Q7 -1.600 13 5" fill="none" stroke="#b08060" stroke-width="1.200"/><path d="M2 10 L12.500 0" stroke="#d0503a" stroke-width="1.300"/></g><g transform="translate(1152,165.13000000000002)" fill="none" stroke="#b8b8b8" stroke-width="0.7"><polygon points="4.89,1.78 1.35,5.02 -3.34,3.98 -5.18,-0.45 -2.98,-4.26 1.78,-4.89 4.89,-1.78"/><line x1="0" y1="0" x2="4.89" y2="1.78"/><line x1="0" y1="0" x2="1.35" y2="5.02"/><line x1="0" y1="0" x2="-3.34" y2="3.98"/><line x1="0" y1="0" x2="-5.18" y2="-0.45"/><line x1="0" y1="0" x2="-2.98" y2="-4.26"/><line x1="0" y1="0" x2="1.78" y2="-4.89"/><line x1="0" y1="0" x2="4.89" y2="-1.78"/></g><rect x="1163.500" y="159.1" width="11.500" height="12" fill="#fff" stroke="#c8c8c8" stroke-width="0.800"/><path d="M1164 164.1 l5 -5 M1164 170.1 l11 -11 M1169.500 171.1 l5.500 -5.500" stroke="#f83030" stroke-width="1.100" fill="none"/><path d="M1179.500 164.1 h5 l-2.500 3z" fill="#111"/><circle cx="1005.500" cy="177.0" r="2.800" fill="#e03a2a"/><circle cx="1010.500" cy="177.0" r="2.800" fill="#f0b020"/><path d="M1003 179.0 h10 l-5 5.500z" fill="#40a030"/><circle cx="1008" cy="180.5" r="2.500" fill="#48b038"/><g transform="translate(1125,174.0)"><path d="M1 5 Q7 -1.600 13 5 Q7 10.600 1 5z" fill="#f6f7fb"/><circle cx="7" cy="4.800" r="2.600" fill="#7884a8"/><circle cx="7" cy="4.800" r="1.100" fill="#4a5478"/><path d="M1 5 Q7 10.600 13 5" fill="none" stroke="#6a78c0" stroke-width="1.100"/><path d="M1 5 Q7 -1.600 13 5" fill="none" stroke="#b08060" stroke-width="1.200"/><path d="M2 10 L12.500 0" stroke="#d0503a" stroke-width="1.300"/></g><g transform="translate(1152,178.96000000000004)" fill="none" stroke="#111" stroke-width="0.85"><polygon points="4.89,1.78 1.35,5.02 -3.34,3.98 -5.18,-0.45 -2.98,-4.26 1.78,-4.89 4.89,-1.78"/><line x1="0" y1="0" x2="4.89" y2="1.78"/><line x1="0" y1="0" x2="1.35" y2="5.02"/><line x1="0" y1="0" x2="-3.34" y2="3.98"/><line x1="0" y1="0" x2="-5.18" y2="-0.45"/><line x1="0" y1="0" x2="-2.98" y2="-4.26"/><line x1="0" y1="0" x2="1.78" y2="-4.89"/><line x1="0" y1="0" x2="4.89" y2="-1.78"/></g><rect x="1163.500" y="173.5" width="11.500" height="11" fill="#b8d898" stroke="#7a8a6a" stroke-width="0.800"/><path d="M1165 175.0 L1173 183.0" stroke="#e05030" stroke-width="1.200"/><path d="M1166 182.0 l3 -5 3 3" fill="none" stroke="#f0d040" stroke-width="1.200"/><path d="M1179.500 178.0 h5 l-2.500 3z" fill="#111"/><path d="M992.500 189.8 v6 l3 -3z" fill="#6b6e7a"/><path d="M1002 188.3 h4 l1 1.500 h5.500 v2 h-10.500z" fill="#f3c878" stroke="#c78f38" stroke-width="0.700"/><path d="M1002 197.3 l2 -6 h10.500 l-2 6z" fill="url(#fold)" stroke="#c78f38" stroke-width="0.700"/><g transform="translate(1125,187.8)"><path d="M1 5 Q7 -1.600 13 5 Q7 10.600 1 5z" fill="#f6f7fb"/><circle cx="7" cy="4.800" r="2.600" fill="#7884a8"/><circle cx="7" cy="4.800" r="1.100" fill="#4a5478"/><path d="M1 5 Q7 10.600 13 5" fill="none" stroke="#6a78c0" stroke-width="1.100"/><path d="M1 5 Q7 -1.600 13 5" fill="none" stroke="#b08060" stroke-width="1.200"/><path d="M2 10 L12.500 0" stroke="#d0503a" stroke-width="1.300"/></g><g transform="translate(1152,192.79000000000005)" fill="none" stroke="#111" stroke-width="0.85"><polygon points="4.89,1.78 1.35,5.02 -3.34,3.98 -5.18,-0.45 -2.98,-4.26 1.78,-4.89 4.89,-1.78"/><line x1="0" y1="0" x2="4.89" y2="1.78"/><line x1="0" y1="0" x2="1.35" y2="5.02"/><line x1="0" y1="0" x2="-3.34" y2="3.98"/><line x1="0" y1="0" x2="-5.18" y2="-0.45"/><line x1="0" y1="0" x2="-2.98" y2="-4.26"/><line x1="0" y1="0" x2="1.78" y2="-4.89"/><line x1="0" y1="0" x2="4.89" y2="-1.78"/></g><rect x="1163.500" y="186.8" width="11.500" height="12" fill="#fff" stroke="#c8c8c8" stroke-width="0.800"/><path d="M1164 191.8 l5 -5 M1164 197.8 l11 -11 M1169.500 198.8 l5.500 -5.500" stroke="#f83030" stroke-width="1.100" fill="none"/><path d="M1179.500 191.8 h5 l-2.500 3z" fill="#111"/><path d="M992.500 203.6 v6 l3 -3z" fill="#6b6e7a"/><path d="M1002 202.1 h4 l1 1.500 h5.500 v2 h-10.500z" fill="#f3c878" stroke="#c78f38" stroke-width="0.700"/><path d="M1002 211.1 l2 -6 h10.500 l-2 6z" fill="url(#fold)" stroke="#c78f38" stroke-width="0.700"/><g transform="translate(1125,201.6)"><path d="M1 5 Q7 -1.600 13 5 Q7 10.600 1 5z" fill="#f6f7fb"/><circle cx="7" cy="4.800" r="2.600" fill="#7884a8"/><circle cx="7" cy="4.800" r="1.100" fill="#4a5478"/><path d="M1 5 Q7 10.600 13 5" fill="none" stroke="#6a78c0" stroke-width="1.100"/><path d="M1 5 Q7 -1.600 13 5" fill="none" stroke="#b08060" stroke-width="1.200"/><path d="M2 10 L12.500 0" stroke="#d0503a" stroke-width="1.300"/></g><g transform="translate(1152,206.62000000000006)" fill="none" stroke="#111" stroke-width="0.85"><polygon points="4.89,1.78 1.35,5.02 -3.34,3.98 -5.18,-0.45 -2.98,-4.26 1.78,-4.89 4.89,-1.78"/><line x1="0" y1="0" x2="4.89" y2="1.78"/><line x1="0" y1="0" x2="1.35" y2="5.02"/><line x1="0" y1="0" x2="-3.34" y2="3.98"/><line x1="0" y1="0" x2="-5.18" y2="-0.45"/><line x1="0" y1="0" x2="-2.98" y2="-4.26"/><line x1="0" y1="0" x2="1.78" y2="-4.89"/><line x1="0" y1="0" x2="4.89" y2="-1.78"/></g><rect x="1163.500" y="200.6" width="11.500" height="12" fill="#fff" stroke="#c8c8c8" stroke-width="0.800"/><path d="M1164 205.6 l5 -5 M1164 211.6 l11 -11 M1169.500 212.6 l5.500 -5.500" stroke="#f83030" stroke-width="1.100" fill="none"/><path d="M1179.500 205.6 h5 l-2.500 3z" fill="#111"/></svg>
<svg class="a" style="left:1125px;top:131px" width="14" height="10" viewBox="0 0 14 10"><path d="M1 5 Q7 -1.800 13 5 Q7 10.800 1 5z" fill="#fff"/><circle cx="7" cy="4.800" r="2.800" fill="#5c6c88"/><circle cx="7" cy="4.800" r="1.200" fill="#2a3248"/><circle cx="6.100" cy="4" r="0.800" fill="#d8e2ee"/><path d="M1 5 Q7 10.800 13 5" fill="none" stroke="#5c6cba" stroke-width="1.050"/><path d="M1 5 Q7 -1.800 13 5" fill="none" stroke="#a8683e" stroke-width="1.250"/></svg>
<div class="a" style="left:1168.25px;top:129.5px;width:11.500px;height:11.500px;border-radius:50%;background:radial-gradient(circle at 48% 45%,#fff 0,rgba(255,255,255,0.75) 22%,rgba(255,255,255,0) 62%),conic-gradient(from 0deg,#ffe93b,#ff2a2a 24%,#e020c0 38%,#3030ff 50%,#20e8f0 68%,#30e040 84%,#ffe93b);box-shadow:0 0 0 0.500px rgba(200,200,200,0.6)"></div>
<div class="t " style="left:1018px;top:145px;font-size:9.5px;transform:scaleX(0.853);">Production Surfaces</div>
<div class="t " style="left:1018px;top:159px;font-size:9.5px;transform:scaleX(0.853);">Schedule Surfaces</div>
<div class="t " style="left:1018px;top:172px;font-size:9.5px;transform:scaleX(0.853);">finalcut</div>
<div class="t " style="left:1018px;top:186px;font-size:9.5px;transform:scaleX(0.853);">From Surface Lab</div>
<div class="t " style="left:1018px;top:200px;font-size:9.5px;transform:scaleX(0.853);">Solids</div>
<div class="a" style="left:1083.0px;top:358.5px;width:1.500px;height:1.500px;background:#9da0aa"></div>
<div class="a" style="left:1085.5px;top:358.5px;width:1.500px;height:1.500px;background:#9da0aa"></div>
<div class="a" style="left:1088.0px;top:358.5px;width:1.500px;height:1.500px;background:#9da0aa"></div>
<div class="a" style="left:1090.5px;top:358.5px;width:1.500px;height:1.500px;background:#9da0aa"></div>
<div class="a" style="left:1083.0px;top:480.5px;width:1.500px;height:1.500px;background:#9da0aa"></div>
<div class="a" style="left:1085.5px;top:480.5px;width:1.500px;height:1.500px;background:#9da0aa"></div>
<div class="a" style="left:1088.0px;top:480.5px;width:1.500px;height:1.500px;background:#9da0aa"></div>
<div class="a" style="left:1090.5px;top:480.5px;width:1.500px;height:1.500px;background:#9da0aa"></div>
<div class="a" style="left:983px;top:363px;width:210px;height:116px;border:1px solid #c3c6cd;border-radius:3px;background:#e9ebee"></div>
<div class="a" style="left:984px;top:364px;width:208px;height:13px;border-radius:2px 2px 0 0;background:linear-gradient(#f0f1f4,#e4e6ea)"></div>
<div class="t " style="left:991.6px;top:363.5px;font-size:9.5px;transform:scaleX(0.853);">Surfaces</div>
<div class="grid" style="left:985px;top:379px;width:206px;height:98px"></div>
<div class="gh" style="left:986px;top:380px;width:204px;height:16px"></div>
<div class="t " style="left:1022.7px;top:380.4px;font-size:9.5px;transform:scaleX(0.853);">Name</div>
<div class="a" style="left:986px;top:396px;width:204px;height:15px;background:#eeeff2;border-bottom:1px solid #dcdee3"></div>
<div class="a" style="left:986px;top:396px;width:12px;height:15px;background:#eeeff2;border-bottom:1px solid #d5d7dd"></div>
<div class="a" style="left:999px;top:396px;width:20px;height:14px;background:#fff"></div>
<div class="t " style="left:1022.7px;top:396.5px;font-size:9.5px;transform:scaleX(0.853);">Schedule Start - January</div>
<div class="sw" style="left:1153.700px;top:397.75px;width:34.400px;height:11px;background:#016e24"></div>
<svg class="a" style="left:1002px;top:398px" width="14" height="10" viewBox="0 0 14 10"><path d="M1 5 Q7 -1.800 13 5 Q7 10.800 1 5z" fill="#fff"/><circle cx="7" cy="4.800" r="2.800" fill="#5c6c88"/><circle cx="7" cy="4.800" r="1.200" fill="#2a3248"/><circle cx="6.100" cy="4" r="0.800" fill="#d8e2ee"/><path d="M1 5 Q7 10.800 13 5" fill="none" stroke="#5c6cba" stroke-width="1.050"/><path d="M1 5 Q7 -1.800 13 5" fill="none" stroke="#a8683e" stroke-width="1.250"/></svg>
<div class="a" style="left:986px;top:411px;width:204px;height:14px;background:#fff;border-bottom:1px solid #dcdee3"></div>
<div class="a" style="left:986px;top:411px;width:12px;height:14px;background:#eeeff2;border-bottom:1px solid #d5d7dd"></div>
<div class="a" style="left:999px;top:411px;width:20px;height:13px;background:#fff"></div>
<div class="t " style="left:1022.7px;top:411.5px;font-size:9.5px;transform:scaleX(0.853);">Schedule End - January</div>
<div class="sw" style="left:1153.700px;top:412.75px;width:34.400px;height:11px;background:#ff00ff"></div>
<svg class="a" style="left:1002px;top:413px" width="14" height="10" viewBox="0 0 14 10"><path d="M1 5 Q7 -1.800 13 5 Q7 10.800 1 5z" fill="#fff"/><circle cx="7" cy="4.800" r="2.800" fill="#5c6c88"/><circle cx="7" cy="4.800" r="1.200" fill="#2a3248"/><circle cx="6.100" cy="4" r="0.800" fill="#d8e2ee"/><path d="M1 5 Q7 10.800 13 5" fill="none" stroke="#5c6cba" stroke-width="1.050"/><path d="M1 5 Q7 -1.800 13 5" fill="none" stroke="#a8683e" stroke-width="1.250"/></svg>
<div class="a" style="left:986px;top:425px;width:204px;height:15px;background:#fff;border-bottom:1px solid #dcdee3"></div>
<div class="a" style="left:986px;top:425px;width:12px;height:15px;background:#eeeff2;border-bottom:1px solid #d5d7dd"></div>
<div class="a" style="left:999px;top:425px;width:20px;height:14px;background:#fff"></div>
<div class="t " style="left:1022.7px;top:425.5px;font-size:9.5px;transform:scaleX(0.853);">Schedule Future - February</div>
<div class="sw" style="left:1153.700px;top:426.75px;width:34.400px;height:11px;background:#ff0000"></div>
<svg class="a" style="left:1002px;top:427px" width="14" height="10" viewBox="0 0 14 10"><path d="M1 5 Q7 -1.800 13 5 Q7 10.800 1 5z" fill="#fff"/><circle cx="7" cy="4.800" r="2.800" fill="#5c6c88"/><circle cx="7" cy="4.800" r="1.200" fill="#2a3248"/><circle cx="6.100" cy="4" r="0.800" fill="#d8e2ee"/><path d="M1 5 Q7 10.800 13 5" fill="none" stroke="#5c6cba" stroke-width="1.050"/><path d="M1 5 Q7 -1.800 13 5" fill="none" stroke="#a8683e" stroke-width="1.250"/></svg>
<div class="a" style="left:986px;top:440px;width:204px;height:14px;background:#fff;border-bottom:1px solid #dcdee3"></div>
<div class="a" style="left:986px;top:440px;width:12px;height:14px;background:#eeeff2;border-bottom:1px solid #d5d7dd"></div>
<div class="a" style="left:999px;top:440px;width:20px;height:13px;background:#fff"></div>
<div class="t " style="left:1022.7px;top:440.5px;font-size:9.5px;transform:scaleX(0.853);">Production Start - January</div>
<div class="sw" style="left:1153.700px;top:441.75px;width:34.400px;height:11px;background:#5e3a00"></div>
<svg class="a" style="left:1002px;top:442px" width="14" height="10" viewBox="0 0 14 10"><path d="M1 5 Q7 -1.800 13 5 Q7 10.800 1 5z" fill="#fff"/><circle cx="7" cy="4.800" r="2.800" fill="#5c6c88"/><circle cx="7" cy="4.800" r="1.200" fill="#2a3248"/><circle cx="6.100" cy="4" r="0.800" fill="#d8e2ee"/><path d="M1 5 Q7 10.800 13 5" fill="none" stroke="#5c6cba" stroke-width="1.050"/><path d="M1 5 Q7 -1.800 13 5" fill="none" stroke="#a8683e" stroke-width="1.250"/></svg>
<div class="a" style="left:986px;top:454px;width:204px;height:15px;background:#fff;border-bottom:1px solid #dcdee3"></div>
<div class="a" style="left:986px;top:454px;width:12px;height:15px;background:#eeeff2;border-bottom:1px solid #d5d7dd"></div>
<div class="a" style="left:999px;top:454px;width:20px;height:14px;background:#fff"></div>
<div class="t " style="left:1022.7px;top:454.5px;font-size:9.5px;transform:scaleX(0.853);">Production End - January</div>
<div class="sw" style="left:1153.700px;top:455.75px;width:34.400px;height:11px;background:#000000"></div>
<svg class="a" style="left:1002px;top:456px" width="14" height="10" viewBox="0 0 14 10"><path d="M1 5 Q7 -1.800 13 5 Q7 10.800 1 5z" fill="#fff"/><circle cx="7" cy="4.800" r="2.800" fill="#5c6c88"/><circle cx="7" cy="4.800" r="1.200" fill="#2a3248"/><circle cx="6.100" cy="4" r="0.800" fill="#d8e2ee"/><path d="M1 5 Q7 10.800 13 5" fill="none" stroke="#5c6cba" stroke-width="1.050"/><path d="M1 5 Q7 -1.800 13 5" fill="none" stroke="#a8683e" stroke-width="1.250"/></svg>
<div class="a" style="left:991px;top:400px;width:0;height:0;border-top:3px solid transparent;border-bottom:3px solid transparent;border-left:3px solid #222"></div>
<div class="vl" style="left:998px;top:380px;height:89px"></div>
<div class="vl" style="left:1019px;top:380px;height:89px"></div>
<div class="vl" style="left:1151px;top:380px;height:89px"></div>
<svg class="a" style="left:1002px;top:382px" width="14" height="10" viewBox="0 0 14 10"><path d="M1 5 Q7 -1.800 13 5 Q7 10.800 1 5z" fill="#fff"/><circle cx="7" cy="4.800" r="2.800" fill="#5c6c88"/><circle cx="7" cy="4.800" r="1.200" fill="#2a3248"/><circle cx="6.100" cy="4" r="0.800" fill="#d8e2ee"/><path d="M1 5 Q7 10.800 13 5" fill="none" stroke="#5c6cba" stroke-width="1.050"/><path d="M1 5 Q7 -1.800 13 5" fill="none" stroke="#a8683e" stroke-width="1.250"/></svg>
<div class="a" style="left:1165.25px;top:381.5px;width:11.500px;height:11.500px;border-radius:50%;background:radial-gradient(circle at 48% 45%,#fff 0,rgba(255,255,255,0.75) 22%,rgba(255,255,255,0) 62%),conic-gradient(from 0deg,#ffe93b,#ff2a2a 24%,#e020c0 38%,#3030ff 50%,#20e8f0 68%,#30e040 84%,#ffe93b);box-shadow:0 0 0 0.500px rgba(200,200,200,0.6)"></div>
<div class="a" style="left:983px;top:484px;width:210px;height:206px;border:1px solid #c3c6cd;border-radius:3px;background:#e9ebee"></div>
<div class="a" style="left:984px;top:485px;width:208px;height:13px;border-radius:2px 2px 0 0;background:linear-gradient(#f0f1f4,#e4e6ea)"></div>
<div class="t " style="left:991.6px;top:484.5px;font-size:9.5px;transform:scaleX(0.853);">Domains</div>
<div class="grid" style="left:985px;top:499px;width:206px;height:188px"></div>
<div class="gh" style="left:986px;top:500px;width:204px;height:17px"></div>
<div class="t " style="left:1022px;top:501.4px;font-size:9.5px;transform:scaleX(0.853);">Name</div>
<div class="a" style="left:986px;top:517px;width:204px;height:15px;background:#fff;border-bottom:1px solid #dcdee3"></div>
<div class="a" style="left:986px;top:517px;width:12px;height:15px;background:#eeeff2;border-bottom:1px solid #d5d7dd"></div>
<div class="t grey" style="left:1022px;top:517.5px;font-size:9.5px;transform:scaleX(0.853);">Cut Not Planned</div>
<div class="sw" style="left:1153.700px;top:518.75px;width:34.400px;height:11px;background:#ff0000"></div>
<svg class="a" style="left:1001px;top:519px" width="14" height="10" viewBox="0 0 14 10"><path d="M1 5 Q7 -1.800 13 5 Q7 10.800 1 5z" fill="#fff"/><circle cx="7" cy="4.800" r="2.800" fill="#5c6c88"/><circle cx="7" cy="4.800" r="1.200" fill="#2a3248"/><circle cx="6.100" cy="4" r="0.800" fill="#d8e2ee"/><path d="M1 5 Q7 10.800 13 5" fill="none" stroke="#5c6cba" stroke-width="1.050"/><path d="M1 5 Q7 -1.800 13 5" fill="none" stroke="#a8683e" stroke-width="1.250"/></svg>
<div class="a" style="left:986px;top:532px;width:204px;height:14px;background:#fff;border-bottom:1px solid #dcdee3"></div>
<div class="a" style="left:986px;top:532px;width:12px;height:14px;background:#eeeff2;border-bottom:1px solid #d5d7dd"></div>
<div class="t grey" style="left:1022px;top:532.5px;font-size:9.5px;transform:scaleX(0.853);">Cut Late</div>
<div class="sw" style="left:1153.700px;top:533.75px;width:34.400px;height:11px;background:#ff14c8"></div>
<svg class="a" style="left:1001px;top:534px" width="14" height="10" viewBox="0 0 14 10"><path d="M1 5 Q7 -1.800 13 5 Q7 10.800 1 5z" fill="#fff"/><circle cx="7" cy="4.800" r="2.800" fill="#5c6c88"/><circle cx="7" cy="4.800" r="1.200" fill="#2a3248"/><circle cx="6.100" cy="4" r="0.800" fill="#d8e2ee"/><path d="M1 5 Q7 10.800 13 5" fill="none" stroke="#5c6cba" stroke-width="1.050"/><path d="M1 5 Q7 -1.800 13 5" fill="none" stroke="#a8683e" stroke-width="1.250"/></svg>
<div class="a" style="left:986px;top:546px;width:204px;height:15px;background:#fff;border-bottom:1px solid #dcdee3"></div>
<div class="a" style="left:986px;top:546px;width:12px;height:15px;background:#eeeff2;border-bottom:1px solid #d5d7dd"></div>
<div class="t grey" style="left:1022px;top:546.5px;font-size:9.5px;transform:scaleX(0.853);">Over Cut</div>
<div class="sw" style="left:1153.700px;top:547.75px;width:34.400px;height:11px;background:#00ffff"></div>
<svg class="a" style="left:1001px;top:548px" width="14" height="10" viewBox="0 0 14 10"><path d="M1 5 Q7 -1.800 13 5 Q7 10.800 1 5z" fill="#fff"/><circle cx="7" cy="4.800" r="2.800" fill="#5c6c88"/><circle cx="7" cy="4.800" r="1.200" fill="#2a3248"/><circle cx="6.100" cy="4" r="0.800" fill="#d8e2ee"/><path d="M1 5 Q7 10.800 13 5" fill="none" stroke="#5c6cba" stroke-width="1.050"/><path d="M1 5 Q7 -1.800 13 5" fill="none" stroke="#a8683e" stroke-width="1.250"/></svg>
<div class="a" style="left:986px;top:561px;width:204px;height:15px;background:#fff;border-bottom:1px solid #dcdee3"></div>
<div class="a" style="left:986px;top:561px;width:12px;height:15px;background:#eeeff2;border-bottom:1px solid #d5d7dd"></div>
<div class="t " style="left:1022px;top:561.5px;font-size:9.5px;transform:scaleX(0.853);">Cut in Plan</div>
<div class="sw" style="left:1153.700px;top:562.75px;width:34.400px;height:11px;background:#46b946"></div>
<svg class="a" style="left:1001px;top:563px" width="14" height="10" viewBox="0 0 14 10"><path d="M1 5 Q7 -1.800 13 5 Q7 10.800 1 5z" fill="#fff"/><circle cx="7" cy="4.800" r="2.800" fill="#5c6c88"/><circle cx="7" cy="4.800" r="1.200" fill="#2a3248"/><circle cx="6.100" cy="4" r="0.800" fill="#d8e2ee"/><path d="M1 5 Q7 10.800 13 5" fill="none" stroke="#5c6cba" stroke-width="1.050"/><path d="M1 5 Q7 -1.800 13 5" fill="none" stroke="#a8683e" stroke-width="1.250"/></svg>
<div class="a" style="left:986px;top:576px;width:204px;height:14px;background:#fff;border-bottom:1px solid #dcdee3"></div>
<div class="a" style="left:986px;top:576px;width:12px;height:14px;background:#eeeff2;border-bottom:1px solid #d5d7dd"></div>
<div class="t " style="left:1022px;top:576.5px;font-size:9.5px;transform:scaleX(0.853);">Planned Not Cut</div>
<div class="sw" style="left:1153.700px;top:577.75px;width:34.400px;height:11px;background:#ffa000"></div>
<svg class="a" style="left:1001px;top:578px" width="14" height="10" viewBox="0 0 14 10"><path d="M1 5 Q7 -1.800 13 5 Q7 10.800 1 5z" fill="#fff"/><circle cx="7" cy="4.800" r="2.800" fill="#5c6c88"/><circle cx="7" cy="4.800" r="1.200" fill="#2a3248"/><circle cx="6.100" cy="4" r="0.800" fill="#d8e2ee"/><path d="M1 5 Q7 10.800 13 5" fill="none" stroke="#5c6cba" stroke-width="1.050"/><path d="M1 5 Q7 -1.800 13 5" fill="none" stroke="#a8683e" stroke-width="1.250"/></svg>
<div class="a" style="left:986px;top:590px;width:204px;height:15px;background:#fff;border-bottom:1px solid #dcdee3"></div>
<div class="a" style="left:986px;top:590px;width:12px;height:15px;background:#eeeff2;border-bottom:1px solid #d5d7dd"></div>
<div class="t " style="left:1022px;top:590.5px;font-size:9.5px;transform:scaleX(0.853);">Cut Early</div>
<div class="sw" style="left:1153.700px;top:591.75px;width:34.400px;height:11px;background:#0000ff"></div>
<svg class="a" style="left:1001px;top:592px" width="14" height="10" viewBox="0 0 14 10"><path d="M1 5 Q7 -1.800 13 5 Q7 10.800 1 5z" fill="#fff"/><circle cx="7" cy="4.800" r="2.800" fill="#5c6c88"/><circle cx="7" cy="4.800" r="1.200" fill="#2a3248"/><circle cx="6.100" cy="4" r="0.800" fill="#d8e2ee"/><path d="M1 5 Q7 10.800 13 5" fill="none" stroke="#5c6cba" stroke-width="1.050"/><path d="M1 5 Q7 -1.800 13 5" fill="none" stroke="#a8683e" stroke-width="1.250"/></svg>
<div class="a" style="left:986px;top:605px;width:204px;height:14px;background:#fff;border-bottom:1px solid #dcdee3"></div>
<div class="a" style="left:986px;top:605px;width:12px;height:14px;background:#eeeff2;border-bottom:1px solid #d5d7dd"></div>
<div class="t grey" style="left:1022px;top:605.5px;font-size:9.5px;transform:scaleX(0.853);">Filled Not Planned</div>
<div class="sw" style="left:1153.700px;top:606.75px;width:34.400px;height:11px;background:#686b7e"></div>
<svg class="a" style="left:1001px;top:607px" width="14" height="10" viewBox="0 0 14 10"><path d="M1 5 Q7 -1.800 13 5 Q7 10.800 1 5z" fill="#fff"/><circle cx="7" cy="4.800" r="2.800" fill="#5c6c88"/><circle cx="7" cy="4.800" r="1.200" fill="#2a3248"/><circle cx="6.100" cy="4" r="0.800" fill="#d8e2ee"/><path d="M1 5 Q7 10.800 13 5" fill="none" stroke="#5c6cba" stroke-width="1.050"/><path d="M1 5 Q7 -1.800 13 5" fill="none" stroke="#a8683e" stroke-width="1.250"/></svg>
<div class="a" style="left:986px;top:619px;width:204px;height:15px;background:#fff;border-bottom:1px solid #dcdee3"></div>
<div class="a" style="left:986px;top:619px;width:12px;height:15px;background:#eeeff2;border-bottom:1px solid #d5d7dd"></div>
<div class="t grey" style="left:1022px;top:619.5px;font-size:9.5px;transform:scaleX(0.853);">Filled in Plan</div>
<div class="sw" style="left:1153.700px;top:620.75px;width:34.400px;height:11px;background:#686b7e"></div>
<svg class="a" style="left:1001px;top:621px" width="14" height="10" viewBox="0 0 14 10"><path d="M1 5 Q7 -1.800 13 5 Q7 10.800 1 5z" fill="#fff"/><circle cx="7" cy="4.800" r="2.800" fill="#5c6c88"/><circle cx="7" cy="4.800" r="1.200" fill="#2a3248"/><circle cx="6.100" cy="4" r="0.800" fill="#d8e2ee"/><path d="M1 5 Q7 10.800 13 5" fill="none" stroke="#5c6cba" stroke-width="1.050"/><path d="M1 5 Q7 -1.800 13 5" fill="none" stroke="#a8683e" stroke-width="1.250"/></svg>
<div class="a" style="left:986px;top:634px;width:204px;height:15px;background:#fff;border-bottom:1px solid #dcdee3"></div>
<div class="a" style="left:986px;top:634px;width:12px;height:15px;background:#eeeff2;border-bottom:1px solid #d5d7dd"></div>
<div class="t grey" style="left:1022px;top:634.5px;font-size:9.5px;transform:scaleX(0.853);">Planned Not Filled</div>
<div class="sw" style="left:1153.700px;top:635.75px;width:34.400px;height:11px;background:#686b7e"></div>
<svg class="a" style="left:1001px;top:636px" width="14" height="10" viewBox="0 0 14 10"><path d="M1 5 Q7 -1.800 13 5 Q7 10.800 1 5z" fill="#fff"/><circle cx="7" cy="4.800" r="2.800" fill="#5c6c88"/><circle cx="7" cy="4.800" r="1.200" fill="#2a3248"/><circle cx="6.100" cy="4" r="0.800" fill="#d8e2ee"/><path d="M1 5 Q7 10.800 13 5" fill="none" stroke="#5c6cba" stroke-width="1.050"/><path d="M1 5 Q7 -1.800 13 5" fill="none" stroke="#a8683e" stroke-width="1.250"/></svg>
<div class="vl" style="left:998px;top:500px;height:149px"></div>
<div class="vl" style="left:1018px;top:500px;height:149px"></div>
<div class="vl" style="left:1151px;top:500px;height:149px"></div>
<svg class="a" style="left:1001px;top:503px" width="14" height="10" viewBox="0 0 14 10"><path d="M1 5 Q7 -1.800 13 5 Q7 10.800 1 5z" fill="#fff"/><circle cx="7" cy="4.800" r="2.800" fill="#5c6c88"/><circle cx="7" cy="4.800" r="1.200" fill="#2a3248"/><circle cx="6.100" cy="4" r="0.800" fill="#d8e2ee"/><path d="M1 5 Q7 10.800 13 5" fill="none" stroke="#5c6cba" stroke-width="1.050"/><path d="M1 5 Q7 -1.800 13 5" fill="none" stroke="#a8683e" stroke-width="1.250"/></svg>
<div class="a" style="left:1165.25px;top:502.5px;width:11.500px;height:11.500px;border-radius:50%;background:radial-gradient(circle at 48% 45%,#fff 0,rgba(255,255,255,0.75) 22%,rgba(255,255,255,0) 62%),conic-gradient(from 0deg,#ffe93b,#ff2a2a 24%,#e020c0 38%,#3030ff 50%,#20e8f0 68%,#30e040 84%,#ffe93b);box-shadow:0 0 0 0.500px rgba(200,200,200,0.6)"></div></body></html>
